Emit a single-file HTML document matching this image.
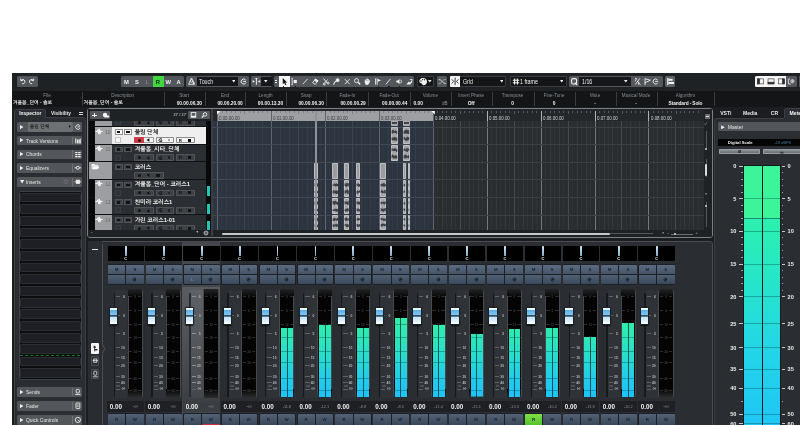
<!DOCTYPE html>
<html lang="ko"><head><meta charset="utf-8"><title>Cubase</title><style>
html,body{margin:0;padding:0;background:#fff;}
body{width:800px;height:425px;overflow:hidden;position:relative;font-family:"Liberation Sans","NanumGothic","Noto Sans CJK KR",sans-serif;}
#app{position:absolute;left:0;top:0;width:800px;height:425px;overflow:hidden;background:#fff;will-change:transform;}
#app div,#app span,#app svg{position:absolute;box-sizing:border-box;}
.t{white-space:nowrap;line-height:1;}
</style></head><body><div id="app">
<div style="left:12.00px;top:73.00px;width:788.00px;height:352.00px;background:#1b1d20;"></div>
<div style="left:12.00px;top:73.00px;width:788.00px;height:17.50px;background:#1f2225;"></div>
<div style="left:12.00px;top:90.50px;width:788.00px;height:16.50px;background:#131517;"></div>
<div style="left:16.50px;top:76.30px;width:21.00px;height:10.70px;background:#53565a;border-radius:1.5px;"></div>
<svg style="left:16.5px;top:76.3px" width="21" height="10.7" viewBox="0 0 21 10.7"><g fill="none" stroke="#eee" stroke-width="1"><path d="M4.2 4.3 A2.1 2.1 0 1 1 5.2 7.6"/><path d="M3.6 2.6 L3.9 4.8 L6 4.4"/><path d="M16.2 4.3 A2.1 2.1 0 1 0 15.2 7.6"/><path d="M16.8 2.6 L16.5 4.8 L14.4 4.4"/></g></svg>
<div style="left:121.30px;top:76.30px;width:62.50px;height:10.70px;background:#53565a;border-radius:1.5px;"></div>
<div style="left:153.00px;top:76.30px;width:10.50px;height:10.70px;background:#3fd63f;"></div>
<span class="t" style="left:121.30px;top:80.00px;font-size:5.8px;color:#f2f2f2;font-weight:bold;width:10.42px;text-align:center;">M</span>
<span class="t" style="left:131.72px;top:80.00px;font-size:5.8px;color:#f2f2f2;font-weight:bold;width:10.42px;text-align:center;">S</span>
<span class="t" style="left:142.14px;top:80.00px;font-size:5.8px;color:#7c7f83;font-weight:bold;width:10.42px;text-align:center;">L</span>
<span class="t" style="left:152.56px;top:80.00px;font-size:5.8px;color:#0a2a0a;font-weight:bold;width:10.42px;text-align:center;">R</span>
<span class="t" style="left:162.98px;top:80.00px;font-size:5.8px;color:#f2f2f2;font-weight:bold;width:10.42px;text-align:center;">W</span>
<span class="t" style="left:173.40px;top:80.00px;font-size:5.8px;color:#f2f2f2;font-weight:bold;width:10.42px;text-align:center;">A</span>
<div style="left:186.20px;top:76.30px;width:62.60px;height:10.70px;background:#53565a;border-radius:1.5px;"></div>
<div style="left:197.00px;top:76.80px;width:40.60px;height:9.70px;background:#15171a;"></div>
<span class="t" style="left:199.40px;top:79.00px;font-size:6.6px;color:#e8e8e8;font-weight:normal;transform:scaleX(0.8);transform-origin:0 50%;">Touch</span>
<svg style="left:231.50px;top:80.30px" width="3.6" height="2.6" viewBox="0 0 3.6 2.6"><path d="M0 0 L3.6 0 L1.8 2.6Z" fill="#f0f0f0"/></svg>
<svg style="left:186.2px;top:76.3px" width="11" height="10.7" viewBox="0 0 11 10.7"><g fill="none" stroke="#e6e6e6" stroke-width="0.9"><path d="M5.5 2 L2.6 8.3 L8.4 8.3 Z"/><circle cx="5.5" cy="5" r="1.3"/><path d="M6.5 7.2 L8.9 7.2 M7.7 6 L7.7 8.4"/></g></svg>
<svg style="left:238px;top:76.3px" width="11" height="10.7" viewBox="0 0 11 10.7"><g fill="none" stroke="#eee" stroke-width="1"><path d="M7.6 4 A2.5 2.5 0 1 0 7.9 6.6"/><path d="M5 5.4 L8 5.4"/></g></svg>
<div style="left:250.60px;top:76.30px;width:21.40px;height:10.70px;background:#53565a;border-radius:1.5px;"></div>
<div style="left:261.00px;top:76.80px;width:10.50px;height:9.70px;background:#15171a;"></div>
<svg style="left:264.40px;top:80.30px" width="3.6" height="2.6" viewBox="0 0 3.6 2.6"><path d="M0 0 L3.6 0 L1.8 2.6Z" fill="#f0f0f0"/></svg>
<svg style="left:250.6px;top:76.3px" width="11" height="10.7" viewBox="0 0 11 10.7"><g stroke="#eee" stroke-width="1" fill="#eee"><path d="M5.4 2 L5.4 8.8" fill="none"/><path d="M1.6 4 L4 5.4 L1.6 6.8 Z" stroke="none"/><path d="M9.2 4 L6.8 5.4 L9.2 6.8 Z" stroke="none"/><path d="M3.8 2.3 L7 2.3 L5.4 3.6Z" stroke="none"/></g></svg>
<div style="left:273.80px;top:76.30px;width:140.60px;height:10.70px;background:#53565a;border-radius:1.5px;"></div>
<div style="left:279.00px;top:76.30px;width:10.50px;height:10.70px;background:#f4f4f4;"></div>
<div style="left:275.20px;top:80.20px;width:1.60px;height:1.20px;background:#e8e8e8;"></div>
<div style="left:275.20px;top:82.30px;width:1.60px;height:1.20px;background:#e8e8e8;"></div>
<svg style="left:279.00px;top:76.3px" width="10.42" height="10.7" viewBox="0 0 10.4 10.7"><g transform="translate(5.2 5.5) scale(0.88) translate(-5.2 -5.35)"><path d="M3.6 1.4 L3.6 8.6 L5.3 6.9 L6.5 9.6 L7.6 9.1 L6.4 6.5 L8.6 6.4 Z" fill="#111"/></g></svg>
<div style="left:282.60px;top:86.40px;width:1.20px;height:0.80px;background:#1a1a1a;"></div>
<div style="left:295.20px;top:86.40px;width:1.20px;height:0.80px;background:#1a1a1a;"></div>
<div style="left:378.00px;top:86.40px;width:1.20px;height:0.80px;background:#1a1a1a;"></div>
<div style="left:388.40px;top:86.40px;width:1.20px;height:0.80px;background:#1a1a1a;"></div>
<div style="left:398.60px;top:86.40px;width:1.20px;height:0.80px;background:#1a1a1a;"></div>
<svg style="left:289.42px;top:76.3px" width="10.42" height="10.7" viewBox="0 0 10.4 10.7"><g transform="translate(5.2 5.5) scale(0.88) translate(-5.2 -5.35)"><g stroke="#f0f0f0" fill="none" stroke-width="1"><path d="M2.2 1.8 L3.6 1.8 M2.9 1.8 L2.9 8.9 M2.2 8.9 L3.6 8.9"/><rect x="4.6" y="3.6" width="3.6" height="3.6" fill="#f0f0f0" stroke="none"/></g></g></svg>
<svg style="left:299.84px;top:76.3px" width="10.42" height="10.7" viewBox="0 0 10.4 10.7"><g transform="translate(5.2 5.5) scale(0.88) translate(-5.2 -5.35)"><g stroke="#f0f0f0" fill="none" stroke-width="1" stroke-width="1.5"><path d="M2.4 8.4 L7.8 2.6"/></g></g></svg>
<svg style="left:310.26px;top:76.3px" width="10.42" height="10.7" viewBox="0 0 10.4 10.7"><g transform="translate(5.2 5.5) scale(0.88) translate(-5.2 -5.35)"><g stroke="#f0f0f0" fill="none" stroke-width="1"><path d="M2.2 6.6 L5.6 2.6 L8.4 4.6 L5.2 8.6 Z"/><path d="M5.6 2.6 L8.4 4.6 L7.2 6 L4.4 4 Z" fill="#f0f0f0"/></g></g></svg>
<svg style="left:320.68px;top:76.3px" width="10.42" height="10.7" viewBox="0 0 10.4 10.7"><g transform="translate(5.2 5.5) scale(0.88) translate(-5.2 -5.35)"><g stroke="#f0f0f0" fill="none" stroke-width="1"><path d="M2.2 2 L6.4 7.2 M6.6 3.2 L3.4 7.2"/><circle cx="3" cy="8.3" r="1.1"/><circle cx="7.4" cy="7.2" r="1.1"/></g></g></svg>
<svg style="left:331.10px;top:76.3px" width="10.42" height="10.7" viewBox="0 0 10.4 10.7"><g transform="translate(5.2 5.5) scale(0.88) translate(-5.2 -5.35)"><g stroke="#f0f0f0" fill="none" stroke-width="1"><path d="M2.2 8.8 Q3 5.6 5.4 4.8" stroke-width="1.3"/><circle cx="6.8" cy="3.8" r="1.7" fill="#f0f0f0"/></g></g></svg>
<svg style="left:341.52px;top:76.3px" width="10.42" height="10.7" viewBox="0 0 10.4 10.7"><g transform="translate(5.2 5.5) scale(0.88) translate(-5.2 -5.35)"><g stroke="#f0f0f0" fill="none" stroke-width="1" stroke-width="1.4"><path d="M2.4 2.6 L8 8.4 M8 2.6 L2.4 8.4"/></g></g></svg>
<svg style="left:351.94px;top:76.3px" width="10.42" height="10.7" viewBox="0 0 10.4 10.7"><g transform="translate(5.2 5.5) scale(0.88) translate(-5.2 -5.35)"><g stroke="#f0f0f0" fill="none" stroke-width="1" stroke-width="1.1"><circle cx="4.4" cy="4.4" r="2.3"/><path d="M6.2 6.2 L8.6 8.8" stroke-width="1.5"/></g></g></svg>
<svg style="left:362.36px;top:76.3px" width="10.42" height="10.7" viewBox="0 0 10.4 10.7"><g transform="translate(5.2 5.5) scale(0.88) translate(-5.2 -5.35)"><path d="M2.4 5 L2.4 3.6 Q3 3 3.6 3.6 L3.6 2.6 Q4.2 2 4.8 2.6 L4.8 2.3 Q5.4 1.7 6 2.3 L6 2.7 Q6.6 2.2 7.2 2.8 L7.2 4.6 L8 4 Q8.8 3.9 8.6 4.8 L7.4 7.4 Q6.8 9.2 5 9.2 Q3 9.2 2.4 7 Z" fill="#eee"/><path d="M3.6 3.6 L3.6 5 M4.8 2.8 L4.8 5 M6 2.8 L6 5" stroke="#53565a" stroke-width="0.35" fill="none"/></g></svg>
<svg style="left:372.78px;top:76.3px" width="10.42" height="10.7" viewBox="0 0 10.4 10.7"><g transform="translate(5.2 5.5) scale(0.88) translate(-5.2 -5.35)"><g stroke="#f0f0f0" fill="none" stroke-width="1"><path d="M2.2 1.8 L2.2 9 M4 1.8 L4 9"/><path d="M4.6 2.4 L8.4 3.8 L4.6 5.6 Z" fill="#f0f0f0" stroke="none"/></g></g></svg>
<svg style="left:383.20px;top:76.3px" width="10.42" height="10.7" viewBox="0 0 10.4 10.7"><g transform="translate(5.2 5.5) scale(0.88) translate(-5.2 -5.35)"><g stroke="#f0f0f0" fill="none" stroke-width="1" stroke-width="1.2"><path d="M2.6 8.6 L7.8 2.4"/></g></g></svg>
<svg style="left:393.62px;top:76.3px" width="10.42" height="10.7" viewBox="0 0 10.4 10.7"><g transform="translate(5.2 5.5) scale(0.88) translate(-5.2 -5.35)"><g stroke="#f0f0f0" fill="none" stroke-width="1"><path d="M2 4.3 L3.6 4.3 L5.6 2.4 L5.6 8.4 L3.6 6.6 L2 6.6 Z" fill="#f0f0f0" stroke="none"/><path d="M7 3.4 Q8.4 5.4 7 7.4"/></g></g></svg>
<svg style="left:404.04px;top:76.3px" width="10.42" height="10.7" viewBox="0 0 10.4 10.7"><g transform="translate(5.2 5.5) scale(0.88) translate(-5.2 -5.35)"><path d="M2 8.8 L4.6 5.4 L6 6.4 L8.6 3.6 L8.6 6.2 L6.2 8.8 Z M5.2 2.6 L8.8 2.6 L8.8 4.6Z" fill="#eee"/></g></svg>
<div style="left:416.90px;top:76.30px;width:17.60px;height:10.70px;background:#131517;border:0.8px solid #3a3d41;border-radius:1px;"></div>
<svg style="left:417.5px;top:76.3px" width="10" height="10.7" viewBox="0 0 10 10.7"><path d="M5 2 C2.2 2 1 4 1.4 5.8 C1.8 7.6 3.2 7 3.8 7.6 C4.4 8.4 4.2 9.2 5.4 9.2 C7.6 9.2 9 7.4 9 5.4 C9 3.4 7.4 2 5 2 Z" fill="#f2f2f2"/><circle cx="3" cy="5" r="0.7" fill="#222"/><circle cx="4.6" cy="3.6" r="0.7" fill="#222"/><circle cx="6.6" cy="3.8" r="0.7" fill="#222"/></svg>
<svg style="left:428.20px;top:80.30px" width="3.6" height="2.6" viewBox="0 0 3.6 2.6"><path d="M0 0 L3.6 0 L1.8 2.6Z" fill="#f0f0f0"/></svg>
<div style="left:436.90px;top:76.30px;width:10.30px;height:10.70px;background:#53565a;border-radius:1.5px;"></div>
<svg style="left:436.9px;top:76.3px" width="10.3" height="10.7" viewBox="0 0 10.3 10.7"><g fill="none" stroke="#eee" stroke-width="0.8"><path d="M1.6 3.4 C4.8 3.4 5.4 7.6 8.8 7.6"/><path d="M1.6 7.6 C3.4 7.6 4.2 6.6 5.1 5.5 C6 4.4 6.8 3.4 8.8 3.4" stroke-width="0.6" stroke="#cfcfcf"/></g></svg>
<div style="left:450.00px;top:76.30px;width:56.40px;height:10.70px;background:#131517;border:0.8px solid #3a3d41;border-radius:1px;"></div>
<div style="left:450.00px;top:76.30px;width:10.20px;height:10.70px;background:#f4f4f4;border-radius:1px 0 0 1px;"></div>
<svg style="left:450px;top:76.3px" width="10.2" height="10.7" viewBox="0 0 10.2 10.7"><g stroke="#222" stroke-width="0.9" fill="none"><path d="M5.1 1.6 L5.1 9.2"/><path d="M1.8 3.4 L3.8 5.4 L1.8 7.4 M8.4 3.4 L6.4 5.4 L8.4 7.4"/></g></svg>
<span class="t" style="left:462.80px;top:79.00px;font-size:6.6px;color:#e8e8e8;font-weight:normal;transform:scaleX(0.8);transform-origin:0 50%;">Grid</span>
<svg style="left:499.80px;top:80.30px" width="3.6" height="2.6" viewBox="0 0 3.6 2.6"><path d="M0 0 L3.6 0 L1.8 2.6Z" fill="#f0f0f0"/></svg>
<div style="left:509.60px;top:76.30px;width:57.00px;height:10.70px;background:#131517;border:0.8px solid #3a3d41;border-radius:1px;"></div>
<svg style="left:511.5px;top:76.3px" width="8" height="10.7" viewBox="0 0 8 10.7"><g stroke="#f2f2f2" stroke-width="1.1" fill="none"><path d="M2.6 2.4 L2.6 8.6 M5.4 2.4 L5.4 8.6 M0.8 4.2 L7.2 4.2 M0.8 6.8 L7.2 6.8"/></g></svg>
<span class="t" style="left:520.40px;top:79.00px;font-size:6.6px;color:#f0f0f0;font-weight:normal;transform:scaleX(0.8);transform-origin:0 50%;">1 frame</span>
<svg style="left:559.60px;top:80.30px" width="3.6" height="2.6" viewBox="0 0 3.6 2.6"><path d="M0 0 L3.6 0 L1.8 2.6Z" fill="#f0f0f0"/></svg>
<div style="left:569.00px;top:76.30px;width:93.50px;height:10.70px;background:#53565a;border-radius:1.5px;"></div>
<div style="left:579.40px;top:76.80px;width:51.80px;height:9.70px;background:#15171a;"></div>
<svg style="left:569px;top:76.3px" width="10.4" height="10.7" viewBox="0 0 10.4 10.7"><g stroke="#f2f2f2" stroke-width="1.1" fill="none"><rect x="2.6" y="2.6" width="5" height="5.4" rx="1.4"/><path d="M5.8 6.6 L8.2 9"/></g></svg>
<span class="t" style="left:582.00px;top:79.00px;font-size:6.6px;color:#f0f0f0;font-weight:normal;transform:scaleX(0.8);transform-origin:0 50%;">1/16</span>
<svg style="left:624.40px;top:80.30px" width="3.6" height="2.6" viewBox="0 0 3.6 2.6"><path d="M0 0 L3.6 0 L1.8 2.6Z" fill="#f0f0f0"/></svg>
<svg style="left:631.5px;top:76.3px" width="31" height="10.7" viewBox="0 0 31 10.7"><g stroke="#eee" stroke-width="0.9" fill="none"><path d="M3.2 8.6 L7.8 2.4"/><path d="M3 2.6 L4.6 2.6 L3.2 5.4"/><path d="M6.6 5.4 L6.6 8.8 M6.6 7 L8.6 8.8"/><path d="M13 2.6 L13 9 M13 2.8 L18.4 4.2 L13 6.8"/><path d="M25.6 4 A2.5 2.5 0 1 0 25.9 6.6"/><path d="M23 5.4 L26 5.4"/></g></svg>
<div style="left:664.60px;top:76.30px;width:10.60px;height:10.70px;background:#5e6165;border-radius:1.5px;"></div>
<svg style="left:664.6px;top:76.3px" width="10.6" height="10.7" viewBox="0 0 10.6 10.7"><g fill="#f2f2f2"><rect x="2.2" y="2" width="1.2" height="7"/><rect x="3.4" y="2.8" width="4.2" height="2"/><rect x="3.4" y="6" width="5.6" height="2"/></g></svg>
<div style="left:755.00px;top:76.30px;width:42.00px;height:10.70px;background:#53565a;border-radius:1.5px;"></div>
<div style="left:755.00px;top:76.30px;width:31.20px;height:10.70px;background:#f4f4f4;border-radius:1.5px 0 0 1.5px;"></div>
<svg style="left:755px;top:76.3px" width="42" height="10.7" viewBox="0 0 42 10.7"><g stroke="#2a2a2a" stroke-width="0.6" fill="none"><rect x="2.6" y="2.9" width="6" height="5"/><rect x="2.6" y="2.9" width="2" height="5" fill="#2a2a2a"/><rect x="13" y="2.9" width="6" height="5"/><rect x="13" y="6.2" width="6" height="1.7" fill="#2a2a2a"/><rect x="23.4" y="2.9" width="6" height="5"/><rect x="27.4" y="2.9" width="2" height="5" fill="#2a2a2a"/></g><g stroke="#eee" stroke-width="0.8" fill="none"><path d="M33.4 3 L33.4 8 L36 8 M33.4 3 L35 3"/><circle cx="37.4" cy="5.2" r="1.6"/><circle cx="37.4" cy="5.2" r="0.5" fill="#eee"/></g></svg>
<div style="left:799.00px;top:76.30px;width:1.00px;height:10.70px;background:#53565a;"></div>
<div style="left:81.60px;top:92.20px;width:0.60px;height:13.80px;background:#3a3d40;"></div>
<div style="left:163.70px;top:92.20px;width:0.60px;height:13.80px;background:#3a3d40;"></div>
<div style="left:204.60px;top:92.20px;width:0.60px;height:13.80px;background:#3a3d40;"></div>
<div style="left:245.40px;top:92.20px;width:0.60px;height:13.80px;background:#3a3d40;"></div>
<div style="left:285.80px;top:92.20px;width:0.60px;height:13.80px;background:#3a3d40;"></div>
<div style="left:326.40px;top:92.20px;width:0.60px;height:13.80px;background:#3a3d40;"></div>
<div style="left:368.40px;top:92.20px;width:0.60px;height:13.80px;background:#3a3d40;"></div>
<div style="left:410.00px;top:92.20px;width:0.60px;height:13.80px;background:#3a3d40;"></div>
<div style="left:450.60px;top:92.20px;width:0.60px;height:13.80px;background:#3a3d40;"></div>
<div style="left:491.60px;top:92.20px;width:0.60px;height:13.80px;background:#3a3d40;"></div>
<div style="left:533.60px;top:92.20px;width:0.60px;height:13.80px;background:#3a3d40;"></div>
<div style="left:574.60px;top:92.20px;width:0.60px;height:13.80px;background:#3a3d40;"></div>
<div style="left:615.60px;top:92.20px;width:0.60px;height:13.80px;background:#3a3d40;"></div>
<div style="left:656.50px;top:92.20px;width:0.60px;height:13.80px;background:#3a3d40;"></div>
<div style="left:714.40px;top:92.20px;width:0.60px;height:13.80px;background:#3a3d40;"></div>
<span class="t" style="left:12.50px;top:94.00px;font-size:4.6px;color:#8a8d91;font-weight:normal;width:69.10px;text-align:center;">File</span>
<span class="t" style="left:12.90px;top:101.00px;font-size:4.9px;color:#f0f0f0;font-weight:bold;">겨울봄_단어 - 솔로</span>
<span class="t" style="left:81.60px;top:94.00px;font-size:4.6px;color:#8a8d91;font-weight:normal;width:82.10px;text-align:center;">Description</span>
<span class="t" style="left:83.60px;top:101.00px;font-size:4.9px;color:#f0f0f0;font-weight:bold;">겨울봄_단어 - 솔로</span>
<span class="t" style="left:163.70px;top:94.00px;font-size:4.6px;color:#8a8d91;font-weight:normal;width:40.90px;text-align:center;">Start</span>
<span class="t" style="left:163.70px;top:102.00px;font-size:4.8px;color:#f0f0f0;font-weight:bold;width:38.30px;text-align:right;">00.00.06.30</span>
<span class="t" style="left:204.60px;top:94.00px;font-size:4.6px;color:#8a8d91;font-weight:normal;width:40.80px;text-align:center;">End</span>
<span class="t" style="left:204.60px;top:102.00px;font-size:4.8px;color:#f0f0f0;font-weight:bold;width:38.20px;text-align:right;">00.00.20.00</span>
<span class="t" style="left:245.40px;top:94.00px;font-size:4.6px;color:#8a8d91;font-weight:normal;width:40.40px;text-align:center;">Length</span>
<span class="t" style="left:245.40px;top:102.00px;font-size:4.8px;color:#f0f0f0;font-weight:bold;width:37.80px;text-align:right;">00.00.13.30</span>
<span class="t" style="left:285.80px;top:94.00px;font-size:4.6px;color:#8a8d91;font-weight:normal;width:40.60px;text-align:center;">Snap</span>
<span class="t" style="left:285.80px;top:102.00px;font-size:4.8px;color:#f0f0f0;font-weight:bold;width:38.00px;text-align:right;">00.00.06.30</span>
<span class="t" style="left:326.40px;top:94.00px;font-size:4.6px;color:#8a8d91;font-weight:normal;width:42.00px;text-align:center;">Fade-In</span>
<span class="t" style="left:326.40px;top:102.00px;font-size:4.8px;color:#f0f0f0;font-weight:bold;width:39.40px;text-align:right;">00.00.00.29</span>
<span class="t" style="left:368.40px;top:94.00px;font-size:4.6px;color:#8a8d91;font-weight:normal;width:41.60px;text-align:center;">Fade-Out</span>
<span class="t" style="left:368.40px;top:102.00px;font-size:4.8px;color:#f0f0f0;font-weight:bold;width:39.00px;text-align:right;">00.00.00.44</span>
<span class="t" style="left:410.00px;top:94.00px;font-size:4.6px;color:#8a8d91;font-weight:normal;width:40.60px;text-align:center;">Volume</span>
<span class="t" style="left:413.50px;top:102.00px;font-size:4.8px;color:#f0f0f0;font-weight:bold;">0.00</span>
<span class="t" style="left:410.00px;top:102.00px;font-size:4.6px;color:#8f9296;font-weight:normal;width:37.60px;text-align:right;">dB</span>
<span class="t" style="left:450.60px;top:94.00px;font-size:4.6px;color:#8a8d91;font-weight:normal;width:41.00px;text-align:center;">Invert Phase</span>
<span class="t" style="left:450.60px;top:102.00px;font-size:4.8px;color:#f0f0f0;font-weight:bold;width:41.00px;text-align:center;">Off</span>
<span class="t" style="left:491.60px;top:94.00px;font-size:4.6px;color:#8a8d91;font-weight:normal;width:42.00px;text-align:center;">Transpose</span>
<span class="t" style="left:491.60px;top:102.00px;font-size:4.8px;color:#f0f0f0;font-weight:bold;width:42.00px;text-align:center;">0</span>
<span class="t" style="left:533.60px;top:94.00px;font-size:4.6px;color:#8a8d91;font-weight:normal;width:41.00px;text-align:center;">Fine-Tune</span>
<span class="t" style="left:533.60px;top:102.00px;font-size:4.8px;color:#f0f0f0;font-weight:bold;width:41.00px;text-align:center;">0</span>
<span class="t" style="left:574.60px;top:94.00px;font-size:4.6px;color:#8a8d91;font-weight:normal;width:41.00px;text-align:center;">Mute</span>
<span class="t" style="left:574.60px;top:102.00px;font-size:4.8px;color:#f0f0f0;font-weight:bold;width:41.00px;text-align:center;">-</span>
<span class="t" style="left:615.60px;top:94.00px;font-size:4.6px;color:#8a8d91;font-weight:normal;width:40.90px;text-align:center;">Musical Mode</span>
<span class="t" style="left:615.60px;top:102.00px;font-size:4.8px;color:#f0f0f0;font-weight:bold;width:40.90px;text-align:center;">-</span>
<span class="t" style="left:656.50px;top:94.00px;font-size:4.6px;color:#8a8d91;font-weight:normal;width:57.90px;text-align:center;">Algorithm</span>
<span class="t" style="left:656.50px;top:102.00px;font-size:4.8px;color:#f0f0f0;font-weight:bold;width:57.90px;text-align:center;letter-spacing:-0.12px;">Standard - Solo</span>
<div style="left:14.20px;top:116.80px;width:71.60px;height:310.00px;background:#2a2d31;border-radius:0 2.5px 0 0;border:0.6px solid #3b3e42;"></div>
<div style="left:14.20px;top:108.60px;width:32.20px;height:9.00px;background:#2a2d31;border-radius:2.5px 2.5px 0 0;border:0.6px solid #3b3e42;border-bottom:none;"></div>
<span class="t" style="left:14.20px;top:112.00px;font-size:4.9px;color:#f4f4f4;font-weight:bold;width:32.20px;text-align:center;">Inspector</span>
<span class="t" style="left:51.00px;top:112.00px;font-size:4.9px;color:#e4e4e4;font-weight:bold;">Visibility</span>
<div style="left:79.20px;top:112.00px;width:3.60px;height:0.80px;background:#ddd;"></div>
<div style="left:79.20px;top:113.90px;width:3.60px;height:0.80px;background:#ddd;"></div>
<div style="left:17.30px;top:122.00px;width:65.00px;height:9.50px;background:#53565a;border-radius:1.5px;"></div>
<div style="left:72.20px;top:122.80px;width:0.50px;height:7.90px;background:#6e7175;"></div>
<svg style="left:20.20px;top:124.70px" width="3.4" height="4.2" viewBox="0 0 3.4 4.2"><path d="M0 0 L3.4 2.1 L0 4.2Z" fill="#f0f0f0"/></svg>
<div style="left:27.50px;top:122.00px;width:44.50px;height:9.50px;background:#6e7174;"></div>
<span class="t" style="left:29.80px;top:125.00px;font-size:4.8px;color:#1a1a1a;font-weight:bold;">울림 단체</span>
<svg style="left:69.00px;top:125.40px" width="1.8" height="2.8" viewBox="0 0 1.8 2.8"><path d="M0 0 L1.8 1.4 L0 2.8Z" fill="#111"/></svg>
<div style="left:17.30px;top:135.75px;width:65.00px;height:9.50px;background:#53565a;border-radius:1.5px;"></div>
<div style="left:72.20px;top:136.55px;width:0.50px;height:7.90px;background:#6e7175;"></div>
<svg style="left:20.20px;top:138.45px" width="3.4" height="4.2" viewBox="0 0 3.4 4.2"><path d="M0 0 L3.4 2.1 L0 4.2Z" fill="#f0f0f0"/></svg>
<span class="t" style="left:26.00px;top:140.00px;font-size:4.9px;color:#e6e6e6;font-weight:normal;">Track Versions</span>
<div style="left:17.30px;top:149.50px;width:65.00px;height:9.50px;background:#53565a;border-radius:1.5px;"></div>
<div style="left:72.20px;top:150.30px;width:0.50px;height:7.90px;background:#6e7175;"></div>
<svg style="left:20.20px;top:152.20px" width="3.4" height="4.2" viewBox="0 0 3.4 4.2"><path d="M0 0 L3.4 2.1 L0 4.2Z" fill="#f0f0f0"/></svg>
<span class="t" style="left:26.00px;top:153.00px;font-size:4.9px;color:#e6e6e6;font-weight:normal;">Chords</span>
<div style="left:17.30px;top:163.25px;width:65.00px;height:9.50px;background:#53565a;border-radius:1.5px;"></div>
<div style="left:72.20px;top:164.05px;width:0.50px;height:7.90px;background:#6e7175;"></div>
<svg style="left:20.20px;top:165.95px" width="3.4" height="4.2" viewBox="0 0 3.4 4.2"><path d="M0 0 L3.4 2.1 L0 4.2Z" fill="#f0f0f0"/></svg>
<span class="t" style="left:26.00px;top:167.00px;font-size:4.9px;color:#e6e6e6;font-weight:normal;">Equalizers</span>
<div style="left:17.30px;top:177.00px;width:65.00px;height:9.50px;background:#53565a;border-radius:1.5px;"></div>
<div style="left:72.20px;top:177.80px;width:0.50px;height:7.90px;background:#6e7175;"></div>
<svg style="left:20.00px;top:180.20px" width="4.2" height="3.4" viewBox="0 0 4.2 3.4"><path d="M0 0 L4.2 0 L2.1 3.4Z" fill="#f0f0f0"/></svg>
<span class="t" style="left:26.00px;top:181.00px;font-size:4.9px;color:#e6e6e6;font-weight:normal;">Inserts</span>
<div style="left:17.30px;top:387.20px;width:65.00px;height:9.50px;background:#53565a;border-radius:1.5px;"></div>
<div style="left:72.20px;top:388.00px;width:0.50px;height:7.90px;background:#6e7175;"></div>
<svg style="left:20.20px;top:389.90px" width="3.4" height="4.2" viewBox="0 0 3.4 4.2"><path d="M0 0 L3.4 2.1 L0 4.2Z" fill="#f0f0f0"/></svg>
<span class="t" style="left:26.00px;top:391.00px;font-size:4.9px;color:#e6e6e6;font-weight:normal;">Sends</span>
<div style="left:17.30px;top:401.20px;width:65.00px;height:9.50px;background:#53565a;border-radius:1.5px;"></div>
<div style="left:72.20px;top:402.00px;width:0.50px;height:7.90px;background:#6e7175;"></div>
<svg style="left:20.20px;top:403.90px" width="3.4" height="4.2" viewBox="0 0 3.4 4.2"><path d="M0 0 L3.4 2.1 L0 4.2Z" fill="#f0f0f0"/></svg>
<span class="t" style="left:26.00px;top:405.00px;font-size:4.9px;color:#e6e6e6;font-weight:normal;">Fader</span>
<div style="left:17.30px;top:415.10px;width:65.00px;height:9.50px;background:#53565a;border-radius:1.5px;"></div>
<div style="left:72.20px;top:415.90px;width:0.50px;height:7.90px;background:#6e7175;"></div>
<svg style="left:20.20px;top:417.80px" width="3.4" height="4.2" viewBox="0 0 3.4 4.2"><path d="M0 0 L3.4 2.1 L0 4.2Z" fill="#f0f0f0"/></svg>
<span class="t" style="left:26.00px;top:419.00px;font-size:4.9px;color:#e6e6e6;font-weight:normal;">Quick Controls</span>
<svg style="left:72.7px;top:122px" width="9.6" height="9.5" viewBox="0 0 9.6 9.5"><g fill="none" stroke="#eee" stroke-width="0.9"><path d="M6.8 3.6 A2.3 2.3 0 1 0 7.1 6"/><path d="M4.4 4.9 L7.2 4.9"/></g></svg>
<svg style="left:72.7px;top:135.75px" width="9.6" height="9.5" viewBox="0 0 9.6 9.5"><g fill="#eee"><rect x="2.2" y="2.4" width="1.1" height="5"/><rect x="4" y="3.4" width="1.6" height="4"/><path d="M6.2 3.4 L7.8 2.4 L7.8 7.4 L6.2 7.4Z"/></g></svg>
<svg style="left:72.7px;top:149.5px" width="9.6" height="9.5" viewBox="0 0 9.6 9.5"><g fill="#eee"><rect x="2.2" y="2" width="5.4" height="1.2"/><rect x="2.2" y="4" width="5.4" height="1.2"/><rect x="2.2" y="6" width="5.4" height="1.4"/><rect x="4.5" y="2" width="0.6" height="5.4" fill="#4b4e52"/></g></svg>
<svg style="left:72.7px;top:163.25px" width="9.6" height="9.5" viewBox="0 0 9.6 9.5"><g fill="none" stroke="#eee" stroke-width="0.9" stroke-width="0.7"><path d="M1.6 4.8 L3.4 4.8 M6.4 4.8 L8.2 4.8"/><circle cx="4.9" cy="4.8" r="1.5"/></g></svg>
<svg style="left:72.7px;top:177px" width="9.6" height="9.5" viewBox="0 0 9.6 9.5"><g fill="none" stroke="#eee" stroke-width="0.9" stroke-width="0.7"><path d="M1.6 4.8 L8.2 4.8"/><rect x="3.4" y="3.2" width="3" height="3.2" fill="#eee"/></g></svg>
<svg style="left:61px;top:177px" width="9.6" height="9.5" viewBox="0 0 9.6 9.5"><g fill="none" stroke="#7a7d81" stroke-width="0.7"><circle cx="4.8" cy="4.6" r="1.8"/></g></svg>
<svg style="left:72.7px;top:387.2px" width="9.6" height="9.5" viewBox="0 0 9.6 9.5"><g fill="none" stroke="#eee" stroke-width="0.9" stroke-width="0.7"><rect x="3.2" y="2.4" width="3.2" height="3.6" rx="1"/><path d="M2.2 7.4 L7.6 7.4"/></g></svg>
<svg style="left:72.7px;top:401.2px" width="9.6" height="9.5" viewBox="0 0 9.6 9.5"><g fill="none" stroke="#eee" stroke-width="0.9" stroke-width="0.7"><rect x="3" y="2" width="3.8" height="5.6" rx="0.6"/><path d="M4.9 3.4 L4.9 6.2"/></g></svg>
<svg style="left:72.7px;top:415.1px" width="9.6" height="9.5" viewBox="0 0 9.6 9.5"><g fill="none" stroke="#eee" stroke-width="0.9" stroke-width="0.9"><circle cx="4.9" cy="4.9" r="2.6"/><path d="M4.9 4.9 L6.6 6.6"/></g></svg>
<div style="left:18.60px;top:190.60px;width:63.00px;height:189.00px;background:#0c0d0e;border-radius:2px;border:0.6px solid #3d4044;"></div>
<div style="left:19.80px;top:192.50px;width:60.80px;height:9.90px;background:#1d1f25;border-radius:1.2px;border:0.5px solid #2b2e34;"></div>
<div style="left:19.80px;top:204.18px;width:60.80px;height:9.90px;background:#1d1f25;border-radius:1.2px;border:0.5px solid #2b2e34;"></div>
<div style="left:19.80px;top:215.86px;width:60.80px;height:9.90px;background:#1d1f25;border-radius:1.2px;border:0.5px solid #2b2e34;"></div>
<div style="left:19.80px;top:227.54px;width:60.80px;height:9.90px;background:#1d1f25;border-radius:1.2px;border:0.5px solid #2b2e34;"></div>
<div style="left:19.80px;top:239.22px;width:60.80px;height:9.90px;background:#1d1f25;border-radius:1.2px;border:0.5px solid #2b2e34;"></div>
<div style="left:19.80px;top:250.90px;width:60.80px;height:9.90px;background:#1d1f25;border-radius:1.2px;border:0.5px solid #2b2e34;"></div>
<div style="left:19.80px;top:262.58px;width:60.80px;height:9.90px;background:#1d1f25;border-radius:1.2px;border:0.5px solid #2b2e34;"></div>
<div style="left:19.80px;top:274.26px;width:60.80px;height:9.90px;background:#1d1f25;border-radius:1.2px;border:0.5px solid #2b2e34;"></div>
<div style="left:19.80px;top:285.94px;width:60.80px;height:9.90px;background:#1d1f25;border-radius:1.2px;border:0.5px solid #2b2e34;"></div>
<div style="left:19.80px;top:297.62px;width:60.80px;height:9.90px;background:#1d1f25;border-radius:1.2px;border:0.5px solid #2b2e34;"></div>
<div style="left:19.80px;top:309.30px;width:60.80px;height:9.90px;background:#1d1f25;border-radius:1.2px;border:0.5px solid #2b2e34;"></div>
<div style="left:19.80px;top:320.98px;width:60.80px;height:9.90px;background:#1d1f25;border-radius:1.2px;border:0.5px solid #2b2e34;"></div>
<div style="left:19.80px;top:332.66px;width:60.80px;height:9.90px;background:#1d1f25;border-radius:1.2px;border:0.5px solid #2b2e34;"></div>
<div style="left:19.80px;top:344.34px;width:60.80px;height:9.90px;background:#1d1f25;border-radius:1.2px;border:0.5px solid #2b2e34;"></div>
<div style="left:19.80px;top:356.80px;width:60.80px;height:9.40px;background:#1d1f25;border-radius:1.2px;border:0.5px solid #2b2e34;"></div>
<div style="left:19.80px;top:368.00px;width:60.80px;height:9.60px;background:#1d1f25;border-radius:1.2px;border:0.5px solid #2b2e34;"></div>
<div style="left:20.00px;top:355.10px;width:60.40px;height:0.80px;border-top:0.8px dashed #1a7c28;"></div>
<div style="left:87.40px;top:108.20px;width:625.20px;height:130.00px;background:#1b1d20;border:1px solid #7c7f83;border-radius:3px;"></div>
<div style="left:88.40px;top:109.20px;width:123.00px;height:12.00px;background:#1f2225;"></div>
<div style="left:89.80px;top:111.40px;width:20.40px;height:7.20px;background:#54575b;border-radius:1px;"></div>
<div style="left:92.40px;top:114.50px;width:4.60px;height:1.00px;background:#f2f2f2;"></div>
<div style="left:94.20px;top:112.70px;width:1.00px;height:4.60px;background:#f2f2f2;"></div>
<svg style="left:100.7px;top:110.9px" width="9" height="8.2" viewBox="0 0 9 8.2"><g fill="#f2f2f2"><circle cx="4" cy="4" r="2.2"/><rect x="3.6" y="4.4" width="4.6" height="2.2" rx="0.6"/></g></svg>
<span class="t" style="left:160.00px;top:113.00px;font-size:4.2px;color:#9a9da1;font-weight:bold;width:26.00px;text-align:right;font-style:italic;">37 / 37</span>
<div style="left:188.20px;top:111.40px;width:21.40px;height:7.80px;background:#54575b;border-radius:1px;"></div>
<svg style="left:188.2px;top:111.4px" width="10.7" height="7.8" viewBox="0 0 10.7 7.8"><g fill="none" stroke="#f2f2f2" stroke-width="0.9"><rect x="3.2" y="1.6" width="4.6" height="4.6"/></g><rect x="3.2" y="4.8" width="4.6" height="1.4" fill="#f2f2f2"/></svg>
<svg style="left:198.9px;top:111.4px" width="10.7" height="7.8" viewBox="0 0 10.7 7.8"><g fill="none" stroke="#f2f2f2" stroke-width="0.9"><circle cx="6" cy="3.4" r="1.8"/><path d="M4.6 4.8 L2.8 6.6" stroke-width="1.2"/></g></svg>
<div style="left:89.40px;top:121.20px;width:122.00px;height:108.80px;background:#08090a;"></div>
<div style="left:89.4px;top:121.2px;width:123px;height:108.6px;overflow:hidden;"><div style="left:5.80px;top:-11.80px;width:16.60px;height:17.10px;background:#9c9ea1;"></div><svg style="left:6.00px;top:-11.20px" width="8" height="7" viewBox="0 0 8 7"><path d="M0.4 3.6 L2.2 3.6 L2.8 1.8 L3.6 5.6 L4.2 0.8 L4.9 6.2 L5.5 2.6 L6 3.6 L7.6 3.6" fill="none" stroke="#fff" stroke-width="0.9"/></svg><span class="t" style="left:14.80px;top:-8.20px;font-size:4.8px;color:#6a6c70;font-weight:normal;width:7.40px;text-align:center;">9</span><div style="left:22.40px;top:-11.80px;width:94.60px;height:17.00px;background:#2b2e32;"></div><div style="left:25.20px;top:-9.80px;width:8.00px;height:5.80px;background:#3d4044;border:0.5px solid #505357;border-radius:0.6px;"></div><div style="left:34.60px;top:-9.80px;width:8.00px;height:5.80px;background:#3d4044;border:0.5px solid #505357;border-radius:0.6px;"></div><div style="left:27.60px;top:-8.00px;width:3.20px;height:2.40px;background:#121314;"></div><div style="left:37.00px;top:-8.00px;width:3.20px;height:2.40px;background:#121314;"></div><span class="t" style="left:45.40px;top:-9.20px;font-size:5.8px;color:#f4f4f4;font-weight:bold;"></span><div style="left:25.20px;top:-1.80px;width:6.60px;height:6.00px;background:#2f3236;border:0.5px solid #3a3d41;"></div><div style="left:44.60px;top:-2.00px;width:20.40px;height:6.60px;background:#3d4044;border:0.5px solid #505357;border-radius:0.8px;"></div><div style="left:48.20px;top:-0.20px;width:3.00px;height:3.00px;background:#121314;border-radius:50%;"></div><svg style="left:56.60px;top:-0.60px" width="5" height="4" viewBox="0 0 5 4"><path d="M0.4 2 L3.4 0.2 L3.4 3.8 Z" fill="#121314"/></svg><div style="left:66.20px;top:-2.00px;width:18.40px;height:6.60px;background:#3d4044;border:0.5px solid #505357;border-radius:0.8px;"></div><svg style="left:68.20px;top:-0.80px" width="6" height="4.4" viewBox="0 0 6 4.4"><g fill="none" stroke="#121314" stroke-width="0.9"><path d="M3.9 1.2 A1.6 1.6 0 1 0 4.1 3"/><path d="M2.2 2.2 L4.2 2.2"/></g></svg><div style="left:78.20px;top:0.10px;width:2.60px;height:2.60px;background:#1c1e20;border-radius:50%;"></div><div style="left:87.00px;top:-2.00px;width:18.60px;height:6.60px;background:#3d4044;border:0.5px solid #505357;border-radius:0.8px;"></div><span class="t" style="left:89.40px;top:-0.20px;font-size:4.4px;color:#121314;font-weight:bold;">R</span><div style="left:98.40px;top:-0.20px;width:3.40px;height:3.00px;background:#121314;"></div><div style="left:0.00px;top:5.00px;width:117.00px;height:0.80px;background:#101112;"></div><div style="left:5.80px;top:5.80px;width:16.60px;height:17.10px;background:#a2a4a7;"></div><svg style="left:6.00px;top:6.40px" width="8" height="7" viewBox="0 0 8 7"><path d="M0.4 3.6 L2.2 3.6 L2.8 1.8 L3.6 5.6 L4.2 0.8 L4.9 6.2 L5.5 2.6 L6 3.6 L7.6 3.6" fill="none" stroke="#fff" stroke-width="0.9"/></svg><span class="t" style="left:14.80px;top:9.80px;font-size:4.8px;color:#6a6c70;font-weight:normal;width:7.40px;text-align:center;">10</span><div style="left:22.40px;top:5.80px;width:94.60px;height:17.00px;background:#efefef;"></div><div style="left:25.20px;top:7.80px;width:8.00px;height:5.80px;background:#fafafa;border:0.5px solid #8c8c8c;border-radius:0.6px;"></div><div style="left:34.60px;top:7.80px;width:8.00px;height:5.80px;background:#fafafa;border:0.5px solid #8c8c8c;border-radius:0.6px;"></div><div style="left:27.60px;top:9.60px;width:3.20px;height:2.40px;background:#111;"></div><div style="left:37.00px;top:9.60px;width:3.20px;height:2.40px;background:#111;"></div><span class="t" style="left:45.40px;top:8.80px;font-size:5.8px;color:#111;font-weight:bold;">울림 단체</span><div style="left:25.20px;top:15.80px;width:6.60px;height:6.00px;background:#f6f6f6;border:0.5px solid #c4c4c4;"></div><div style="left:44.60px;top:15.60px;width:20.40px;height:6.60px;background:#f4f4f4;border:0.5px solid #9a9a9a;border-radius:0.8px;"></div><div style="left:44.60px;top:15.60px;width:10.20px;height:6.60px;background:#d23c4a;border-radius:0.8px 0 0 0.8px;"></div><div style="left:48.20px;top:17.40px;width:3.00px;height:3.00px;background:#111;border-radius:50%;"></div><svg style="left:56.60px;top:17.00px" width="5" height="4" viewBox="0 0 5 4"><path d="M0.4 2 L3.4 0.2 L3.4 3.8 Z" fill="#111"/></svg><div style="left:66.20px;top:15.60px;width:18.40px;height:6.60px;background:#f4f4f4;border:0.5px solid #8c8c8c;border-radius:0.8px;"></div><svg style="left:68.20px;top:16.80px" width="6" height="4.4" viewBox="0 0 6 4.4"><g fill="none" stroke="#111" stroke-width="0.9"><path d="M3.9 1.2 A1.6 1.6 0 1 0 4.1 3"/><path d="M2.2 2.2 L4.2 2.2"/></g></svg><div style="left:78.20px;top:17.70px;width:2.60px;height:2.60px;background:#888;border-radius:50%;"></div><div style="left:87.00px;top:15.60px;width:18.60px;height:6.60px;background:#f4f4f4;border:0.5px solid #8c8c8c;border-radius:0.8px;"></div><span class="t" style="left:89.40px;top:17.80px;font-size:4.4px;color:#111;font-weight:bold;">R</span><div style="left:98.40px;top:17.40px;width:3.40px;height:3.00px;background:#111;"></div><div style="left:0.00px;top:22.60px;width:117.00px;height:0.80px;background:#101112;"></div><div style="left:5.80px;top:23.40px;width:16.60px;height:17.10px;background:#9c9ea1;"></div><svg style="left:6.00px;top:24.00px" width="8" height="7" viewBox="0 0 8 7"><path d="M0.4 3.6 L2.2 3.6 L2.8 1.8 L3.6 5.6 L4.2 0.8 L4.9 6.2 L5.5 2.6 L6 3.6 L7.6 3.6" fill="none" stroke="#fff" stroke-width="0.9"/></svg><span class="t" style="left:14.80px;top:26.80px;font-size:4.8px;color:#6a6c70;font-weight:normal;width:7.40px;text-align:center;">11</span><div style="left:22.40px;top:23.40px;width:94.60px;height:17.00px;background:#2b2e32;"></div><div style="left:25.20px;top:25.40px;width:8.00px;height:5.80px;background:#3d4044;border:0.5px solid #505357;border-radius:0.6px;"></div><div style="left:34.60px;top:25.40px;width:8.00px;height:5.80px;background:#3d4044;border:0.5px solid #505357;border-radius:0.6px;"></div><div style="left:27.60px;top:27.20px;width:3.20px;height:2.40px;background:#121314;"></div><div style="left:37.00px;top:27.20px;width:3.20px;height:2.40px;background:#121314;"></div><span class="t" style="left:45.40px;top:25.80px;font-size:5.8px;color:#f4f4f4;font-weight:bold;">겨울봄_시타_단체</span><div style="left:25.20px;top:33.40px;width:6.60px;height:6.00px;background:#2f3236;border:0.5px solid #3a3d41;"></div><div style="left:44.60px;top:33.20px;width:20.40px;height:6.60px;background:#3d4044;border:0.5px solid #505357;border-radius:0.8px;"></div><div style="left:48.20px;top:35.00px;width:3.00px;height:3.00px;background:#121314;border-radius:50%;"></div><svg style="left:56.60px;top:34.60px" width="5" height="4" viewBox="0 0 5 4"><path d="M0.4 2 L3.4 0.2 L3.4 3.8 Z" fill="#121314"/></svg><div style="left:66.20px;top:33.20px;width:18.40px;height:6.60px;background:#3d4044;border:0.5px solid #505357;border-radius:0.8px;"></div><svg style="left:68.20px;top:34.40px" width="6" height="4.4" viewBox="0 0 6 4.4"><g fill="none" stroke="#121314" stroke-width="0.9"><path d="M3.9 1.2 A1.6 1.6 0 1 0 4.1 3"/><path d="M2.2 2.2 L4.2 2.2"/></g></svg><div style="left:78.20px;top:35.30px;width:2.60px;height:2.60px;background:#1c1e20;border-radius:50%;"></div><div style="left:87.00px;top:33.20px;width:18.60px;height:6.60px;background:#3d4044;border:0.5px solid #505357;border-radius:0.8px;"></div><span class="t" style="left:89.40px;top:34.80px;font-size:4.4px;color:#121314;font-weight:bold;">R</span><div style="left:98.40px;top:35.00px;width:3.40px;height:3.00px;background:#121314;"></div><div style="left:0.00px;top:40.20px;width:117.00px;height:0.80px;background:#101112;"></div><div style="left:5.80px;top:41.00px;width:16.60px;height:17.10px;background:#9c9ea1;"></div><div style="left:0.00px;top:41.00px;width:6.00px;height:17.10px;background:#9c9ea1;"></div><svg style="left:1.20px;top:42.20px" width="9" height="7" viewBox="0 0 9 7"><path d="M0.6 1 L3 1 L3.8 1.8 L7 1.8 L7 2.8 L2 2.8 L0.6 6 Z" fill="#fff"/><path d="M2.2 3.2 L8.4 3.2 L7 6.2 L0.8 6.2 Z" fill="#fff"/></svg><div style="left:22.40px;top:41.00px;width:94.60px;height:17.00px;background:#2b2e32;"></div><div style="left:25.20px;top:43.00px;width:8.00px;height:5.80px;background:#3d4044;border:0.5px solid #505357;border-radius:0.6px;"></div><div style="left:34.60px;top:43.00px;width:8.00px;height:5.80px;background:#3d4044;border:0.5px solid #505357;border-radius:0.6px;"></div><div style="left:27.60px;top:44.80px;width:3.20px;height:2.40px;background:#121314;"></div><div style="left:37.00px;top:44.80px;width:3.20px;height:2.40px;background:#121314;"></div><span class="t" style="left:45.40px;top:43.80px;font-size:5.8px;color:#f4f4f4;font-weight:bold;">코러스</span><div style="left:44.60px;top:50.80px;width:29.60px;height:6.60px;background:#3d4044;border:0.5px solid #505357;border-radius:0.8px;"></div><div style="left:48.20px;top:52.60px;width:3.00px;height:3.00px;background:#121314;border-radius:50%;"></div><svg style="left:56.60px;top:52.20px" width="5" height="4" viewBox="0 0 5 4"><path d="M0.4 2 L3.4 0.2 L3.4 3.8 Z" fill="#121314"/></svg><div style="left:67.00px;top:52.80px;width:3.40px;height:2.60px;background:#121314;"></div><div style="left:0.00px;top:57.80px;width:117.00px;height:0.80px;background:#101112;"></div><div style="left:5.80px;top:58.60px;width:16.60px;height:17.10px;background:#9c9ea1;"></div><svg style="left:6.00px;top:59.20px" width="8" height="7" viewBox="0 0 8 7"><path d="M0.4 3.6 L2.2 3.6 L2.8 1.8 L3.6 5.6 L4.2 0.8 L4.9 6.2 L5.5 2.6 L6 3.6 L7.6 3.6" fill="none" stroke="#fff" stroke-width="0.9"/></svg><span class="t" style="left:14.80px;top:61.80px;font-size:4.8px;color:#6a6c70;font-weight:normal;width:7.40px;text-align:center;">12</span><div style="left:22.40px;top:58.60px;width:94.60px;height:17.00px;background:#2b2e32;"></div><div style="left:25.20px;top:60.60px;width:8.00px;height:5.80px;background:#3d4044;border:0.5px solid #505357;border-radius:0.6px;"></div><div style="left:34.60px;top:60.60px;width:8.00px;height:5.80px;background:#3d4044;border:0.5px solid #505357;border-radius:0.6px;"></div><div style="left:27.60px;top:62.40px;width:3.20px;height:2.40px;background:#121314;"></div><div style="left:37.00px;top:62.40px;width:3.20px;height:2.40px;background:#121314;"></div><span class="t" style="left:45.40px;top:60.80px;font-size:5.8px;color:#f4f4f4;font-weight:bold;">겨울봄_단어 - 코러스1</span><div style="left:25.20px;top:68.60px;width:6.60px;height:6.00px;background:#2f3236;border:0.5px solid #3a3d41;"></div><div style="left:44.60px;top:68.40px;width:20.40px;height:6.60px;background:#3d4044;border:0.5px solid #505357;border-radius:0.8px;"></div><div style="left:48.20px;top:70.20px;width:3.00px;height:3.00px;background:#121314;border-radius:50%;"></div><svg style="left:56.60px;top:69.80px" width="5" height="4" viewBox="0 0 5 4"><path d="M0.4 2 L3.4 0.2 L3.4 3.8 Z" fill="#121314"/></svg><div style="left:66.20px;top:68.40px;width:18.40px;height:6.60px;background:#3d4044;border:0.5px solid #505357;border-radius:0.8px;"></div><svg style="left:68.20px;top:69.60px" width="6" height="4.4" viewBox="0 0 6 4.4"><g fill="none" stroke="#121314" stroke-width="0.9"><path d="M3.9 1.2 A1.6 1.6 0 1 0 4.1 3"/><path d="M2.2 2.2 L4.2 2.2"/></g></svg><div style="left:78.20px;top:70.50px;width:2.60px;height:2.60px;background:#1c1e20;border-radius:50%;"></div><div style="left:87.00px;top:68.40px;width:18.60px;height:6.60px;background:#3d4044;border:0.5px solid #505357;border-radius:0.8px;"></div><span class="t" style="left:89.40px;top:69.80px;font-size:4.4px;color:#121314;font-weight:bold;">R</span><div style="left:98.40px;top:70.20px;width:3.40px;height:3.00px;background:#121314;"></div><div style="left:0.00px;top:75.40px;width:117.00px;height:0.80px;background:#101112;"></div><div style="left:117.80px;top:65.00px;width:2.80px;height:10.20px;background:#1fc7b4;"></div><div style="left:5.80px;top:76.20px;width:16.60px;height:17.10px;background:#9c9ea1;"></div><svg style="left:6.00px;top:76.80px" width="8" height="7" viewBox="0 0 8 7"><path d="M0.4 3.6 L2.2 3.6 L2.8 1.8 L3.6 5.6 L4.2 0.8 L4.9 6.2 L5.5 2.6 L6 3.6 L7.6 3.6" fill="none" stroke="#fff" stroke-width="0.9"/></svg><span class="t" style="left:14.80px;top:79.80px;font-size:4.8px;color:#6a6c70;font-weight:normal;width:7.40px;text-align:center;">13</span><div style="left:22.40px;top:76.20px;width:94.60px;height:17.00px;background:#2b2e32;"></div><div style="left:25.20px;top:78.20px;width:8.00px;height:5.80px;background:#3d4044;border:0.5px solid #505357;border-radius:0.6px;"></div><div style="left:34.60px;top:78.20px;width:8.00px;height:5.80px;background:#3d4044;border:0.5px solid #505357;border-radius:0.6px;"></div><div style="left:27.60px;top:80.00px;width:3.20px;height:2.40px;background:#121314;"></div><div style="left:37.00px;top:80.00px;width:3.20px;height:2.40px;background:#121314;"></div><span class="t" style="left:45.40px;top:78.80px;font-size:5.8px;color:#f4f4f4;font-weight:bold;">찬미라 코러스1</span><div style="left:25.20px;top:86.20px;width:6.60px;height:6.00px;background:#2f3236;border:0.5px solid #3a3d41;"></div><div style="left:44.60px;top:86.00px;width:20.40px;height:6.60px;background:#3d4044;border:0.5px solid #505357;border-radius:0.8px;"></div><div style="left:48.20px;top:87.80px;width:3.00px;height:3.00px;background:#121314;border-radius:50%;"></div><svg style="left:56.60px;top:87.40px" width="5" height="4" viewBox="0 0 5 4"><path d="M0.4 2 L3.4 0.2 L3.4 3.8 Z" fill="#121314"/></svg><div style="left:66.20px;top:86.00px;width:18.40px;height:6.60px;background:#3d4044;border:0.5px solid #505357;border-radius:0.8px;"></div><svg style="left:68.20px;top:87.20px" width="6" height="4.4" viewBox="0 0 6 4.4"><g fill="none" stroke="#121314" stroke-width="0.9"><path d="M3.9 1.2 A1.6 1.6 0 1 0 4.1 3"/><path d="M2.2 2.2 L4.2 2.2"/></g></svg><div style="left:78.20px;top:88.10px;width:2.60px;height:2.60px;background:#1c1e20;border-radius:50%;"></div><div style="left:87.00px;top:86.00px;width:18.60px;height:6.60px;background:#3d4044;border:0.5px solid #505357;border-radius:0.8px;"></div><span class="t" style="left:89.40px;top:87.80px;font-size:4.4px;color:#121314;font-weight:bold;">R</span><div style="left:98.40px;top:87.80px;width:3.40px;height:3.00px;background:#121314;"></div><div style="left:0.00px;top:93.00px;width:117.00px;height:0.80px;background:#101112;"></div><div style="left:117.80px;top:82.60px;width:2.80px;height:10.20px;background:#1fc7b4;"></div><div style="left:5.80px;top:93.80px;width:16.60px;height:17.10px;background:#9c9ea1;"></div><svg style="left:6.00px;top:94.40px" width="8" height="7" viewBox="0 0 8 7"><path d="M0.4 3.6 L2.2 3.6 L2.8 1.8 L3.6 5.6 L4.2 0.8 L4.9 6.2 L5.5 2.6 L6 3.6 L7.6 3.6" fill="none" stroke="#fff" stroke-width="0.9"/></svg><span class="t" style="left:14.80px;top:97.80px;font-size:4.8px;color:#6a6c70;font-weight:normal;width:7.40px;text-align:center;">14</span><div style="left:22.40px;top:93.80px;width:94.60px;height:17.00px;background:#2b2e32;"></div><div style="left:25.20px;top:95.80px;width:8.00px;height:5.80px;background:#3d4044;border:0.5px solid #505357;border-radius:0.6px;"></div><div style="left:34.60px;top:95.80px;width:8.00px;height:5.80px;background:#3d4044;border:0.5px solid #505357;border-radius:0.6px;"></div><div style="left:27.60px;top:97.60px;width:3.20px;height:2.40px;background:#121314;"></div><div style="left:37.00px;top:97.60px;width:3.20px;height:2.40px;background:#121314;"></div><span class="t" style="left:45.40px;top:96.80px;font-size:5.8px;color:#f4f4f4;font-weight:bold;">가린 코러스1-01</span><div style="left:25.20px;top:103.80px;width:6.60px;height:6.00px;background:#2f3236;border:0.5px solid #3a3d41;"></div><div style="left:44.60px;top:103.60px;width:20.40px;height:6.60px;background:#3d4044;border:0.5px solid #505357;border-radius:0.8px;"></div><div style="left:48.20px;top:105.40px;width:3.00px;height:3.00px;background:#121314;border-radius:50%;"></div><svg style="left:56.60px;top:105.00px" width="5" height="4" viewBox="0 0 5 4"><path d="M0.4 2 L3.4 0.2 L3.4 3.8 Z" fill="#121314"/></svg><div style="left:66.20px;top:103.60px;width:18.40px;height:6.60px;background:#3d4044;border:0.5px solid #505357;border-radius:0.8px;"></div><svg style="left:68.20px;top:104.80px" width="6" height="4.4" viewBox="0 0 6 4.4"><g fill="none" stroke="#121314" stroke-width="0.9"><path d="M3.9 1.2 A1.6 1.6 0 1 0 4.1 3"/><path d="M2.2 2.2 L4.2 2.2"/></g></svg><div style="left:78.20px;top:105.70px;width:2.60px;height:2.60px;background:#1c1e20;border-radius:50%;"></div><div style="left:87.00px;top:103.60px;width:18.60px;height:6.60px;background:#3d4044;border:0.5px solid #505357;border-radius:0.8px;"></div><span class="t" style="left:89.40px;top:105.80px;font-size:4.4px;color:#121314;font-weight:bold;">R</span><div style="left:98.40px;top:105.40px;width:3.40px;height:3.00px;background:#121314;"></div><div style="left:0.00px;top:110.60px;width:117.00px;height:0.80px;background:#101112;"></div><div style="left:117.80px;top:100.20px;width:2.80px;height:10.20px;background:#1fc7b4;"></div></div>
<div style="left:88.40px;top:229.80px;width:623.20px;height:7.40px;background:#1f2225;border-radius:0 0 2px 2px;"></div>
<span class="t" style="left:91.00px;top:229.60px;font-size:5px;color:#aaa;font-weight:normal;">-</span>
<span class="t" style="left:195.40px;top:230.80px;font-size:3.6px;color:#b8b8b8;font-weight:normal;">&#9660;</span>
<svg style="left:203.4px;top:230.2px" width="6" height="6" viewBox="0 0 6 6"><g fill="none" stroke="#cfcfcf" stroke-width="0.8"><circle cx="3" cy="3" r="1.4"/><path d="M3 0.4 L3 1.4 M3 4.6 L3 5.6 M0.4 3 L1.4 3 M4.6 3 L5.6 3 M1.2 1.2 L1.9 1.9 M4.1 4.1 L4.8 4.8 M4.8 1.2 L4.1 1.9 M1.9 4.1 L1.2 4.8"/></g></svg>
<div style="left:211.20px;top:109.40px;width:1.40px;height:127.00px;background:#3a3d41;"></div>
<div style="left:212.60px;top:109.40px;width:491.00px;height:120.40px;background:#2a2d30;"></div>
<div style="left:212.60px;top:121.00px;width:221.60px;height:108.80px;background:#2c343f;"></div>
<div style="left:212.60px;top:109.40px;width:491.00px;height:11.60px;background:#24272a;"></div>
<div style="left:217.40px;top:111.00px;width:216.80px;height:10.00px;background:#9d9fa2;"></div>
<div style="left:217.00px;top:121.00px;width:0.80px;height:108.80px;background:#5d6672;"></div><div style="left:217.00px;top:111.00px;width:0.80px;height:10.00px;background:#606367;"></div><div style="left:221.49px;top:121.00px;width:0.80px;height:108.80px;background:#303844;"></div><div style="left:221.64px;top:111.00px;width:0.50px;height:1.50px;background:#7e8084;"></div><div style="left:225.99px;top:121.00px;width:0.80px;height:108.80px;background:#343d49;"></div><div style="left:226.09px;top:111.00px;width:0.60px;height:2.40px;background:#7e8084;"></div><div style="left:230.48px;top:121.00px;width:0.80px;height:108.80px;background:#303844;"></div><div style="left:230.63px;top:111.00px;width:0.50px;height:1.50px;background:#7e8084;"></div><div style="left:234.98px;top:121.00px;width:0.80px;height:108.80px;background:#343d49;"></div><div style="left:235.08px;top:111.00px;width:0.60px;height:2.40px;background:#7e8084;"></div><div style="left:239.47px;top:121.00px;width:0.80px;height:108.80px;background:#303844;"></div><div style="left:239.62px;top:111.00px;width:0.50px;height:1.50px;background:#7e8084;"></div><div style="left:243.97px;top:121.00px;width:0.80px;height:108.80px;background:#3c4551;"></div><div style="left:244.06px;top:111.00px;width:0.60px;height:3.40px;background:#7e8084;"></div><div style="left:248.46px;top:121.00px;width:0.80px;height:108.80px;background:#303844;"></div><div style="left:248.61px;top:111.00px;width:0.50px;height:1.50px;background:#7e8084;"></div><div style="left:252.95px;top:121.00px;width:0.80px;height:108.80px;background:#343d49;"></div><div style="left:253.05px;top:111.00px;width:0.60px;height:2.40px;background:#7e8084;"></div><div style="left:257.45px;top:121.00px;width:0.80px;height:108.80px;background:#303844;"></div><div style="left:257.60px;top:111.00px;width:0.50px;height:1.50px;background:#7e8084;"></div><div style="left:261.94px;top:121.00px;width:0.80px;height:108.80px;background:#343d49;"></div><div style="left:262.04px;top:111.00px;width:0.60px;height:2.40px;background:#7e8084;"></div><div style="left:266.44px;top:121.00px;width:0.80px;height:108.80px;background:#303844;"></div><div style="left:266.59px;top:111.00px;width:0.50px;height:1.50px;background:#7e8084;"></div><div style="left:270.93px;top:121.00px;width:0.80px;height:108.80px;background:#5d6672;"></div><div style="left:270.93px;top:111.00px;width:0.80px;height:10.00px;background:#606367;"></div><div style="left:275.42px;top:121.00px;width:0.80px;height:108.80px;background:#303844;"></div><div style="left:275.57px;top:111.00px;width:0.50px;height:1.50px;background:#7e8084;"></div><div style="left:279.92px;top:121.00px;width:0.80px;height:108.80px;background:#343d49;"></div><div style="left:280.02px;top:111.00px;width:0.60px;height:2.40px;background:#7e8084;"></div><div style="left:284.41px;top:121.00px;width:0.80px;height:108.80px;background:#303844;"></div><div style="left:284.56px;top:111.00px;width:0.50px;height:1.50px;background:#7e8084;"></div><div style="left:288.91px;top:121.00px;width:0.80px;height:108.80px;background:#343d49;"></div><div style="left:289.01px;top:111.00px;width:0.60px;height:2.40px;background:#7e8084;"></div><div style="left:293.40px;top:121.00px;width:0.80px;height:108.80px;background:#303844;"></div><div style="left:293.55px;top:111.00px;width:0.50px;height:1.50px;background:#7e8084;"></div><div style="left:297.90px;top:121.00px;width:0.80px;height:108.80px;background:#3c4551;"></div><div style="left:298.00px;top:111.00px;width:0.60px;height:3.40px;background:#7e8084;"></div><div style="left:302.39px;top:121.00px;width:0.80px;height:108.80px;background:#303844;"></div><div style="left:302.54px;top:111.00px;width:0.50px;height:1.50px;background:#7e8084;"></div><div style="left:306.88px;top:121.00px;width:0.80px;height:108.80px;background:#343d49;"></div><div style="left:306.98px;top:111.00px;width:0.60px;height:2.40px;background:#7e8084;"></div><div style="left:311.38px;top:121.00px;width:0.80px;height:108.80px;background:#303844;"></div><div style="left:311.53px;top:111.00px;width:0.50px;height:1.50px;background:#7e8084;"></div><div style="left:315.87px;top:121.00px;width:0.80px;height:108.80px;background:#343d49;"></div><div style="left:315.97px;top:111.00px;width:0.60px;height:2.40px;background:#7e8084;"></div><div style="left:320.37px;top:121.00px;width:0.80px;height:108.80px;background:#303844;"></div><div style="left:320.52px;top:111.00px;width:0.50px;height:1.50px;background:#7e8084;"></div><div style="left:324.86px;top:121.00px;width:0.80px;height:108.80px;background:#5d6672;"></div><div style="left:324.86px;top:111.00px;width:0.80px;height:10.00px;background:#606367;"></div><div style="left:329.35px;top:121.00px;width:0.80px;height:108.80px;background:#303844;"></div><div style="left:329.50px;top:111.00px;width:0.50px;height:1.50px;background:#7e8084;"></div><div style="left:333.85px;top:121.00px;width:0.80px;height:108.80px;background:#343d49;"></div><div style="left:333.95px;top:111.00px;width:0.60px;height:2.40px;background:#7e8084;"></div><div style="left:338.34px;top:121.00px;width:0.80px;height:108.80px;background:#303844;"></div><div style="left:338.49px;top:111.00px;width:0.50px;height:1.50px;background:#7e8084;"></div><div style="left:342.84px;top:121.00px;width:0.80px;height:108.80px;background:#343d49;"></div><div style="left:342.94px;top:111.00px;width:0.60px;height:2.40px;background:#7e8084;"></div><div style="left:347.33px;top:121.00px;width:0.80px;height:108.80px;background:#303844;"></div><div style="left:347.48px;top:111.00px;width:0.50px;height:1.50px;background:#7e8084;"></div><div style="left:351.83px;top:121.00px;width:0.80px;height:108.80px;background:#3c4551;"></div><div style="left:351.93px;top:111.00px;width:0.60px;height:3.40px;background:#7e8084;"></div><div style="left:356.32px;top:121.00px;width:0.80px;height:108.80px;background:#303844;"></div><div style="left:356.47px;top:111.00px;width:0.50px;height:1.50px;background:#7e8084;"></div><div style="left:360.81px;top:121.00px;width:0.80px;height:108.80px;background:#343d49;"></div><div style="left:360.91px;top:111.00px;width:0.60px;height:2.40px;background:#7e8084;"></div><div style="left:365.31px;top:121.00px;width:0.80px;height:108.80px;background:#303844;"></div><div style="left:365.46px;top:111.00px;width:0.50px;height:1.50px;background:#7e8084;"></div><div style="left:369.80px;top:121.00px;width:0.80px;height:108.80px;background:#343d49;"></div><div style="left:369.90px;top:111.00px;width:0.60px;height:2.40px;background:#7e8084;"></div><div style="left:374.30px;top:121.00px;width:0.80px;height:108.80px;background:#303844;"></div><div style="left:374.45px;top:111.00px;width:0.50px;height:1.50px;background:#7e8084;"></div><div style="left:378.79px;top:121.00px;width:0.80px;height:108.80px;background:#5d6672;"></div><div style="left:378.79px;top:111.00px;width:0.80px;height:10.00px;background:#606367;"></div><div style="left:383.28px;top:121.00px;width:0.80px;height:108.80px;background:#303844;"></div><div style="left:383.43px;top:111.00px;width:0.50px;height:1.50px;background:#7e8084;"></div><div style="left:387.78px;top:121.00px;width:0.80px;height:108.80px;background:#343d49;"></div><div style="left:387.88px;top:111.00px;width:0.60px;height:2.40px;background:#7e8084;"></div><div style="left:392.27px;top:121.00px;width:0.80px;height:108.80px;background:#303844;"></div><div style="left:392.42px;top:111.00px;width:0.50px;height:1.50px;background:#7e8084;"></div><div style="left:396.77px;top:121.00px;width:0.80px;height:108.80px;background:#343d49;"></div><div style="left:396.87px;top:111.00px;width:0.60px;height:2.40px;background:#7e8084;"></div><div style="left:401.26px;top:121.00px;width:0.80px;height:108.80px;background:#303844;"></div><div style="left:401.41px;top:111.00px;width:0.50px;height:1.50px;background:#7e8084;"></div><div style="left:405.75px;top:121.00px;width:0.80px;height:108.80px;background:#3c4551;"></div><div style="left:405.85px;top:111.00px;width:0.60px;height:3.40px;background:#7e8084;"></div><div style="left:410.25px;top:121.00px;width:0.80px;height:108.80px;background:#303844;"></div><div style="left:410.40px;top:111.00px;width:0.50px;height:1.50px;background:#7e8084;"></div><div style="left:414.74px;top:121.00px;width:0.80px;height:108.80px;background:#343d49;"></div><div style="left:414.84px;top:111.00px;width:0.60px;height:2.40px;background:#7e8084;"></div><div style="left:419.24px;top:121.00px;width:0.80px;height:108.80px;background:#303844;"></div><div style="left:419.39px;top:111.00px;width:0.50px;height:1.50px;background:#7e8084;"></div><div style="left:423.73px;top:121.00px;width:0.80px;height:108.80px;background:#343d49;"></div><div style="left:423.83px;top:111.00px;width:0.60px;height:2.40px;background:#7e8084;"></div><div style="left:428.23px;top:121.00px;width:0.80px;height:108.80px;background:#303844;"></div><div style="left:428.38px;top:111.00px;width:0.50px;height:1.50px;background:#7e8084;"></div><div style="left:432.72px;top:121.00px;width:0.80px;height:108.80px;background:#5d6672;"></div><div style="left:432.72px;top:111.00px;width:0.80px;height:10.00px;background:#606367;"></div><div style="left:437.21px;top:121.00px;width:0.80px;height:108.80px;background:#303336;"></div><div style="left:437.36px;top:111.00px;width:0.50px;height:1.50px;background:#55585c;"></div><div style="left:441.71px;top:121.00px;width:0.80px;height:108.80px;background:#36393c;"></div><div style="left:441.81px;top:111.00px;width:0.60px;height:2.40px;background:#55585c;"></div><div style="left:446.20px;top:121.00px;width:0.80px;height:108.80px;background:#303336;"></div><div style="left:446.35px;top:111.00px;width:0.50px;height:1.50px;background:#55585c;"></div><div style="left:450.70px;top:121.00px;width:0.80px;height:108.80px;background:#36393c;"></div><div style="left:450.80px;top:111.00px;width:0.60px;height:2.40px;background:#55585c;"></div><div style="left:455.19px;top:121.00px;width:0.80px;height:108.80px;background:#303336;"></div><div style="left:455.34px;top:111.00px;width:0.50px;height:1.50px;background:#55585c;"></div><div style="left:459.69px;top:121.00px;width:0.80px;height:108.80px;background:#484b4e;"></div><div style="left:459.79px;top:111.00px;width:0.60px;height:3.40px;background:#55585c;"></div><div style="left:464.18px;top:121.00px;width:0.80px;height:108.80px;background:#303336;"></div><div style="left:464.33px;top:111.00px;width:0.50px;height:1.50px;background:#55585c;"></div><div style="left:468.67px;top:121.00px;width:0.80px;height:108.80px;background:#36393c;"></div><div style="left:468.77px;top:111.00px;width:0.60px;height:2.40px;background:#55585c;"></div><div style="left:473.17px;top:121.00px;width:0.80px;height:108.80px;background:#303336;"></div><div style="left:473.32px;top:111.00px;width:0.50px;height:1.50px;background:#55585c;"></div><div style="left:477.66px;top:121.00px;width:0.80px;height:108.80px;background:#36393c;"></div><div style="left:477.76px;top:111.00px;width:0.60px;height:2.40px;background:#55585c;"></div><div style="left:482.16px;top:121.00px;width:0.80px;height:108.80px;background:#303336;"></div><div style="left:482.31px;top:111.00px;width:0.50px;height:1.50px;background:#55585c;"></div><div style="left:486.65px;top:121.00px;width:0.80px;height:108.80px;background:#75787b;"></div><div style="left:486.65px;top:111.00px;width:0.80px;height:10.00px;background:#b0b3b6;"></div><div style="left:491.14px;top:121.00px;width:0.80px;height:108.80px;background:#303336;"></div><div style="left:491.29px;top:111.00px;width:0.50px;height:1.50px;background:#55585c;"></div><div style="left:495.64px;top:121.00px;width:0.80px;height:108.80px;background:#36393c;"></div><div style="left:495.74px;top:111.00px;width:0.60px;height:2.40px;background:#55585c;"></div><div style="left:500.13px;top:121.00px;width:0.80px;height:108.80px;background:#303336;"></div><div style="left:500.28px;top:111.00px;width:0.50px;height:1.50px;background:#55585c;"></div><div style="left:504.63px;top:121.00px;width:0.80px;height:108.80px;background:#36393c;"></div><div style="left:504.73px;top:111.00px;width:0.60px;height:2.40px;background:#55585c;"></div><div style="left:509.12px;top:121.00px;width:0.80px;height:108.80px;background:#303336;"></div><div style="left:509.27px;top:111.00px;width:0.50px;height:1.50px;background:#55585c;"></div><div style="left:513.62px;top:121.00px;width:0.80px;height:108.80px;background:#484b4e;"></div><div style="left:513.72px;top:111.00px;width:0.60px;height:3.40px;background:#55585c;"></div><div style="left:518.11px;top:121.00px;width:0.80px;height:108.80px;background:#303336;"></div><div style="left:518.26px;top:111.00px;width:0.50px;height:1.50px;background:#55585c;"></div><div style="left:522.60px;top:121.00px;width:0.80px;height:108.80px;background:#36393c;"></div><div style="left:522.70px;top:111.00px;width:0.60px;height:2.40px;background:#55585c;"></div><div style="left:527.10px;top:121.00px;width:0.80px;height:108.80px;background:#303336;"></div><div style="left:527.25px;top:111.00px;width:0.50px;height:1.50px;background:#55585c;"></div><div style="left:531.59px;top:121.00px;width:0.80px;height:108.80px;background:#36393c;"></div><div style="left:531.69px;top:111.00px;width:0.60px;height:2.40px;background:#55585c;"></div><div style="left:536.09px;top:121.00px;width:0.80px;height:108.80px;background:#303336;"></div><div style="left:536.24px;top:111.00px;width:0.50px;height:1.50px;background:#55585c;"></div><div style="left:540.58px;top:121.00px;width:0.80px;height:108.80px;background:#75787b;"></div><div style="left:540.58px;top:111.00px;width:0.80px;height:10.00px;background:#b0b3b6;"></div><div style="left:545.07px;top:121.00px;width:0.80px;height:108.80px;background:#303336;"></div><div style="left:545.22px;top:111.00px;width:0.50px;height:1.50px;background:#55585c;"></div><div style="left:549.57px;top:121.00px;width:0.80px;height:108.80px;background:#36393c;"></div><div style="left:549.67px;top:111.00px;width:0.60px;height:2.40px;background:#55585c;"></div><div style="left:554.06px;top:121.00px;width:0.80px;height:108.80px;background:#303336;"></div><div style="left:554.21px;top:111.00px;width:0.50px;height:1.50px;background:#55585c;"></div><div style="left:558.56px;top:121.00px;width:0.80px;height:108.80px;background:#36393c;"></div><div style="left:558.66px;top:111.00px;width:0.60px;height:2.40px;background:#55585c;"></div><div style="left:563.05px;top:121.00px;width:0.80px;height:108.80px;background:#303336;"></div><div style="left:563.20px;top:111.00px;width:0.50px;height:1.50px;background:#55585c;"></div><div style="left:567.55px;top:121.00px;width:0.80px;height:108.80px;background:#484b4e;"></div><div style="left:567.65px;top:111.00px;width:0.60px;height:3.40px;background:#55585c;"></div><div style="left:572.04px;top:121.00px;width:0.80px;height:108.80px;background:#303336;"></div><div style="left:572.19px;top:111.00px;width:0.50px;height:1.50px;background:#55585c;"></div><div style="left:576.53px;top:121.00px;width:0.80px;height:108.80px;background:#36393c;"></div><div style="left:576.63px;top:111.00px;width:0.60px;height:2.40px;background:#55585c;"></div><div style="left:581.03px;top:121.00px;width:0.80px;height:108.80px;background:#303336;"></div><div style="left:581.18px;top:111.00px;width:0.50px;height:1.50px;background:#55585c;"></div><div style="left:585.52px;top:121.00px;width:0.80px;height:108.80px;background:#36393c;"></div><div style="left:585.62px;top:111.00px;width:0.60px;height:2.40px;background:#55585c;"></div><div style="left:590.02px;top:121.00px;width:0.80px;height:108.80px;background:#303336;"></div><div style="left:590.17px;top:111.00px;width:0.50px;height:1.50px;background:#55585c;"></div><div style="left:594.51px;top:121.00px;width:0.80px;height:108.80px;background:#75787b;"></div><div style="left:594.51px;top:111.00px;width:0.80px;height:10.00px;background:#b0b3b6;"></div><div style="left:599.00px;top:121.00px;width:0.80px;height:108.80px;background:#303336;"></div><div style="left:599.15px;top:111.00px;width:0.50px;height:1.50px;background:#55585c;"></div><div style="left:603.50px;top:121.00px;width:0.80px;height:108.80px;background:#36393c;"></div><div style="left:603.60px;top:111.00px;width:0.60px;height:2.40px;background:#55585c;"></div><div style="left:607.99px;top:121.00px;width:0.80px;height:108.80px;background:#303336;"></div><div style="left:608.14px;top:111.00px;width:0.50px;height:1.50px;background:#55585c;"></div><div style="left:612.49px;top:121.00px;width:0.80px;height:108.80px;background:#36393c;"></div><div style="left:612.59px;top:111.00px;width:0.60px;height:2.40px;background:#55585c;"></div><div style="left:616.98px;top:121.00px;width:0.80px;height:108.80px;background:#303336;"></div><div style="left:617.13px;top:111.00px;width:0.50px;height:1.50px;background:#55585c;"></div><div style="left:621.48px;top:121.00px;width:0.80px;height:108.80px;background:#484b4e;"></div><div style="left:621.58px;top:111.00px;width:0.60px;height:3.40px;background:#55585c;"></div><div style="left:625.97px;top:121.00px;width:0.80px;height:108.80px;background:#303336;"></div><div style="left:626.12px;top:111.00px;width:0.50px;height:1.50px;background:#55585c;"></div><div style="left:630.46px;top:121.00px;width:0.80px;height:108.80px;background:#36393c;"></div><div style="left:630.56px;top:111.00px;width:0.60px;height:2.40px;background:#55585c;"></div><div style="left:634.96px;top:121.00px;width:0.80px;height:108.80px;background:#303336;"></div><div style="left:635.11px;top:111.00px;width:0.50px;height:1.50px;background:#55585c;"></div><div style="left:639.45px;top:121.00px;width:0.80px;height:108.80px;background:#36393c;"></div><div style="left:639.55px;top:111.00px;width:0.60px;height:2.40px;background:#55585c;"></div><div style="left:643.95px;top:121.00px;width:0.80px;height:108.80px;background:#303336;"></div><div style="left:644.10px;top:111.00px;width:0.50px;height:1.50px;background:#55585c;"></div><div style="left:648.44px;top:121.00px;width:0.80px;height:108.80px;background:#75787b;"></div><div style="left:648.44px;top:111.00px;width:0.80px;height:10.00px;background:#b0b3b6;"></div><div style="left:652.93px;top:121.00px;width:0.80px;height:108.80px;background:#303336;"></div><div style="left:653.08px;top:111.00px;width:0.50px;height:1.50px;background:#55585c;"></div><div style="left:657.43px;top:121.00px;width:0.80px;height:108.80px;background:#36393c;"></div><div style="left:657.53px;top:111.00px;width:0.60px;height:2.40px;background:#55585c;"></div><div style="left:661.92px;top:121.00px;width:0.80px;height:108.80px;background:#303336;"></div><div style="left:662.07px;top:111.00px;width:0.50px;height:1.50px;background:#55585c;"></div><div style="left:666.42px;top:121.00px;width:0.80px;height:108.80px;background:#36393c;"></div><div style="left:666.52px;top:111.00px;width:0.60px;height:2.40px;background:#55585c;"></div><div style="left:670.91px;top:121.00px;width:0.80px;height:108.80px;background:#303336;"></div><div style="left:671.06px;top:111.00px;width:0.50px;height:1.50px;background:#55585c;"></div><div style="left:675.40px;top:121.00px;width:0.80px;height:108.80px;background:#484b4e;"></div><div style="left:675.50px;top:111.00px;width:0.60px;height:3.40px;background:#55585c;"></div><div style="left:679.90px;top:121.00px;width:0.80px;height:108.80px;background:#303336;"></div><div style="left:680.05px;top:111.00px;width:0.50px;height:1.50px;background:#55585c;"></div><div style="left:684.39px;top:121.00px;width:0.80px;height:108.80px;background:#36393c;"></div><div style="left:684.49px;top:111.00px;width:0.60px;height:2.40px;background:#55585c;"></div><div style="left:688.89px;top:121.00px;width:0.80px;height:108.80px;background:#303336;"></div><div style="left:689.04px;top:111.00px;width:0.50px;height:1.50px;background:#55585c;"></div><div style="left:693.38px;top:121.00px;width:0.80px;height:108.80px;background:#36393c;"></div><div style="left:693.48px;top:111.00px;width:0.60px;height:2.40px;background:#55585c;"></div><div style="left:697.88px;top:121.00px;width:0.80px;height:108.80px;background:#303336;"></div><div style="left:698.03px;top:111.00px;width:0.50px;height:1.50px;background:#55585c;"></div>
<span class="t" style="left:219.10px;top:117.00px;font-size:4.9px;color:#3a3d41;font-weight:normal;transform:scaleX(0.9);transform-origin:0 50%;">0.00.00.00</span>
<span class="t" style="left:273.03px;top:117.00px;font-size:4.9px;color:#3a3d41;font-weight:normal;transform:scaleX(0.9);transform-origin:0 50%;">0.01.00.00</span>
<span class="t" style="left:326.96px;top:117.00px;font-size:4.9px;color:#3a3d41;font-weight:normal;transform:scaleX(0.9);transform-origin:0 50%;">0.02.00.00</span>
<span class="t" style="left:380.89px;top:117.00px;font-size:4.9px;color:#3a3d41;font-weight:normal;transform:scaleX(0.9);transform-origin:0 50%;">0.03.00.00</span>
<span class="t" style="left:434.82px;top:117.00px;font-size:4.9px;color:#d0d2d4;font-weight:normal;transform:scaleX(0.9);transform-origin:0 50%;">0.04.00.00</span>
<span class="t" style="left:488.75px;top:117.00px;font-size:4.9px;color:#d0d2d4;font-weight:normal;transform:scaleX(0.9);transform-origin:0 50%;">0.05.00.00</span>
<span class="t" style="left:542.68px;top:117.00px;font-size:4.9px;color:#d0d2d4;font-weight:normal;transform:scaleX(0.9);transform-origin:0 50%;">0.06.00.00</span>
<span class="t" style="left:596.61px;top:117.00px;font-size:4.9px;color:#d0d2d4;font-weight:normal;transform:scaleX(0.9);transform-origin:0 50%;">0.07.00.00</span>
<span class="t" style="left:650.54px;top:117.00px;font-size:4.9px;color:#d0d2d4;font-weight:normal;transform:scaleX(0.9);transform-origin:0 50%;">0.08.00.00</span>
<svg style="left:217.4px;top:111px" width="4" height="4" viewBox="0 0 4 4"><path d="M0 0 L3.4 0 L0 3.4Z" fill="#fff"/></svg>
<svg style="left:430.6px;top:111px" width="4" height="4" viewBox="0 0 4 4"><path d="M0.4 0 L3.8 0 L3.8 3.4Z" fill="#fff"/></svg>
<div style="left:212.60px;top:126.60px;width:221.60px;height:0.70px;background:#414954;"></div>
<div style="left:434.20px;top:126.60px;width:269.40px;height:0.70px;background:#3c3f42;"></div>
<div style="left:212.60px;top:144.20px;width:221.60px;height:0.70px;background:#414954;"></div>
<div style="left:434.20px;top:144.20px;width:269.40px;height:0.70px;background:#3c3f42;"></div>
<div style="left:212.60px;top:161.80px;width:221.60px;height:0.70px;background:#414954;"></div>
<div style="left:434.20px;top:161.80px;width:269.40px;height:0.70px;background:#3c3f42;"></div>
<div style="left:212.60px;top:179.40px;width:221.60px;height:0.70px;background:#414954;"></div>
<div style="left:434.20px;top:179.40px;width:269.40px;height:0.70px;background:#3c3f42;"></div>
<div style="left:212.60px;top:197.00px;width:221.60px;height:0.70px;background:#414954;"></div>
<div style="left:434.20px;top:197.00px;width:269.40px;height:0.70px;background:#3c3f42;"></div>
<div style="left:212.60px;top:214.60px;width:221.60px;height:0.70px;background:#414954;"></div>
<div style="left:434.20px;top:214.60px;width:269.40px;height:0.70px;background:#3c3f42;"></div>
<div style="left:391.00px;top:121.00px;width:6.80px;height:5.20px;background:#a9abae;border-radius:0 0 0.8px 0.8px;"></div>
<div style="left:392.00px;top:122.20px;width:4.80px;height:1.60px;background:#3e4044;"></div>
<div style="left:391.00px;top:127.40px;width:6.80px;height:16.40px;background:#a2a4a7;border-radius:0.8px;border:0.4px solid #bfc1c3;"></div>
<svg style="left:391.00px;top:127.40px" width="6.80" height="16.40" viewBox="0 0 6.80 16.40"><path d="M0.6 3.6 L1.4 2.7 L2.2 3.3 L3.0 3.2 L3.8 4.2 L4.6 2.8 L5.4 4.4 L6.2 3.6 L6.2 6.9 L5.4 6.7 L4.6 5.8 L3.8 6.2 L3.0 6.1 L2.2 5.8 L1.4 7.0 L0.6 6.3Z" fill="#3e4044"/><path d="M0.6 10.6 L1.4 10.7 L2.2 10.2 L3.0 10.2 L3.8 9.8 L4.6 10.5 L5.4 10.3 L6.2 11.3 L6.2 13.9 L5.4 14.0 L4.6 13.3 L3.8 13.8 L3.0 13.6 L2.2 13.2 L1.4 13.6 L0.6 13.0Z" fill="#3e4044"/></svg>
<div style="left:391.00px;top:145.00px;width:6.80px;height:16.40px;background:#a2a4a7;border-radius:0.8px;border:0.4px solid #bfc1c3;"></div>
<svg style="left:391.00px;top:145.00px" width="6.80" height="16.40" viewBox="0 0 6.80 16.40"><path d="M0.6 2.8 L1.4 3.7 L2.2 3.4 L3.0 3.8 L3.8 3.1 L4.6 3.3 L5.4 4.4 L6.2 3.4 L6.2 6.9 L5.4 7.0 L4.6 6.0 L3.8 5.9 L3.0 6.1 L2.2 6.0 L1.4 5.5 L0.6 6.6Z" fill="#3e4044"/><path d="M0.6 10.3 L1.4 9.6 L2.2 9.8 L3.0 11.0 L3.8 10.6 L4.6 10.3 L5.4 10.6 L6.2 10.0 L6.2 13.9 L5.4 13.4 L4.6 13.6 L3.8 13.1 L3.0 13.9 L2.2 13.2 L1.4 12.3 L0.6 13.9Z" fill="#3e4044"/></svg>
<div style="left:403.00px;top:121.00px;width:6.80px;height:5.20px;background:#a9abae;border-radius:0 0 0.8px 0.8px;"></div>
<div style="left:404.00px;top:122.20px;width:4.80px;height:1.60px;background:#3e4044;"></div>
<div style="left:403.00px;top:127.40px;width:6.80px;height:16.40px;background:#a2a4a7;border-radius:0.8px;border:0.4px solid #bfc1c3;"></div>
<svg style="left:403.00px;top:127.40px" width="6.80" height="16.40" viewBox="0 0 6.80 16.40"><path d="M0.6 4.0 L1.4 3.8 L2.2 3.0 L3.0 2.8 L3.8 2.6 L4.6 3.1 L5.4 3.6 L6.2 2.6 L6.2 7.0 L5.4 6.9 L4.6 6.7 L3.8 7.0 L3.0 6.1 L2.2 6.7 L1.4 7.1 L0.6 6.6Z" fill="#3e4044"/><path d="M0.6 9.7 L1.4 9.7 L2.2 11.1 L3.0 11.1 L3.8 10.0 L4.6 9.6 L5.4 10.3 L6.2 9.9 L6.2 13.6 L5.4 13.1 L4.6 13.8 L3.8 13.7 L3.0 14.0 L2.2 13.6 L1.4 12.3 L0.6 13.5Z" fill="#3e4044"/></svg>
<div style="left:403.00px;top:145.00px;width:6.80px;height:16.40px;background:#a2a4a7;border-radius:0.8px;border:0.4px solid #bfc1c3;"></div>
<svg style="left:403.00px;top:145.00px" width="6.80" height="16.40" viewBox="0 0 6.80 16.40"><path d="M0.6 4.2 L1.4 2.7 L2.2 4.4 L3.0 3.9 L3.8 2.6 L4.6 3.2 L5.4 3.6 L6.2 4.1 L6.2 5.7 L5.4 5.5 L4.6 7.0 L3.8 6.9 L3.0 6.6 L2.2 5.6 L1.4 5.7 L0.6 6.4Z" fill="#3e4044"/><path d="M0.6 10.5 L1.4 10.0 L2.2 9.6 L3.0 9.8 L3.8 10.6 L4.6 11.3 L5.4 9.7 L6.2 11.2 L6.2 12.8 L5.4 13.4 L4.6 13.0 L3.8 12.4 L3.0 14.0 L2.2 12.8 L1.4 13.8 L0.6 13.2Z" fill="#3e4044"/></svg>
<div style="left:313.80px;top:162.80px;width:4.70px;height:16.20px;background:#9a9c9f;border-radius:0.8px;border:0.5px solid #bcbec0;"></div>
<div style="left:313.80px;top:180.20px;width:4.70px;height:16.60px;background:#a2a4a7;border-radius:0.8px;border:0.4px solid #bfc1c3;"></div>
<svg style="left:313.80px;top:180.20px" width="4.70" height="16.60" viewBox="0 0 4.70 16.60"><path d="M0.6 2.8 L1.3 4.3 L2.0 4.1 L2.7 4.3 L3.4 3.3 L4.1 3.2 L4.1 6.1 L3.4 6.9 L2.7 6.0 L2.0 6.4 L1.3 6.6 L0.6 6.1Z" fill="#3e4044"/><path d="M0.6 10.9 L1.3 10.6 L2.0 11.5 L2.7 9.8 L3.4 11.4 L4.1 10.5 L4.1 13.3 L3.4 12.9 L2.7 13.4 L2.0 13.1 L1.3 13.0 L0.6 12.7Z" fill="#3e4044"/></svg>
<div style="left:313.80px;top:197.80px;width:4.70px;height:16.60px;background:#a2a4a7;border-radius:0.8px;border:0.4px solid #bfc1c3;"></div>
<svg style="left:313.80px;top:197.80px" width="4.70" height="16.60" viewBox="0 0 4.70 16.60"><path d="M0.6 3.8 L1.3 4.0 L2.0 4.3 L2.7 3.9 L3.4 3.2 L4.1 3.2 L4.1 6.5 L3.4 6.6 L2.7 7.2 L2.0 5.6 L1.3 6.4 L0.6 7.0Z" fill="#3e4044"/><path d="M0.6 11.4 L1.3 10.6 L2.0 11.3 L2.7 10.2 L3.4 10.7 L4.1 11.4 L4.1 12.5 L3.4 13.8 L2.7 12.7 L2.0 13.4 L1.3 13.6 L0.6 12.5Z" fill="#3e4044"/></svg>
<div style="left:313.80px;top:215.40px;width:4.70px;height:14.40px;background:#a2a4a7;border-radius:0.8px;border:0.4px solid #bfc1c3;"></div>
<svg style="left:313.80px;top:215.40px" width="4.70" height="14.40" viewBox="0 0 4.70 14.40"><path d="M0.6 3.3 L1.3 3.1 L2.0 2.7 L2.7 2.8 L3.4 2.7 L4.1 2.9 L4.1 6.2 L3.4 6.2 L2.7 6.0 L2.0 6.1 L1.3 5.9 L0.6 5.2Z" fill="#3e4044"/><path d="M0.6 9.6 L1.3 9.0 L2.0 9.2 L2.7 9.8 L3.4 9.8 L4.1 9.6 L4.1 12.3 L3.4 12.1 L2.7 11.7 L2.0 11.7 L1.3 11.1 L0.6 12.4Z" fill="#3e4044"/></svg>
<div style="left:331.80px;top:162.80px;width:6.60px;height:16.20px;background:#9a9c9f;border-radius:0.8px;border:0.5px solid #bcbec0;"></div>
<div style="left:331.80px;top:180.20px;width:6.60px;height:16.60px;background:#a2a4a7;border-radius:0.8px;border:0.4px solid #bfc1c3;"></div>
<svg style="left:331.80px;top:180.20px" width="6.60" height="16.60" viewBox="0 0 6.60 16.60"><path d="M0.6 4.4 L1.4 4.4 L2.1 3.5 L2.9 3.4 L3.7 4.1 L4.5 2.9 L5.2 3.7 L6.0 3.9 L6.0 6.6 L5.2 6.2 L4.5 5.9 L3.7 6.9 L2.9 5.5 L2.1 5.9 L1.4 5.8 L0.6 6.5Z" fill="#3e4044"/><path d="M0.6 11.5 L1.4 9.8 L2.1 10.3 L2.9 11.3 L3.7 10.3 L4.5 10.2 L5.2 10.9 L6.0 10.0 L6.0 14.0 L5.2 13.7 L4.5 14.3 L3.7 13.8 L2.9 12.9 L2.1 13.6 L1.4 13.2 L0.6 14.0Z" fill="#3e4044"/></svg>
<div style="left:331.80px;top:197.80px;width:6.60px;height:16.60px;background:#a2a4a7;border-radius:0.8px;border:0.4px solid #bfc1c3;"></div>
<svg style="left:331.80px;top:197.80px" width="6.60" height="16.60" viewBox="0 0 6.60 16.60"><path d="M0.6 2.8 L1.4 3.1 L2.1 3.5 L2.9 2.8 L3.7 2.7 L4.5 3.8 L5.2 3.6 L6.0 4.3 L6.0 6.8 L5.2 7.3 L4.5 6.0 L3.7 5.6 L2.9 7.3 L2.1 6.9 L1.4 6.0 L0.6 6.8Z" fill="#3e4044"/><path d="M0.6 11.3 L1.4 11.5 L2.1 11.0 L2.9 10.7 L3.7 10.8 L4.5 10.7 L5.2 11.4 L6.0 10.0 L6.0 13.3 L5.2 14.3 L4.5 13.5 L3.7 13.6 L2.9 12.7 L2.1 12.9 L1.4 12.9 L0.6 13.1Z" fill="#3e4044"/></svg>
<div style="left:331.80px;top:215.40px;width:6.60px;height:14.40px;background:#a2a4a7;border-radius:0.8px;border:0.4px solid #bfc1c3;"></div>
<svg style="left:331.80px;top:215.40px" width="6.60" height="14.40" viewBox="0 0 6.60 14.40"><path d="M0.6 3.6 L1.4 3.5 L2.1 2.6 L2.9 3.5 L3.7 3.2 L4.5 3.7 L5.2 2.9 L6.0 2.6 L6.0 5.3 L5.2 5.8 L4.5 5.9 L3.7 5.1 L2.9 6.1 L2.1 5.8 L1.4 6.1 L0.6 6.1Z" fill="#3e4044"/><path d="M0.6 8.7 L1.4 9.7 L2.1 9.0 L2.9 9.7 L3.7 8.8 L4.5 8.4 L5.2 9.7 L6.0 8.5 L6.0 12.3 L5.2 11.4 L4.5 12.0 L3.7 11.1 L2.9 11.9 L2.1 10.9 L1.4 12.2 L0.6 11.4Z" fill="#3e4044"/></svg>
<div style="left:343.70px;top:162.80px;width:5.40px;height:16.20px;background:#9a9c9f;border-radius:0.8px;border:0.5px solid #bcbec0;"></div>
<div style="left:343.70px;top:180.20px;width:5.40px;height:16.60px;background:#a2a4a7;border-radius:0.8px;border:0.4px solid #bfc1c3;"></div>
<svg style="left:343.70px;top:180.20px" width="5.40" height="16.60" viewBox="0 0 5.40 16.60"><path d="M0.6 3.4 L1.3 3.2 L2.0 3.5 L2.7 3.1 L3.4 3.5 L4.1 2.9 L4.8 3.0 L4.8 7.1 L4.1 5.9 L3.4 6.1 L2.7 7.0 L2.0 7.2 L1.3 6.0 L0.6 6.0Z" fill="#3e4044"/><path d="M0.6 10.2 L1.3 10.6 L2.0 10.5 L2.7 9.7 L3.4 9.6 L4.1 9.9 L4.8 11.1 L4.8 13.7 L4.1 14.3 L3.4 14.1 L2.7 12.4 L2.0 12.7 L1.3 14.1 L0.6 13.7Z" fill="#3e4044"/></svg>
<div style="left:343.70px;top:197.80px;width:5.40px;height:16.60px;background:#a2a4a7;border-radius:0.8px;border:0.4px solid #bfc1c3;"></div>
<svg style="left:343.70px;top:197.80px" width="5.40" height="16.60" viewBox="0 0 5.40 16.60"><path d="M0.6 2.7 L1.3 3.7 L2.0 3.4 L2.7 3.3 L3.4 4.2 L4.1 2.8 L4.8 2.8 L4.8 6.4 L4.1 7.0 L3.4 6.8 L2.7 6.3 L2.0 5.7 L1.3 5.8 L0.6 7.1Z" fill="#3e4044"/><path d="M0.6 11.2 L1.3 11.5 L2.0 9.9 L2.7 10.9 L3.4 10.1 L4.1 10.8 L4.8 10.2 L4.8 13.2 L4.1 13.6 L3.4 13.2 L2.7 13.8 L2.0 12.9 L1.3 13.9 L0.6 12.7Z" fill="#3e4044"/></svg>
<div style="left:343.70px;top:215.40px;width:5.40px;height:14.40px;background:#a2a4a7;border-radius:0.8px;border:0.4px solid #bfc1c3;"></div>
<svg style="left:343.70px;top:215.40px" width="5.40" height="14.40" viewBox="0 0 5.40 14.40"><path d="M0.6 2.8 L1.3 3.0 L2.0 2.4 L2.7 2.5 L3.4 3.4 L4.1 3.8 L4.8 2.6 L4.8 5.3 L4.1 6.1 L3.4 5.2 L2.7 6.0 L2.0 5.5 L1.3 6.3 L0.6 4.8Z" fill="#3e4044"/><path d="M0.6 8.5 L1.3 9.7 L2.0 8.4 L2.7 9.7 L3.4 9.0 L4.1 8.8 L4.8 9.9 L4.8 11.9 L4.1 12.0 L3.4 12.3 L2.7 11.9 L2.0 11.8 L1.3 10.8 L0.6 11.0Z" fill="#3e4044"/></svg>
<div style="left:355.60px;top:162.80px;width:4.90px;height:16.20px;background:#9a9c9f;border-radius:0.8px;border:0.5px solid #bcbec0;"></div>
<div style="left:355.60px;top:180.20px;width:4.90px;height:16.60px;background:#a2a4a7;border-radius:0.8px;border:0.4px solid #bfc1c3;"></div>
<svg style="left:355.60px;top:180.20px" width="4.90" height="16.60" viewBox="0 0 4.90 16.60"><path d="M0.6 2.9 L1.3 4.3 L2.1 3.0 L2.8 3.8 L3.6 4.1 L4.3 4.4 L4.3 7.2 L3.6 6.5 L2.8 7.0 L2.1 6.3 L1.3 5.8 L0.6 6.7Z" fill="#3e4044"/><path d="M0.6 11.2 L1.3 10.1 L2.1 11.0 L2.8 11.0 L3.6 10.0 L4.3 10.0 L4.3 12.9 L3.6 12.5 L2.8 12.6 L2.1 13.9 L1.3 13.5 L0.6 14.2Z" fill="#3e4044"/></svg>
<div style="left:355.60px;top:197.80px;width:4.90px;height:16.60px;background:#a2a4a7;border-radius:0.8px;border:0.4px solid #bfc1c3;"></div>
<svg style="left:355.60px;top:197.80px" width="4.90" height="16.60" viewBox="0 0 4.90 16.60"><path d="M0.6 2.9 L1.3 3.5 L2.1 3.7 L2.8 3.8 L3.6 3.6 L4.3 3.5 L4.3 7.2 L3.6 6.5 L2.8 7.1 L2.1 5.7 L1.3 6.2 L0.6 6.8Z" fill="#3e4044"/><path d="M0.6 10.6 L1.3 10.5 L2.1 10.7 L2.8 10.2 L3.6 11.4 L4.3 11.1 L4.3 13.8 L3.6 13.8 L2.8 12.4 L2.1 14.2 L1.3 13.1 L0.6 13.1Z" fill="#3e4044"/></svg>
<div style="left:355.60px;top:215.40px;width:4.90px;height:14.40px;background:#a2a4a7;border-radius:0.8px;border:0.4px solid #bfc1c3;"></div>
<svg style="left:355.60px;top:215.40px" width="4.90" height="14.40" viewBox="0 0 4.90 14.40"><path d="M0.6 3.9 L1.3 2.4 L2.1 3.6 L2.8 2.8 L3.6 3.4 L4.3 3.1 L4.3 4.9 L3.6 5.3 L2.8 5.5 L2.1 5.2 L1.3 5.7 L0.6 5.3Z" fill="#3e4044"/><path d="M0.6 9.0 L1.3 9.0 L2.1 8.7 L2.8 9.9 L3.6 8.9 L4.3 8.9 L4.3 10.9 L3.6 11.6 L2.8 12.0 L2.1 12.1 L1.3 11.8 L0.6 11.6Z" fill="#3e4044"/></svg>
<div style="left:379.60px;top:162.80px;width:6.40px;height:16.20px;background:#9a9c9f;border-radius:0.8px;border:0.5px solid #bcbec0;"></div>
<div style="left:379.60px;top:180.20px;width:6.40px;height:16.60px;background:#a2a4a7;border-radius:0.8px;border:0.4px solid #bfc1c3;"></div>
<svg style="left:379.60px;top:180.20px" width="6.40" height="16.60" viewBox="0 0 6.40 16.60"><path d="M0.6 3.8 L1.3 4.1 L2.1 3.2 L2.8 4.2 L3.6 2.8 L4.3 2.8 L5.1 4.5 L5.8 3.5 L5.8 6.9 L5.1 5.9 L4.3 6.7 L3.6 6.6 L2.8 6.1 L2.1 7.1 L1.3 5.7 L0.6 6.9Z" fill="#3e4044"/><path d="M0.6 11.4 L1.3 9.7 L2.1 9.7 L2.8 10.7 L3.6 11.5 L4.3 9.7 L5.1 10.6 L5.8 9.6 L5.8 13.1 L5.1 14.3 L4.3 12.8 L3.6 13.0 L2.8 13.1 L2.1 13.4 L1.3 12.4 L0.6 12.5Z" fill="#3e4044"/></svg>
<div style="left:379.60px;top:197.80px;width:6.40px;height:16.60px;background:#a2a4a7;border-radius:0.8px;border:0.4px solid #bfc1c3;"></div>
<svg style="left:379.60px;top:197.80px" width="6.40" height="16.60" viewBox="0 0 6.40 16.60"><path d="M0.6 4.0 L1.3 3.5 L2.1 4.0 L2.8 4.3 L3.6 3.3 L4.3 3.7 L5.1 4.0 L5.8 3.0 L5.8 6.1 L5.1 5.6 L4.3 7.1 L3.6 6.3 L2.8 5.5 L2.1 5.5 L1.3 6.6 L0.6 5.7Z" fill="#3e4044"/><path d="M0.6 10.1 L1.3 10.6 L2.1 10.8 L2.8 10.4 L3.6 10.8 L4.3 10.4 L5.1 10.0 L5.8 10.1 L5.8 14.3 L5.1 13.1 L4.3 12.8 L3.6 14.1 L2.8 13.6 L2.1 13.5 L1.3 12.4 L0.6 14.0Z" fill="#3e4044"/></svg>
<div style="left:379.60px;top:215.40px;width:6.40px;height:14.40px;background:#a2a4a7;border-radius:0.8px;border:0.4px solid #bfc1c3;"></div>
<svg style="left:379.60px;top:215.40px" width="6.40" height="14.40" viewBox="0 0 6.40 14.40"><path d="M0.6 2.5 L1.3 3.1 L2.1 3.5 L2.8 2.4 L3.6 3.8 L4.3 3.2 L5.1 3.7 L5.8 2.9 L5.8 5.9 L5.1 6.0 L4.3 5.8 L3.6 6.3 L2.8 5.2 L2.1 4.8 L1.3 5.3 L0.6 5.2Z" fill="#3e4044"/><path d="M0.6 9.5 L1.3 8.9 L2.1 8.4 L2.8 8.4 L3.6 8.8 L4.3 9.1 L5.1 8.9 L5.8 8.4 L5.8 11.3 L5.1 11.5 L4.3 10.9 L3.6 10.8 L2.8 11.4 L2.1 10.9 L1.3 11.8 L0.6 11.2Z" fill="#3e4044"/></svg>
<div style="left:403.00px;top:162.80px;width:2.80px;height:16.20px;background:#9a9c9f;border-radius:0.8px;border:0.5px solid #bcbec0;"></div>
<div style="left:403.00px;top:180.20px;width:2.80px;height:16.60px;background:#a2a4a7;border-radius:0.8px;border:0.4px solid #bfc1c3;"></div>
<svg style="left:403.00px;top:180.20px" width="2.80" height="16.60" viewBox="0 0 2.80 16.60"><path d="M0.6 3.0 L1.1 4.5 L1.7 3.9 L2.2 3.9 L2.2 6.4 L1.7 6.1 L1.1 6.1 L0.6 6.9Z" fill="#3e4044"/><path d="M0.6 9.6 L1.1 11.2 L1.7 10.4 L2.2 10.8 L2.2 12.8 L1.7 12.6 L1.1 12.7 L0.6 13.6Z" fill="#3e4044"/></svg>
<div style="left:403.00px;top:197.80px;width:2.80px;height:16.60px;background:#a2a4a7;border-radius:0.8px;border:0.4px solid #bfc1c3;"></div>
<svg style="left:403.00px;top:197.80px" width="2.80" height="16.60" viewBox="0 0 2.80 16.60"><path d="M0.6 4.4 L1.1 3.6 L1.7 4.4 L2.2 4.5 L2.2 7.0 L1.7 7.0 L1.1 5.6 L0.6 6.7Z" fill="#3e4044"/><path d="M0.6 10.1 L1.1 10.8 L1.7 10.4 L2.2 10.4 L2.2 13.0 L1.7 13.0 L1.1 12.8 L0.6 12.8Z" fill="#3e4044"/></svg>
<div style="left:403.00px;top:215.40px;width:2.80px;height:14.40px;background:#a2a4a7;border-radius:0.8px;border:0.4px solid #bfc1c3;"></div>
<svg style="left:403.00px;top:215.40px" width="2.80" height="14.40" viewBox="0 0 2.80 14.40"><path d="M0.6 3.4 L1.1 2.9 L1.7 3.2 L2.2 3.5 L2.2 6.3 L1.7 4.9 L1.1 5.6 L0.6 4.9Z" fill="#3e4044"/><path d="M0.6 9.4 L1.1 9.3 L1.7 9.7 L2.2 9.5 L2.2 12.0 L1.7 11.2 L1.1 11.5 L0.6 11.0Z" fill="#3e4044"/></svg>
<div style="left:408.00px;top:162.80px;width:1.80px;height:16.20px;background:#9a9c9f;border-radius:0.8px;border:0.5px solid #bcbec0;"></div>
<div style="left:408.00px;top:180.20px;width:1.80px;height:16.60px;background:#a2a4a7;border-radius:0.8px;border:0.4px solid #bfc1c3;"></div>
<svg style="left:408.00px;top:180.20px" width="1.80" height="16.60" viewBox="0 0 1.80 16.60"><path d="M0.6 4.3 L0.8 3.2 L1.0 3.8 L1.2 3.0 L1.2 6.2 L1.0 6.8 L0.8 5.5 L0.6 6.7Z" fill="#3e4044"/><path d="M0.6 11.4 L0.8 10.3 L1.0 9.9 L1.2 10.7 L1.2 14.1 L1.0 13.6 L0.8 13.3 L0.6 13.9Z" fill="#3e4044"/></svg>
<div style="left:408.00px;top:197.80px;width:1.80px;height:16.60px;background:#a2a4a7;border-radius:0.8px;border:0.4px solid #bfc1c3;"></div>
<svg style="left:408.00px;top:197.80px" width="1.80" height="16.60" viewBox="0 0 1.80 16.60"><path d="M0.6 3.8 L0.8 3.9 L1.0 2.8 L1.2 3.5 L1.2 6.1 L1.0 5.5 L0.8 5.7 L0.6 6.0Z" fill="#3e4044"/><path d="M0.6 10.7 L0.8 10.9 L1.0 10.3 L1.2 10.7 L1.2 13.5 L1.0 12.5 L0.8 14.1 L0.6 13.7Z" fill="#3e4044"/></svg>
<div style="left:408.00px;top:215.40px;width:1.80px;height:14.40px;background:#a2a4a7;border-radius:0.8px;border:0.4px solid #bfc1c3;"></div>
<svg style="left:408.00px;top:215.40px" width="1.80" height="14.40" viewBox="0 0 1.80 14.40"><path d="M0.6 3.2 L0.8 3.6 L1.0 3.5 L1.2 3.1 L1.2 5.5 L1.0 5.6 L0.8 5.1 L0.6 5.8Z" fill="#3e4044"/><path d="M0.6 9.5 L0.8 9.1 L1.0 8.9 L1.2 10.0 L1.2 12.2 L1.0 12.0 L0.8 11.8 L0.6 11.5Z" fill="#3e4044"/></svg>
<div style="left:315.40px;top:111.00px;width:1.50px;height:118.80px;background:#909295;"></div>
<div style="left:222.00px;top:232.90px;width:388.00px;height:2.00px;background:#c6c8ca;border-radius:1px;"></div>
<div style="left:610.00px;top:233.40px;width:43.00px;height:0.70px;background:#54575b;"></div>
<span class="t" style="left:661.40px;top:231.60px;font-size:3.2px;color:#aaa;font-weight:normal;">&#9660;</span>
<div style="left:671.00px;top:233.60px;width:22.40px;height:0.70px;background:#6a6d71;"></div>
<div style="left:673.60px;top:232.80px;width:2.20px;height:2.20px;background:#d4d4d4;border-radius:50%;"></div>
<span class="t" style="left:667.40px;top:230.60px;font-size:4.4px;color:#aaa;font-weight:normal;">-</span>
<span class="t" style="left:695.40px;top:231.00px;font-size:4.4px;color:#aaa;font-weight:normal;">+</span>
<div style="left:703.60px;top:109.40px;width:8.00px;height:120.40px;background:#1f2225;"></div>
<div style="left:704.80px;top:113.80px;width:5.00px;height:5.00px;background:#6a6d71;border-radius:0.5px;"></div>
<div style="left:706.00px;top:115.60px;width:2.60px;height:1.80px;background:#ddd;"></div>
<span class="t" style="left:704.60px;top:122.40px;font-size:4px;color:#aaa;font-weight:normal;">&#10003;</span>
<div style="left:705.80px;top:131.00px;width:0.70px;height:18.00px;background:#54575b;"></div>
<div style="left:705.00px;top:148.00px;width:2.20px;height:2.20px;background:#cfcfcf;border-radius:50%;"></div>
<div style="left:705.80px;top:159.00px;width:0.70px;height:18.00px;background:#54575b;"></div>
<div style="left:705.00px;top:164.00px;width:2.40px;height:12.00px;background:#d8dadc;border-radius:1px;"></div>
<span class="t" style="left:704.40px;top:193.40px;font-size:3.2px;color:#aaa;font-weight:normal;">&#9660;</span>
<div style="left:705.80px;top:202.00px;width:0.70px;height:25.00px;background:#54575b;"></div>
<div style="left:705.00px;top:205.00px;width:2.20px;height:2.20px;background:#cfcfcf;border-radius:50%;"></div>
<div style="left:87.60px;top:240.60px;width:625.00px;height:190.00px;background:#2a2d31;border:0.8px solid #4a4d51;border-radius:3px 3px 0 0;"></div>
<div style="left:88.40px;top:241.40px;width:14.00px;height:190.00px;background:#292c30;border-radius:3px 0 0 0;"></div>
<svg style="left:100px;top:244.4px" width="6" height="181" viewBox="0 0 6 181"><path d="M2.5 0 L2.5 100 L4.6 104.6 L2.5 109.2 L2.5 181" fill="none" stroke="#5a5d61" stroke-width="0.7"/></svg>
<div style="left:91.90px;top:248.80px;width:6.20px;height:1.20px;background:#e6e6e6;"></div>
<div style="left:90.80px;top:343.00px;width:8.30px;height:10.80px;background:#f4f4f4;border-radius:1px;"></div>
<svg style="left:90.8px;top:343.0px" width="8.3" height="10.8" viewBox="0 0 8.3 10.8"><g fill="none" stroke="#222" stroke-width="0.8"><path d="M3.6 2.6 L3.6 8.4"/></g><rect x="2.4" y="3.4" width="2.4" height="1.4" fill="#222"/><rect x="3.6" y="6" width="2.8" height="1.4" fill="#222"/></svg>
<div style="left:90.80px;top:356.20px;width:8.40px;height:9.60px;background:#2e3135;border-radius:1px;border:0.6px solid #4a4d51;"></div>
<svg style="left:90.6px;top:356.4px" width="8.6" height="9.4" viewBox="0 0 8.6 9.4"><g fill="none" stroke="#e6e6e6" stroke-width="0.8"><rect x="2.8" y="3" width="3" height="3.2"/><path d="M1.6 4.6 L7 4.6"/></g></svg>
<div style="left:90.80px;top:368.50px;width:8.40px;height:10.00px;background:#2e3135;border-radius:1px;border:0.6px solid #4a4d51;"></div>
<svg style="left:90.6px;top:368.6px" width="8.6" height="9.8" viewBox="0 0 8.6 9.8"><g fill="none" stroke="#e6e6e6" stroke-width="0.8"><rect x="2.8" y="2.2" width="3" height="4" rx="0.8"/><path d="M1.8 7.8 L6.8 7.8"/></g></svg>
<div style="left:144.22px;top:287.00px;width:0.60px;height:114.00px;background:#292c2f;"></div><div style="left:115.40px;top:290.00px;width:12.00px;height:108.00px;background:#2f3236;"></div><div style="left:107.50px;top:245.60px;width:36.60px;height:15.40px;background:#000;border-radius:1px;"></div><div style="left:124.90px;top:246.00px;width:1.90px;height:9.60px;background:linear-gradient(#d4e8f5,#86aac1);border-radius:0.6px;"></div><span class="t" style="left:107.50px;top:257.00px;font-size:4.0px;color:#f0f0f0;font-weight:bold;width:36.60px;text-align:center;">C</span><div style="left:107.60px;top:264.20px;width:36.40px;height:20.40px;background:#1c2026;border-radius:1.4px;"></div><div style="left:107.90px;top:264.50px;width:17.20px;height:9.60px;background:linear-gradient(#5c6b81,#465467);border-radius:1px 0 0 0;"></div><div style="left:126.10px;top:264.50px;width:17.60px;height:9.60px;background:linear-gradient(#5c6b81,#465467);border-radius:0 1px 0 0;"></div><div style="left:107.90px;top:274.80px;width:17.20px;height:9.50px;background:linear-gradient(#505f74,#3c495b);border-radius:0 0 0 1px;"></div><div style="left:126.10px;top:274.80px;width:17.60px;height:9.50px;background:linear-gradient(#505f74,#3c495b);border-radius:0 0 1px 0;"></div><span class="t" style="left:107.90px;top:268.00px;font-size:4.4px;color:#1b2129;font-weight:bold;width:17.30px;text-align:center;">M</span><span class="t" style="left:126.10px;top:268.00px;font-size:4.4px;color:#1b2129;font-weight:bold;width:17.60px;text-align:center;">S</span><span class="t" style="left:107.90px;top:278.00px;font-size:4.4px;color:#4d5b70;font-weight:normal;width:17.30px;text-align:center;">L</span><svg style="left:132.40px;top:277px" width="5" height="5" viewBox="0 0 5 5"><g fill="none" stroke="#161a20" stroke-width="0.9"><path d="M3.9 1.6 A1.6 1.6 0 1 0 4 3.4"/><path d="M2 2.5 L4.2 2.5"/></g></svg><div style="left:113.50px;top:293.40px;width:1.30px;height:104.00px;background:#17191b;border-radius:0.6px;"></div><div style="left:115.80px;top:296.25px;width:4.20px;height:0.50px;background:#5f6266;"></div><span class="t" style="left:116.90px;top:296.00px;font-size:3.4px;color:#b4b6b9;font-weight:bold;width:8.00px;text-align:right;">6</span><div style="left:115.80px;top:315.25px;width:4.20px;height:0.50px;background:#5f6266;"></div><span class="t" style="left:116.90px;top:315.00px;font-size:3.4px;color:#b4b6b9;font-weight:bold;width:8.00px;text-align:right;">0</span><div style="left:115.80px;top:333.25px;width:4.20px;height:0.50px;background:#5f6266;"></div><span class="t" style="left:116.90px;top:333.00px;font-size:3.4px;color:#b4b6b9;font-weight:bold;width:8.00px;text-align:right;">5</span><div style="left:115.80px;top:347.25px;width:4.20px;height:0.50px;background:#5f6266;"></div><span class="t" style="left:116.90px;top:347.00px;font-size:3.4px;color:#b4b6b9;font-weight:bold;width:8.00px;text-align:right;">10</span><div style="left:115.80px;top:357.25px;width:4.20px;height:0.50px;background:#5f6266;"></div><span class="t" style="left:116.90px;top:357.00px;font-size:3.4px;color:#b4b6b9;font-weight:bold;width:8.00px;text-align:right;">15</span><div style="left:115.80px;top:365.25px;width:4.20px;height:0.50px;background:#5f6266;"></div><span class="t" style="left:116.90px;top:365.00px;font-size:3.4px;color:#b4b6b9;font-weight:bold;width:8.00px;text-align:right;">20</span><div style="left:115.80px;top:376.25px;width:4.20px;height:0.50px;background:#5f6266;"></div><span class="t" style="left:116.90px;top:376.00px;font-size:3.4px;color:#b4b6b9;font-weight:bold;width:8.00px;text-align:right;">30</span><div style="left:115.80px;top:382.25px;width:4.20px;height:0.50px;background:#5f6266;"></div><span class="t" style="left:116.90px;top:382.00px;font-size:3.4px;color:#b4b6b9;font-weight:bold;width:8.00px;text-align:right;">40</span><div style="left:116.40px;top:385.40px;width:3.80px;height:1.30px;background:#4c4f53;"></div><div style="left:115.80px;top:389.30px;width:4.20px;height:0.50px;background:#5f6266;"></div><span class="t" style="left:118.90px;top:386.00px;font-size:5.2px;color:#b4b6b9;font-weight:bold;width:6.40px;text-align:right;">&#8734;</span><div style="left:127.60px;top:288.80px;width:15.20px;height:109.40px;background:#040404;border:0.6px solid #45484c;border-radius:1.6px;"></div><div style="left:128.20px;top:289.40px;width:14.00px;height:6.20px;background:linear-gradient(#222426,#0a0a0a);border-radius:1.2px 1.2px 0 0;"></div><div style="left:128.20px;top:388.60px;width:14.00px;height:9.00px;background:linear-gradient(#040404,#2c2e30);border-radius:0 0 1.2px 1.2px;"></div><span class="t" style="left:127.60px;top:296.00px;font-size:3.2px;color:#383b3e;font-weight:bold;width:15.20px;text-align:center;">0</span><div style="left:129.00px;top:296.25px;width:3.40px;height:0.50px;background:#2a2c2f;"></div><div style="left:138.00px;top:296.25px;width:3.40px;height:0.50px;background:#2a2c2f;"></div><span class="t" style="left:127.60px;top:310.00px;font-size:3.2px;color:#383b3e;font-weight:bold;width:15.20px;text-align:center;">6</span><div style="left:129.00px;top:310.25px;width:3.40px;height:0.50px;background:#2a2c2f;"></div><div style="left:138.00px;top:310.25px;width:3.40px;height:0.50px;background:#2a2c2f;"></div><span class="t" style="left:127.60px;top:324.00px;font-size:3.2px;color:#383b3e;font-weight:bold;width:15.20px;text-align:center;">12</span><div style="left:129.00px;top:324.25px;width:3.40px;height:0.50px;background:#2a2c2f;"></div><div style="left:138.00px;top:324.25px;width:3.40px;height:0.50px;background:#2a2c2f;"></div><span class="t" style="left:127.60px;top:337.00px;font-size:3.2px;color:#383b3e;font-weight:bold;width:15.20px;text-align:center;">18</span><div style="left:129.00px;top:337.25px;width:3.40px;height:0.50px;background:#2a2c2f;"></div><div style="left:138.00px;top:337.25px;width:3.40px;height:0.50px;background:#2a2c2f;"></div><span class="t" style="left:127.60px;top:351.00px;font-size:3.2px;color:#383b3e;font-weight:bold;width:15.20px;text-align:center;">24</span><div style="left:129.00px;top:351.25px;width:3.40px;height:0.50px;background:#2a2c2f;"></div><div style="left:138.00px;top:351.25px;width:3.40px;height:0.50px;background:#2a2c2f;"></div><span class="t" style="left:127.60px;top:362.00px;font-size:3.2px;color:#383b3e;font-weight:bold;width:15.20px;text-align:center;">30</span><div style="left:129.00px;top:362.25px;width:3.40px;height:0.50px;background:#2a2c2f;"></div><div style="left:138.00px;top:362.25px;width:3.40px;height:0.50px;background:#2a2c2f;"></div><span class="t" style="left:127.60px;top:378.00px;font-size:3.2px;color:#383b3e;font-weight:bold;width:15.20px;text-align:center;">40</span><div style="left:129.00px;top:378.25px;width:3.40px;height:0.50px;background:#2a2c2f;"></div><div style="left:138.00px;top:378.25px;width:3.40px;height:0.50px;background:#2a2c2f;"></div><span class="t" style="left:127.60px;top:390.00px;font-size:3.2px;color:#383b3e;font-weight:bold;width:15.20px;text-align:center;">50</span><div style="left:129.00px;top:390.25px;width:3.40px;height:0.50px;background:#2a2c2f;"></div><div style="left:138.00px;top:390.25px;width:3.40px;height:0.50px;background:#2a2c2f;"></div><div style="left:109.10px;top:307.00px;width:9.40px;height:18.40px;background:linear-gradient(#f4fafe 0%,#f4fafe 9%,#5aaee8 13%,#86c6f1 44%,#2c4a5e 47%,#2c4a5e 52%,#c6e3f7 56%,#e4f2fb 86%,#ffffff 92%,#ffffff 100%);border-radius:1.2px;border:0.5px solid #15212b;box-shadow:0 0.6px 1px rgba(0,0,0,0.6);"></div><div style="left:106.80px;top:401.20px;width:37.52px;height:11.20px;background:#1e2023;"></div><span class="t" style="left:109.80px;top:404.40px;font-size:6.3px;color:#f0f0f0;font-weight:bold;">0.00</span><span class="t" style="left:127.00px;top:404.00px;font-size:5.4px;color:#8a8d91;font-weight:normal;width:16.50px;text-align:center;">-&#8734;</span><div style="left:107.60px;top:413.40px;width:36.40px;height:12.00px;background:#1c2026;border-radius:1.4px 1.4px 0 0;"></div><div style="left:107.90px;top:413.80px;width:17.20px;height:11.40px;background:linear-gradient(#536277,#3a4759);border-radius:1px 0 0 0;"></div><div style="left:126.10px;top:413.80px;width:17.60px;height:11.40px;background:linear-gradient(#536277,#3a4759);border-radius:0 1px 0 0;"></div><span class="t" style="left:107.90px;top:418.00px;font-size:4.4px;color:#1b2129;font-weight:bold;width:17.30px;text-align:center;">R</span><span class="t" style="left:126.10px;top:418.00px;font-size:4.4px;color:#1b2129;font-weight:bold;width:17.60px;text-align:center;">W</span><div style="left:182.14px;top:287.00px;width:0.60px;height:114.00px;background:#292c2f;"></div><div style="left:153.32px;top:290.00px;width:12.00px;height:108.00px;background:#2f3236;"></div><div style="left:145.42px;top:245.60px;width:36.60px;height:15.40px;background:#000;border-radius:1px;"></div><div style="left:162.82px;top:246.00px;width:1.90px;height:9.60px;background:linear-gradient(#d4e8f5,#86aac1);border-radius:0.6px;"></div><span class="t" style="left:145.42px;top:257.00px;font-size:4.0px;color:#f0f0f0;font-weight:bold;width:36.60px;text-align:center;">C</span><div style="left:145.52px;top:264.20px;width:36.40px;height:20.40px;background:#1c2026;border-radius:1.4px;"></div><div style="left:145.82px;top:264.50px;width:17.20px;height:9.60px;background:linear-gradient(#5c6b81,#465467);border-radius:1px 0 0 0;"></div><div style="left:164.02px;top:264.50px;width:17.60px;height:9.60px;background:linear-gradient(#5c6b81,#465467);border-radius:0 1px 0 0;"></div><div style="left:145.82px;top:274.80px;width:17.20px;height:9.50px;background:linear-gradient(#505f74,#3c495b);border-radius:0 0 0 1px;"></div><div style="left:164.02px;top:274.80px;width:17.60px;height:9.50px;background:linear-gradient(#505f74,#3c495b);border-radius:0 0 1px 0;"></div><span class="t" style="left:145.82px;top:268.00px;font-size:4.4px;color:#1b2129;font-weight:bold;width:17.30px;text-align:center;">M</span><span class="t" style="left:164.02px;top:268.00px;font-size:4.4px;color:#1b2129;font-weight:bold;width:17.60px;text-align:center;">S</span><span class="t" style="left:145.82px;top:278.00px;font-size:4.4px;color:#4d5b70;font-weight:normal;width:17.30px;text-align:center;">L</span><svg style="left:170.32px;top:277px" width="5" height="5" viewBox="0 0 5 5"><g fill="none" stroke="#161a20" stroke-width="0.9"><path d="M3.9 1.6 A1.6 1.6 0 1 0 4 3.4"/><path d="M2 2.5 L4.2 2.5"/></g></svg><div style="left:151.42px;top:293.40px;width:1.30px;height:104.00px;background:#17191b;border-radius:0.6px;"></div><div style="left:153.72px;top:296.25px;width:4.20px;height:0.50px;background:#5f6266;"></div><span class="t" style="left:154.82px;top:296.00px;font-size:3.4px;color:#b4b6b9;font-weight:bold;width:8.00px;text-align:right;">6</span><div style="left:153.72px;top:315.25px;width:4.20px;height:0.50px;background:#5f6266;"></div><span class="t" style="left:154.82px;top:315.00px;font-size:3.4px;color:#b4b6b9;font-weight:bold;width:8.00px;text-align:right;">0</span><div style="left:153.72px;top:333.25px;width:4.20px;height:0.50px;background:#5f6266;"></div><span class="t" style="left:154.82px;top:333.00px;font-size:3.4px;color:#b4b6b9;font-weight:bold;width:8.00px;text-align:right;">5</span><div style="left:153.72px;top:347.25px;width:4.20px;height:0.50px;background:#5f6266;"></div><span class="t" style="left:154.82px;top:347.00px;font-size:3.4px;color:#b4b6b9;font-weight:bold;width:8.00px;text-align:right;">10</span><div style="left:153.72px;top:357.25px;width:4.20px;height:0.50px;background:#5f6266;"></div><span class="t" style="left:154.82px;top:357.00px;font-size:3.4px;color:#b4b6b9;font-weight:bold;width:8.00px;text-align:right;">15</span><div style="left:153.72px;top:365.25px;width:4.20px;height:0.50px;background:#5f6266;"></div><span class="t" style="left:154.82px;top:365.00px;font-size:3.4px;color:#b4b6b9;font-weight:bold;width:8.00px;text-align:right;">20</span><div style="left:153.72px;top:376.25px;width:4.20px;height:0.50px;background:#5f6266;"></div><span class="t" style="left:154.82px;top:376.00px;font-size:3.4px;color:#b4b6b9;font-weight:bold;width:8.00px;text-align:right;">30</span><div style="left:153.72px;top:382.25px;width:4.20px;height:0.50px;background:#5f6266;"></div><span class="t" style="left:154.82px;top:382.00px;font-size:3.4px;color:#b4b6b9;font-weight:bold;width:8.00px;text-align:right;">40</span><div style="left:154.32px;top:385.40px;width:3.80px;height:1.30px;background:#4c4f53;"></div><div style="left:153.72px;top:389.30px;width:4.20px;height:0.50px;background:#5f6266;"></div><span class="t" style="left:156.82px;top:386.00px;font-size:5.2px;color:#b4b6b9;font-weight:bold;width:6.40px;text-align:right;">&#8734;</span><div style="left:165.52px;top:288.80px;width:15.20px;height:109.40px;background:#040404;border:0.6px solid #45484c;border-radius:1.6px;"></div><div style="left:166.12px;top:289.40px;width:14.00px;height:6.20px;background:linear-gradient(#222426,#0a0a0a);border-radius:1.2px 1.2px 0 0;"></div><div style="left:166.12px;top:388.60px;width:14.00px;height:9.00px;background:linear-gradient(#040404,#2c2e30);border-radius:0 0 1.2px 1.2px;"></div><span class="t" style="left:165.52px;top:296.00px;font-size:3.2px;color:#383b3e;font-weight:bold;width:15.20px;text-align:center;">0</span><div style="left:166.92px;top:296.25px;width:3.40px;height:0.50px;background:#2a2c2f;"></div><div style="left:175.92px;top:296.25px;width:3.40px;height:0.50px;background:#2a2c2f;"></div><span class="t" style="left:165.52px;top:310.00px;font-size:3.2px;color:#383b3e;font-weight:bold;width:15.20px;text-align:center;">6</span><div style="left:166.92px;top:310.25px;width:3.40px;height:0.50px;background:#2a2c2f;"></div><div style="left:175.92px;top:310.25px;width:3.40px;height:0.50px;background:#2a2c2f;"></div><span class="t" style="left:165.52px;top:324.00px;font-size:3.2px;color:#383b3e;font-weight:bold;width:15.20px;text-align:center;">12</span><div style="left:166.92px;top:324.25px;width:3.40px;height:0.50px;background:#2a2c2f;"></div><div style="left:175.92px;top:324.25px;width:3.40px;height:0.50px;background:#2a2c2f;"></div><span class="t" style="left:165.52px;top:337.00px;font-size:3.2px;color:#383b3e;font-weight:bold;width:15.20px;text-align:center;">18</span><div style="left:166.92px;top:337.25px;width:3.40px;height:0.50px;background:#2a2c2f;"></div><div style="left:175.92px;top:337.25px;width:3.40px;height:0.50px;background:#2a2c2f;"></div><span class="t" style="left:165.52px;top:351.00px;font-size:3.2px;color:#383b3e;font-weight:bold;width:15.20px;text-align:center;">24</span><div style="left:166.92px;top:351.25px;width:3.40px;height:0.50px;background:#2a2c2f;"></div><div style="left:175.92px;top:351.25px;width:3.40px;height:0.50px;background:#2a2c2f;"></div><span class="t" style="left:165.52px;top:362.00px;font-size:3.2px;color:#383b3e;font-weight:bold;width:15.20px;text-align:center;">30</span><div style="left:166.92px;top:362.25px;width:3.40px;height:0.50px;background:#2a2c2f;"></div><div style="left:175.92px;top:362.25px;width:3.40px;height:0.50px;background:#2a2c2f;"></div><span class="t" style="left:165.52px;top:378.00px;font-size:3.2px;color:#383b3e;font-weight:bold;width:15.20px;text-align:center;">40</span><div style="left:166.92px;top:378.25px;width:3.40px;height:0.50px;background:#2a2c2f;"></div><div style="left:175.92px;top:378.25px;width:3.40px;height:0.50px;background:#2a2c2f;"></div><span class="t" style="left:165.52px;top:390.00px;font-size:3.2px;color:#383b3e;font-weight:bold;width:15.20px;text-align:center;">50</span><div style="left:166.92px;top:390.25px;width:3.40px;height:0.50px;background:#2a2c2f;"></div><div style="left:175.92px;top:390.25px;width:3.40px;height:0.50px;background:#2a2c2f;"></div><div style="left:147.02px;top:307.00px;width:9.40px;height:18.40px;background:linear-gradient(#f4fafe 0%,#f4fafe 9%,#5aaee8 13%,#86c6f1 44%,#2c4a5e 47%,#2c4a5e 52%,#c6e3f7 56%,#e4f2fb 86%,#ffffff 92%,#ffffff 100%);border-radius:1.2px;border:0.5px solid #15212b;box-shadow:0 0.6px 1px rgba(0,0,0,0.6);"></div><div style="left:144.72px;top:401.20px;width:37.52px;height:11.20px;background:#1e2023;"></div><span class="t" style="left:147.72px;top:404.40px;font-size:6.3px;color:#f0f0f0;font-weight:bold;">0.00</span><span class="t" style="left:164.92px;top:404.00px;font-size:5.4px;color:#8a8d91;font-weight:normal;width:16.50px;text-align:center;">-&#8734;</span><div style="left:145.52px;top:413.40px;width:36.40px;height:12.00px;background:#1c2026;border-radius:1.4px 1.4px 0 0;"></div><div style="left:145.82px;top:413.80px;width:17.20px;height:11.40px;background:linear-gradient(#536277,#3a4759);border-radius:1px 0 0 0;"></div><div style="left:164.02px;top:413.80px;width:17.60px;height:11.40px;background:linear-gradient(#536277,#3a4759);border-radius:0 1px 0 0;"></div><span class="t" style="left:145.82px;top:418.00px;font-size:4.4px;color:#1b2129;font-weight:bold;width:17.30px;text-align:center;">R</span><span class="t" style="left:164.02px;top:418.00px;font-size:4.4px;color:#1b2129;font-weight:bold;width:17.60px;text-align:center;">W</span><div style="left:182.44px;top:241.40px;width:37.92px;height:184.00px;background:#44474b;"></div><div style="left:182.44px;top:287.00px;width:37.92px;height:114.00px;background:linear-gradient(#585b5f,#4e5155 45%,#3c3f43);"></div><div style="left:220.06px;top:287.00px;width:0.60px;height:114.00px;background:#292c2f;"></div><div style="left:191.24px;top:290.00px;width:12.00px;height:108.00px;background:rgba(255,255,255,0.04);"></div><div style="left:183.34px;top:245.60px;width:36.60px;height:15.40px;background:#000;border-radius:1px;"></div><div style="left:200.74px;top:246.00px;width:1.90px;height:9.60px;background:linear-gradient(#d4e8f5,#86aac1);border-radius:0.6px;"></div><span class="t" style="left:183.34px;top:257.00px;font-size:4.0px;color:#f0f0f0;font-weight:bold;width:36.60px;text-align:center;">C</span><div style="left:183.44px;top:264.20px;width:36.40px;height:20.40px;background:#1c2026;border-radius:1.4px;"></div><div style="left:183.74px;top:264.50px;width:17.20px;height:9.60px;background:linear-gradient(#5c6b81,#465467);border-radius:1px 0 0 0;"></div><div style="left:201.94px;top:264.50px;width:17.60px;height:9.60px;background:linear-gradient(#5c6b81,#465467);border-radius:0 1px 0 0;"></div><div style="left:183.74px;top:274.80px;width:17.20px;height:9.50px;background:linear-gradient(#505f74,#3c495b);border-radius:0 0 0 1px;"></div><div style="left:201.94px;top:274.80px;width:17.60px;height:9.50px;background:linear-gradient(#505f74,#3c495b);border-radius:0 0 1px 0;"></div><span class="t" style="left:183.74px;top:268.00px;font-size:4.4px;color:#1b2129;font-weight:bold;width:17.30px;text-align:center;">M</span><span class="t" style="left:201.94px;top:268.00px;font-size:4.4px;color:#1b2129;font-weight:bold;width:17.60px;text-align:center;">S</span><span class="t" style="left:183.74px;top:278.00px;font-size:4.4px;color:#8b99ab;font-weight:normal;width:17.30px;text-align:center;">L</span><svg style="left:208.24px;top:277px" width="5" height="5" viewBox="0 0 5 5"><g fill="none" stroke="#161a20" stroke-width="0.9"><path d="M3.9 1.6 A1.6 1.6 0 1 0 4 3.4"/><path d="M2 2.5 L4.2 2.5"/></g></svg><div style="left:189.34px;top:293.40px;width:1.30px;height:104.00px;background:#2a2d30;border-radius:0.6px;"></div><div style="left:191.64px;top:296.25px;width:4.20px;height:0.50px;background:#8e9195;"></div><span class="t" style="left:192.74px;top:296.00px;font-size:3.4px;color:#b4b6b9;font-weight:bold;width:8.00px;text-align:right;">6</span><div style="left:191.64px;top:315.25px;width:4.20px;height:0.50px;background:#8e9195;"></div><span class="t" style="left:192.74px;top:315.00px;font-size:3.4px;color:#b4b6b9;font-weight:bold;width:8.00px;text-align:right;">0</span><div style="left:191.64px;top:333.25px;width:4.20px;height:0.50px;background:#8e9195;"></div><span class="t" style="left:192.74px;top:333.00px;font-size:3.4px;color:#b4b6b9;font-weight:bold;width:8.00px;text-align:right;">5</span><div style="left:191.64px;top:347.25px;width:4.20px;height:0.50px;background:#8e9195;"></div><span class="t" style="left:192.74px;top:347.00px;font-size:3.4px;color:#b4b6b9;font-weight:bold;width:8.00px;text-align:right;">10</span><div style="left:191.64px;top:357.25px;width:4.20px;height:0.50px;background:#8e9195;"></div><span class="t" style="left:192.74px;top:357.00px;font-size:3.4px;color:#b4b6b9;font-weight:bold;width:8.00px;text-align:right;">15</span><div style="left:191.64px;top:365.25px;width:4.20px;height:0.50px;background:#8e9195;"></div><span class="t" style="left:192.74px;top:365.00px;font-size:3.4px;color:#b4b6b9;font-weight:bold;width:8.00px;text-align:right;">20</span><div style="left:191.64px;top:376.25px;width:4.20px;height:0.50px;background:#8e9195;"></div><span class="t" style="left:192.74px;top:376.00px;font-size:3.4px;color:#b4b6b9;font-weight:bold;width:8.00px;text-align:right;">30</span><div style="left:191.64px;top:382.25px;width:4.20px;height:0.50px;background:#8e9195;"></div><span class="t" style="left:192.74px;top:382.00px;font-size:3.4px;color:#b4b6b9;font-weight:bold;width:8.00px;text-align:right;">40</span><div style="left:192.24px;top:385.40px;width:3.80px;height:1.30px;background:#4c4f53;"></div><div style="left:191.64px;top:389.30px;width:4.20px;height:0.50px;background:#5f6266;"></div><span class="t" style="left:194.74px;top:386.00px;font-size:5.2px;color:#b4b6b9;font-weight:bold;width:6.40px;text-align:right;">&#8734;</span><div style="left:203.44px;top:288.80px;width:15.20px;height:109.40px;background:#040404;border:0.6px solid #45484c;border-radius:1.6px;"></div><div style="left:204.04px;top:289.40px;width:14.00px;height:6.20px;background:linear-gradient(#222426,#0a0a0a);border-radius:1.2px 1.2px 0 0;"></div><div style="left:204.04px;top:388.60px;width:14.00px;height:9.00px;background:linear-gradient(#040404,#2c2e30);border-radius:0 0 1.2px 1.2px;"></div><span class="t" style="left:203.44px;top:296.00px;font-size:3.2px;color:#383b3e;font-weight:bold;width:15.20px;text-align:center;">0</span><div style="left:204.84px;top:296.25px;width:3.40px;height:0.50px;background:#2a2c2f;"></div><div style="left:213.84px;top:296.25px;width:3.40px;height:0.50px;background:#2a2c2f;"></div><span class="t" style="left:203.44px;top:310.00px;font-size:3.2px;color:#383b3e;font-weight:bold;width:15.20px;text-align:center;">6</span><div style="left:204.84px;top:310.25px;width:3.40px;height:0.50px;background:#2a2c2f;"></div><div style="left:213.84px;top:310.25px;width:3.40px;height:0.50px;background:#2a2c2f;"></div><span class="t" style="left:203.44px;top:324.00px;font-size:3.2px;color:#383b3e;font-weight:bold;width:15.20px;text-align:center;">12</span><div style="left:204.84px;top:324.25px;width:3.40px;height:0.50px;background:#2a2c2f;"></div><div style="left:213.84px;top:324.25px;width:3.40px;height:0.50px;background:#2a2c2f;"></div><span class="t" style="left:203.44px;top:337.00px;font-size:3.2px;color:#383b3e;font-weight:bold;width:15.20px;text-align:center;">18</span><div style="left:204.84px;top:337.25px;width:3.40px;height:0.50px;background:#2a2c2f;"></div><div style="left:213.84px;top:337.25px;width:3.40px;height:0.50px;background:#2a2c2f;"></div><span class="t" style="left:203.44px;top:351.00px;font-size:3.2px;color:#383b3e;font-weight:bold;width:15.20px;text-align:center;">24</span><div style="left:204.84px;top:351.25px;width:3.40px;height:0.50px;background:#2a2c2f;"></div><div style="left:213.84px;top:351.25px;width:3.40px;height:0.50px;background:#2a2c2f;"></div><span class="t" style="left:203.44px;top:362.00px;font-size:3.2px;color:#383b3e;font-weight:bold;width:15.20px;text-align:center;">30</span><div style="left:204.84px;top:362.25px;width:3.40px;height:0.50px;background:#2a2c2f;"></div><div style="left:213.84px;top:362.25px;width:3.40px;height:0.50px;background:#2a2c2f;"></div><span class="t" style="left:203.44px;top:378.00px;font-size:3.2px;color:#383b3e;font-weight:bold;width:15.20px;text-align:center;">40</span><div style="left:204.84px;top:378.25px;width:3.40px;height:0.50px;background:#2a2c2f;"></div><div style="left:213.84px;top:378.25px;width:3.40px;height:0.50px;background:#2a2c2f;"></div><span class="t" style="left:203.44px;top:390.00px;font-size:3.2px;color:#383b3e;font-weight:bold;width:15.20px;text-align:center;">50</span><div style="left:204.84px;top:390.25px;width:3.40px;height:0.50px;background:#2a2c2f;"></div><div style="left:213.84px;top:390.25px;width:3.40px;height:0.50px;background:#2a2c2f;"></div><div style="left:184.94px;top:307.00px;width:9.40px;height:18.40px;background:linear-gradient(#f4fafe 0%,#f4fafe 9%,#5aaee8 13%,#86c6f1 44%,#2c4a5e 47%,#2c4a5e 52%,#c6e3f7 56%,#e4f2fb 86%,#ffffff 92%,#ffffff 100%);border-radius:1.2px;border:0.5px solid #15212b;box-shadow:0 0.6px 1px rgba(0,0,0,0.6);"></div><div style="left:182.64px;top:401.20px;width:37.52px;height:11.20px;background:#3a3d41;"></div><span class="t" style="left:185.64px;top:404.40px;font-size:6.3px;color:#f0f0f0;font-weight:bold;">0.00</span><span class="t" style="left:202.84px;top:404.00px;font-size:5.4px;color:#8a8d91;font-weight:normal;width:16.50px;text-align:center;">-&#8734;</span><div style="left:183.44px;top:413.40px;width:36.40px;height:12.00px;background:#1c2026;border-radius:1.4px 1.4px 0 0;"></div><div style="left:183.74px;top:413.80px;width:17.20px;height:11.40px;background:linear-gradient(#536277,#3a4759);border-radius:1px 0 0 0;"></div><div style="left:201.94px;top:413.80px;width:17.60px;height:11.40px;background:linear-gradient(#536277,#3a4759);border-radius:0 1px 0 0;"></div><span class="t" style="left:183.74px;top:418.00px;font-size:4.4px;color:#1b2129;font-weight:bold;width:17.30px;text-align:center;">R</span><span class="t" style="left:201.94px;top:418.00px;font-size:4.4px;color:#1b2129;font-weight:bold;width:17.60px;text-align:center;">W</span><div style="left:201.84px;top:423.60px;width:17.70px;height:1.40px;background:#c8323c;"></div><div style="left:257.98px;top:287.00px;width:0.60px;height:114.00px;background:#292c2f;"></div><div style="left:229.16px;top:290.00px;width:12.00px;height:108.00px;background:#2f3236;"></div><div style="left:221.26px;top:245.60px;width:36.60px;height:15.40px;background:#000;border-radius:1px;"></div><div style="left:238.66px;top:246.00px;width:1.90px;height:9.60px;background:linear-gradient(#d4e8f5,#86aac1);border-radius:0.6px;"></div><span class="t" style="left:221.26px;top:257.00px;font-size:4.0px;color:#f0f0f0;font-weight:bold;width:36.60px;text-align:center;">C</span><div style="left:221.36px;top:264.20px;width:36.40px;height:20.40px;background:#1c2026;border-radius:1.4px;"></div><div style="left:221.66px;top:264.50px;width:17.20px;height:9.60px;background:linear-gradient(#5c6b81,#465467);border-radius:1px 0 0 0;"></div><div style="left:239.86px;top:264.50px;width:17.60px;height:9.60px;background:linear-gradient(#5c6b81,#465467);border-radius:0 1px 0 0;"></div><div style="left:221.66px;top:274.80px;width:17.20px;height:9.50px;background:linear-gradient(#505f74,#3c495b);border-radius:0 0 0 1px;"></div><div style="left:239.86px;top:274.80px;width:17.60px;height:9.50px;background:linear-gradient(#505f74,#3c495b);border-radius:0 0 1px 0;"></div><span class="t" style="left:221.66px;top:268.00px;font-size:4.4px;color:#1b2129;font-weight:bold;width:17.30px;text-align:center;">M</span><span class="t" style="left:239.86px;top:268.00px;font-size:4.4px;color:#1b2129;font-weight:bold;width:17.60px;text-align:center;">S</span><span class="t" style="left:221.66px;top:278.00px;font-size:4.4px;color:#4d5b70;font-weight:normal;width:17.30px;text-align:center;">L</span><svg style="left:246.16px;top:277px" width="5" height="5" viewBox="0 0 5 5"><g fill="none" stroke="#161a20" stroke-width="0.9"><path d="M3.9 1.6 A1.6 1.6 0 1 0 4 3.4"/><path d="M2 2.5 L4.2 2.5"/></g></svg><div style="left:227.26px;top:293.40px;width:1.30px;height:104.00px;background:#17191b;border-radius:0.6px;"></div><div style="left:229.56px;top:296.25px;width:4.20px;height:0.50px;background:#5f6266;"></div><span class="t" style="left:230.66px;top:296.00px;font-size:3.4px;color:#b4b6b9;font-weight:bold;width:8.00px;text-align:right;">6</span><div style="left:229.56px;top:315.25px;width:4.20px;height:0.50px;background:#5f6266;"></div><span class="t" style="left:230.66px;top:315.00px;font-size:3.4px;color:#b4b6b9;font-weight:bold;width:8.00px;text-align:right;">0</span><div style="left:229.56px;top:333.25px;width:4.20px;height:0.50px;background:#5f6266;"></div><span class="t" style="left:230.66px;top:333.00px;font-size:3.4px;color:#b4b6b9;font-weight:bold;width:8.00px;text-align:right;">5</span><div style="left:229.56px;top:347.25px;width:4.20px;height:0.50px;background:#5f6266;"></div><span class="t" style="left:230.66px;top:347.00px;font-size:3.4px;color:#b4b6b9;font-weight:bold;width:8.00px;text-align:right;">10</span><div style="left:229.56px;top:357.25px;width:4.20px;height:0.50px;background:#5f6266;"></div><span class="t" style="left:230.66px;top:357.00px;font-size:3.4px;color:#b4b6b9;font-weight:bold;width:8.00px;text-align:right;">15</span><div style="left:229.56px;top:365.25px;width:4.20px;height:0.50px;background:#5f6266;"></div><span class="t" style="left:230.66px;top:365.00px;font-size:3.4px;color:#b4b6b9;font-weight:bold;width:8.00px;text-align:right;">20</span><div style="left:229.56px;top:376.25px;width:4.20px;height:0.50px;background:#5f6266;"></div><span class="t" style="left:230.66px;top:376.00px;font-size:3.4px;color:#b4b6b9;font-weight:bold;width:8.00px;text-align:right;">30</span><div style="left:229.56px;top:382.25px;width:4.20px;height:0.50px;background:#5f6266;"></div><span class="t" style="left:230.66px;top:382.00px;font-size:3.4px;color:#b4b6b9;font-weight:bold;width:8.00px;text-align:right;">40</span><div style="left:230.16px;top:385.40px;width:3.80px;height:1.30px;background:#4c4f53;"></div><div style="left:229.56px;top:389.30px;width:4.20px;height:0.50px;background:#5f6266;"></div><span class="t" style="left:232.66px;top:386.00px;font-size:5.2px;color:#b4b6b9;font-weight:bold;width:6.40px;text-align:right;">&#8734;</span><div style="left:241.36px;top:288.80px;width:15.20px;height:109.40px;background:#040404;border:0.6px solid #45484c;border-radius:1.6px;"></div><div style="left:241.96px;top:289.40px;width:14.00px;height:6.20px;background:linear-gradient(#222426,#0a0a0a);border-radius:1.2px 1.2px 0 0;"></div><div style="left:241.96px;top:388.60px;width:14.00px;height:9.00px;background:linear-gradient(#040404,#2c2e30);border-radius:0 0 1.2px 1.2px;"></div><span class="t" style="left:241.36px;top:296.00px;font-size:3.2px;color:#383b3e;font-weight:bold;width:15.20px;text-align:center;">0</span><div style="left:242.76px;top:296.25px;width:3.40px;height:0.50px;background:#2a2c2f;"></div><div style="left:251.76px;top:296.25px;width:3.40px;height:0.50px;background:#2a2c2f;"></div><span class="t" style="left:241.36px;top:310.00px;font-size:3.2px;color:#383b3e;font-weight:bold;width:15.20px;text-align:center;">6</span><div style="left:242.76px;top:310.25px;width:3.40px;height:0.50px;background:#2a2c2f;"></div><div style="left:251.76px;top:310.25px;width:3.40px;height:0.50px;background:#2a2c2f;"></div><span class="t" style="left:241.36px;top:324.00px;font-size:3.2px;color:#383b3e;font-weight:bold;width:15.20px;text-align:center;">12</span><div style="left:242.76px;top:324.25px;width:3.40px;height:0.50px;background:#2a2c2f;"></div><div style="left:251.76px;top:324.25px;width:3.40px;height:0.50px;background:#2a2c2f;"></div><span class="t" style="left:241.36px;top:337.00px;font-size:3.2px;color:#383b3e;font-weight:bold;width:15.20px;text-align:center;">18</span><div style="left:242.76px;top:337.25px;width:3.40px;height:0.50px;background:#2a2c2f;"></div><div style="left:251.76px;top:337.25px;width:3.40px;height:0.50px;background:#2a2c2f;"></div><span class="t" style="left:241.36px;top:351.00px;font-size:3.2px;color:#383b3e;font-weight:bold;width:15.20px;text-align:center;">24</span><div style="left:242.76px;top:351.25px;width:3.40px;height:0.50px;background:#2a2c2f;"></div><div style="left:251.76px;top:351.25px;width:3.40px;height:0.50px;background:#2a2c2f;"></div><span class="t" style="left:241.36px;top:362.00px;font-size:3.2px;color:#383b3e;font-weight:bold;width:15.20px;text-align:center;">30</span><div style="left:242.76px;top:362.25px;width:3.40px;height:0.50px;background:#2a2c2f;"></div><div style="left:251.76px;top:362.25px;width:3.40px;height:0.50px;background:#2a2c2f;"></div><span class="t" style="left:241.36px;top:378.00px;font-size:3.2px;color:#383b3e;font-weight:bold;width:15.20px;text-align:center;">40</span><div style="left:242.76px;top:378.25px;width:3.40px;height:0.50px;background:#2a2c2f;"></div><div style="left:251.76px;top:378.25px;width:3.40px;height:0.50px;background:#2a2c2f;"></div><span class="t" style="left:241.36px;top:390.00px;font-size:3.2px;color:#383b3e;font-weight:bold;width:15.20px;text-align:center;">50</span><div style="left:242.76px;top:390.25px;width:3.40px;height:0.50px;background:#2a2c2f;"></div><div style="left:251.76px;top:390.25px;width:3.40px;height:0.50px;background:#2a2c2f;"></div><div style="left:222.86px;top:307.00px;width:9.40px;height:18.40px;background:linear-gradient(#f4fafe 0%,#f4fafe 9%,#5aaee8 13%,#86c6f1 44%,#2c4a5e 47%,#2c4a5e 52%,#c6e3f7 56%,#e4f2fb 86%,#ffffff 92%,#ffffff 100%);border-radius:1.2px;border:0.5px solid #15212b;box-shadow:0 0.6px 1px rgba(0,0,0,0.6);"></div><div style="left:220.56px;top:401.20px;width:37.52px;height:11.20px;background:#1e2023;"></div><span class="t" style="left:223.56px;top:404.40px;font-size:6.3px;color:#f0f0f0;font-weight:bold;">0.00</span><span class="t" style="left:240.76px;top:404.00px;font-size:5.4px;color:#8a8d91;font-weight:normal;width:16.50px;text-align:center;">-&#8734;</span><div style="left:221.36px;top:413.40px;width:36.40px;height:12.00px;background:#1c2026;border-radius:1.4px 1.4px 0 0;"></div><div style="left:221.66px;top:413.80px;width:17.20px;height:11.40px;background:linear-gradient(#536277,#3a4759);border-radius:1px 0 0 0;"></div><div style="left:239.86px;top:413.80px;width:17.60px;height:11.40px;background:linear-gradient(#536277,#3a4759);border-radius:0 1px 0 0;"></div><span class="t" style="left:221.66px;top:418.00px;font-size:4.4px;color:#1b2129;font-weight:bold;width:17.30px;text-align:center;">R</span><span class="t" style="left:239.86px;top:418.00px;font-size:4.4px;color:#1b2129;font-weight:bold;width:17.60px;text-align:center;">W</span><div style="left:295.90px;top:287.00px;width:0.60px;height:114.00px;background:#292c2f;"></div><div style="left:267.08px;top:290.00px;width:12.00px;height:108.00px;background:#2f3236;"></div><div style="left:259.18px;top:245.60px;width:36.60px;height:15.40px;background:#000;border-radius:1px;"></div><div style="left:276.58px;top:246.00px;width:1.90px;height:9.60px;background:linear-gradient(#d4e8f5,#86aac1);border-radius:0.6px;"></div><span class="t" style="left:259.18px;top:257.00px;font-size:4.0px;color:#f0f0f0;font-weight:bold;width:36.60px;text-align:center;">C</span><div style="left:259.28px;top:264.20px;width:36.40px;height:20.40px;background:#1c2026;border-radius:1.4px;"></div><div style="left:259.58px;top:264.50px;width:17.20px;height:9.60px;background:linear-gradient(#5c6b81,#465467);border-radius:1px 0 0 0;"></div><div style="left:277.78px;top:264.50px;width:17.60px;height:9.60px;background:linear-gradient(#5c6b81,#465467);border-radius:0 1px 0 0;"></div><div style="left:259.58px;top:274.80px;width:17.20px;height:9.50px;background:linear-gradient(#505f74,#3c495b);border-radius:0 0 0 1px;"></div><div style="left:277.78px;top:274.80px;width:17.60px;height:9.50px;background:linear-gradient(#505f74,#3c495b);border-radius:0 0 1px 0;"></div><span class="t" style="left:259.58px;top:268.00px;font-size:4.4px;color:#1b2129;font-weight:bold;width:17.30px;text-align:center;">M</span><span class="t" style="left:277.78px;top:268.00px;font-size:4.4px;color:#1b2129;font-weight:bold;width:17.60px;text-align:center;">S</span><span class="t" style="left:259.58px;top:278.00px;font-size:4.4px;color:#4d5b70;font-weight:normal;width:17.30px;text-align:center;">L</span><svg style="left:284.08px;top:277px" width="5" height="5" viewBox="0 0 5 5"><g fill="none" stroke="#161a20" stroke-width="0.9"><path d="M3.9 1.6 A1.6 1.6 0 1 0 4 3.4"/><path d="M2 2.5 L4.2 2.5"/></g></svg><div style="left:265.18px;top:293.40px;width:1.30px;height:104.00px;background:#17191b;border-radius:0.6px;"></div><div style="left:267.48px;top:296.25px;width:4.20px;height:0.50px;background:#5f6266;"></div><span class="t" style="left:268.58px;top:296.00px;font-size:3.4px;color:#b4b6b9;font-weight:bold;width:8.00px;text-align:right;">6</span><div style="left:267.48px;top:315.25px;width:4.20px;height:0.50px;background:#5f6266;"></div><span class="t" style="left:268.58px;top:315.00px;font-size:3.4px;color:#b4b6b9;font-weight:bold;width:8.00px;text-align:right;">0</span><div style="left:267.48px;top:333.25px;width:4.20px;height:0.50px;background:#5f6266;"></div><span class="t" style="left:268.58px;top:333.00px;font-size:3.4px;color:#b4b6b9;font-weight:bold;width:8.00px;text-align:right;">5</span><div style="left:267.48px;top:347.25px;width:4.20px;height:0.50px;background:#5f6266;"></div><span class="t" style="left:268.58px;top:347.00px;font-size:3.4px;color:#b4b6b9;font-weight:bold;width:8.00px;text-align:right;">10</span><div style="left:267.48px;top:357.25px;width:4.20px;height:0.50px;background:#5f6266;"></div><span class="t" style="left:268.58px;top:357.00px;font-size:3.4px;color:#b4b6b9;font-weight:bold;width:8.00px;text-align:right;">15</span><div style="left:267.48px;top:365.25px;width:4.20px;height:0.50px;background:#5f6266;"></div><span class="t" style="left:268.58px;top:365.00px;font-size:3.4px;color:#b4b6b9;font-weight:bold;width:8.00px;text-align:right;">20</span><div style="left:267.48px;top:376.25px;width:4.20px;height:0.50px;background:#5f6266;"></div><span class="t" style="left:268.58px;top:376.00px;font-size:3.4px;color:#b4b6b9;font-weight:bold;width:8.00px;text-align:right;">30</span><div style="left:267.48px;top:382.25px;width:4.20px;height:0.50px;background:#5f6266;"></div><span class="t" style="left:268.58px;top:382.00px;font-size:3.4px;color:#b4b6b9;font-weight:bold;width:8.00px;text-align:right;">40</span><div style="left:268.08px;top:385.40px;width:3.80px;height:1.30px;background:#4c4f53;"></div><div style="left:267.48px;top:389.30px;width:4.20px;height:0.50px;background:#5f6266;"></div><span class="t" style="left:270.58px;top:386.00px;font-size:5.2px;color:#b4b6b9;font-weight:bold;width:6.40px;text-align:right;">&#8734;</span><div style="left:279.28px;top:288.80px;width:15.20px;height:109.40px;background:#040404;border:0.6px solid #45484c;border-radius:1.6px;"></div><div style="left:279.88px;top:289.40px;width:14.00px;height:6.20px;background:linear-gradient(#222426,#0a0a0a);border-radius:1.2px 1.2px 0 0;"></div><div style="left:279.88px;top:388.60px;width:14.00px;height:9.00px;background:linear-gradient(#040404,#2c2e30);border-radius:0 0 1.2px 1.2px;"></div><span class="t" style="left:279.28px;top:296.00px;font-size:3.2px;color:#383b3e;font-weight:bold;width:15.20px;text-align:center;">0</span><div style="left:280.68px;top:296.25px;width:3.40px;height:0.50px;background:#2a2c2f;"></div><div style="left:289.68px;top:296.25px;width:3.40px;height:0.50px;background:#2a2c2f;"></div><span class="t" style="left:279.28px;top:310.00px;font-size:3.2px;color:#383b3e;font-weight:bold;width:15.20px;text-align:center;">6</span><div style="left:280.68px;top:310.25px;width:3.40px;height:0.50px;background:#2a2c2f;"></div><div style="left:289.68px;top:310.25px;width:3.40px;height:0.50px;background:#2a2c2f;"></div><span class="t" style="left:279.28px;top:324.00px;font-size:3.2px;color:#383b3e;font-weight:bold;width:15.20px;text-align:center;">12</span><div style="left:280.68px;top:324.25px;width:3.40px;height:0.50px;background:#2a2c2f;"></div><div style="left:289.68px;top:324.25px;width:3.40px;height:0.50px;background:#2a2c2f;"></div><span class="t" style="left:279.28px;top:337.00px;font-size:3.2px;color:#383b3e;font-weight:bold;width:15.20px;text-align:center;">18</span><div style="left:280.68px;top:337.25px;width:3.40px;height:0.50px;background:#2a2c2f;"></div><div style="left:289.68px;top:337.25px;width:3.40px;height:0.50px;background:#2a2c2f;"></div><span class="t" style="left:279.28px;top:351.00px;font-size:3.2px;color:#383b3e;font-weight:bold;width:15.20px;text-align:center;">24</span><div style="left:280.68px;top:351.25px;width:3.40px;height:0.50px;background:#2a2c2f;"></div><div style="left:289.68px;top:351.25px;width:3.40px;height:0.50px;background:#2a2c2f;"></div><span class="t" style="left:279.28px;top:362.00px;font-size:3.2px;color:#383b3e;font-weight:bold;width:15.20px;text-align:center;">30</span><div style="left:280.68px;top:362.25px;width:3.40px;height:0.50px;background:#2a2c2f;"></div><div style="left:289.68px;top:362.25px;width:3.40px;height:0.50px;background:#2a2c2f;"></div><span class="t" style="left:279.28px;top:378.00px;font-size:3.2px;color:#383b3e;font-weight:bold;width:15.20px;text-align:center;">40</span><div style="left:280.68px;top:378.25px;width:3.40px;height:0.50px;background:#2a2c2f;"></div><div style="left:289.68px;top:378.25px;width:3.40px;height:0.50px;background:#2a2c2f;"></div><span class="t" style="left:279.28px;top:390.00px;font-size:3.2px;color:#383b3e;font-weight:bold;width:15.20px;text-align:center;">50</span><div style="left:280.68px;top:390.25px;width:3.40px;height:0.50px;background:#2a2c2f;"></div><div style="left:289.68px;top:390.25px;width:3.40px;height:0.50px;background:#2a2c2f;"></div><div style="left:280.98px;top:327.60px;width:11.95px;height:69.20px;background:linear-gradient(#34f29e 0%,#30f0a6 28%,#2ae6bc 48%,#25dad4 66%,#20cbec 85%,#1ec3f6 100%) 0 -38.60px / 100% 108px no-repeat;"></div><div style="left:286.73px;top:327.60px;width:0.50px;height:69.20px;background:rgba(5,40,45,0.75);"></div><div style="left:280.98px;top:337.20px;width:11.90px;height:0.60px;background:rgba(8,70,80,0.38);"></div><div style="left:280.98px;top:350.70px;width:11.90px;height:0.60px;background:rgba(8,70,80,0.38);"></div><div style="left:280.98px;top:361.95px;width:11.90px;height:0.60px;background:rgba(8,70,80,0.38);"></div><div style="left:280.98px;top:378.45px;width:11.90px;height:0.60px;background:rgba(8,70,80,0.38);"></div><div style="left:280.98px;top:389.70px;width:11.90px;height:0.60px;background:rgba(8,70,80,0.38);"></div><div style="left:260.78px;top:307.00px;width:9.40px;height:18.40px;background:linear-gradient(#f4fafe 0%,#f4fafe 9%,#5aaee8 13%,#86c6f1 44%,#2c4a5e 47%,#2c4a5e 52%,#c6e3f7 56%,#e4f2fb 86%,#ffffff 92%,#ffffff 100%);border-radius:1.2px;border:0.5px solid #15212b;box-shadow:0 0.6px 1px rgba(0,0,0,0.6);"></div><div style="left:258.48px;top:401.20px;width:37.52px;height:11.20px;background:#1e2023;"></div><span class="t" style="left:261.48px;top:404.40px;font-size:6.3px;color:#f0f0f0;font-weight:bold;">0.00</span><span class="t" style="left:278.68px;top:405.20px;font-size:3.9px;color:#8a8d91;font-weight:normal;width:16.50px;text-align:center;">-11.8</span><div style="left:259.28px;top:413.40px;width:36.40px;height:12.00px;background:#1c2026;border-radius:1.4px 1.4px 0 0;"></div><div style="left:259.58px;top:413.80px;width:17.20px;height:11.40px;background:linear-gradient(#536277,#3a4759);border-radius:1px 0 0 0;"></div><div style="left:277.78px;top:413.80px;width:17.60px;height:11.40px;background:linear-gradient(#536277,#3a4759);border-radius:0 1px 0 0;"></div><span class="t" style="left:259.58px;top:418.00px;font-size:4.4px;color:#1b2129;font-weight:bold;width:17.30px;text-align:center;">R</span><span class="t" style="left:277.78px;top:418.00px;font-size:4.4px;color:#1b2129;font-weight:bold;width:17.60px;text-align:center;">W</span><div style="left:333.82px;top:287.00px;width:0.60px;height:114.00px;background:#292c2f;"></div><div style="left:305.00px;top:290.00px;width:12.00px;height:108.00px;background:#2f3236;"></div><div style="left:297.10px;top:245.60px;width:36.60px;height:15.40px;background:#000;border-radius:1px;"></div><div style="left:314.50px;top:246.00px;width:1.90px;height:9.60px;background:linear-gradient(#d4e8f5,#86aac1);border-radius:0.6px;"></div><span class="t" style="left:297.10px;top:257.00px;font-size:4.0px;color:#f0f0f0;font-weight:bold;width:36.60px;text-align:center;">C</span><div style="left:297.20px;top:264.20px;width:36.40px;height:20.40px;background:#1c2026;border-radius:1.4px;"></div><div style="left:297.50px;top:264.50px;width:17.20px;height:9.60px;background:linear-gradient(#5c6b81,#465467);border-radius:1px 0 0 0;"></div><div style="left:315.70px;top:264.50px;width:17.60px;height:9.60px;background:linear-gradient(#5c6b81,#465467);border-radius:0 1px 0 0;"></div><div style="left:297.50px;top:274.80px;width:17.20px;height:9.50px;background:linear-gradient(#505f74,#3c495b);border-radius:0 0 0 1px;"></div><div style="left:315.70px;top:274.80px;width:17.60px;height:9.50px;background:linear-gradient(#505f74,#3c495b);border-radius:0 0 1px 0;"></div><span class="t" style="left:297.50px;top:268.00px;font-size:4.4px;color:#1b2129;font-weight:bold;width:17.30px;text-align:center;">M</span><span class="t" style="left:315.70px;top:268.00px;font-size:4.4px;color:#1b2129;font-weight:bold;width:17.60px;text-align:center;">S</span><span class="t" style="left:297.50px;top:278.00px;font-size:4.4px;color:#4d5b70;font-weight:normal;width:17.30px;text-align:center;">L</span><svg style="left:322.00px;top:277px" width="5" height="5" viewBox="0 0 5 5"><g fill="none" stroke="#161a20" stroke-width="0.9"><path d="M3.9 1.6 A1.6 1.6 0 1 0 4 3.4"/><path d="M2 2.5 L4.2 2.5"/></g></svg><div style="left:303.10px;top:293.40px;width:1.30px;height:104.00px;background:#17191b;border-radius:0.6px;"></div><div style="left:305.40px;top:296.25px;width:4.20px;height:0.50px;background:#5f6266;"></div><span class="t" style="left:306.50px;top:296.00px;font-size:3.4px;color:#b4b6b9;font-weight:bold;width:8.00px;text-align:right;">6</span><div style="left:305.40px;top:315.25px;width:4.20px;height:0.50px;background:#5f6266;"></div><span class="t" style="left:306.50px;top:315.00px;font-size:3.4px;color:#b4b6b9;font-weight:bold;width:8.00px;text-align:right;">0</span><div style="left:305.40px;top:333.25px;width:4.20px;height:0.50px;background:#5f6266;"></div><span class="t" style="left:306.50px;top:333.00px;font-size:3.4px;color:#b4b6b9;font-weight:bold;width:8.00px;text-align:right;">5</span><div style="left:305.40px;top:347.25px;width:4.20px;height:0.50px;background:#5f6266;"></div><span class="t" style="left:306.50px;top:347.00px;font-size:3.4px;color:#b4b6b9;font-weight:bold;width:8.00px;text-align:right;">10</span><div style="left:305.40px;top:357.25px;width:4.20px;height:0.50px;background:#5f6266;"></div><span class="t" style="left:306.50px;top:357.00px;font-size:3.4px;color:#b4b6b9;font-weight:bold;width:8.00px;text-align:right;">15</span><div style="left:305.40px;top:365.25px;width:4.20px;height:0.50px;background:#5f6266;"></div><span class="t" style="left:306.50px;top:365.00px;font-size:3.4px;color:#b4b6b9;font-weight:bold;width:8.00px;text-align:right;">20</span><div style="left:305.40px;top:376.25px;width:4.20px;height:0.50px;background:#5f6266;"></div><span class="t" style="left:306.50px;top:376.00px;font-size:3.4px;color:#b4b6b9;font-weight:bold;width:8.00px;text-align:right;">30</span><div style="left:305.40px;top:382.25px;width:4.20px;height:0.50px;background:#5f6266;"></div><span class="t" style="left:306.50px;top:382.00px;font-size:3.4px;color:#b4b6b9;font-weight:bold;width:8.00px;text-align:right;">40</span><div style="left:306.00px;top:385.40px;width:3.80px;height:1.30px;background:#4c4f53;"></div><div style="left:305.40px;top:389.30px;width:4.20px;height:0.50px;background:#5f6266;"></div><span class="t" style="left:308.50px;top:386.00px;font-size:5.2px;color:#b4b6b9;font-weight:bold;width:6.40px;text-align:right;">&#8734;</span><div style="left:317.20px;top:288.80px;width:15.20px;height:109.40px;background:#040404;border:0.6px solid #45484c;border-radius:1.6px;"></div><div style="left:317.80px;top:289.40px;width:14.00px;height:6.20px;background:linear-gradient(#222426,#0a0a0a);border-radius:1.2px 1.2px 0 0;"></div><div style="left:317.80px;top:388.60px;width:14.00px;height:9.00px;background:linear-gradient(#040404,#2c2e30);border-radius:0 0 1.2px 1.2px;"></div><span class="t" style="left:317.20px;top:296.00px;font-size:3.2px;color:#383b3e;font-weight:bold;width:15.20px;text-align:center;">0</span><div style="left:318.60px;top:296.25px;width:3.40px;height:0.50px;background:#2a2c2f;"></div><div style="left:327.60px;top:296.25px;width:3.40px;height:0.50px;background:#2a2c2f;"></div><span class="t" style="left:317.20px;top:310.00px;font-size:3.2px;color:#383b3e;font-weight:bold;width:15.20px;text-align:center;">6</span><div style="left:318.60px;top:310.25px;width:3.40px;height:0.50px;background:#2a2c2f;"></div><div style="left:327.60px;top:310.25px;width:3.40px;height:0.50px;background:#2a2c2f;"></div><span class="t" style="left:317.20px;top:324.00px;font-size:3.2px;color:#383b3e;font-weight:bold;width:15.20px;text-align:center;">12</span><div style="left:318.60px;top:324.25px;width:3.40px;height:0.50px;background:#2a2c2f;"></div><div style="left:327.60px;top:324.25px;width:3.40px;height:0.50px;background:#2a2c2f;"></div><span class="t" style="left:317.20px;top:337.00px;font-size:3.2px;color:#383b3e;font-weight:bold;width:15.20px;text-align:center;">18</span><div style="left:318.60px;top:337.25px;width:3.40px;height:0.50px;background:#2a2c2f;"></div><div style="left:327.60px;top:337.25px;width:3.40px;height:0.50px;background:#2a2c2f;"></div><span class="t" style="left:317.20px;top:351.00px;font-size:3.2px;color:#383b3e;font-weight:bold;width:15.20px;text-align:center;">24</span><div style="left:318.60px;top:351.25px;width:3.40px;height:0.50px;background:#2a2c2f;"></div><div style="left:327.60px;top:351.25px;width:3.40px;height:0.50px;background:#2a2c2f;"></div><span class="t" style="left:317.20px;top:362.00px;font-size:3.2px;color:#383b3e;font-weight:bold;width:15.20px;text-align:center;">30</span><div style="left:318.60px;top:362.25px;width:3.40px;height:0.50px;background:#2a2c2f;"></div><div style="left:327.60px;top:362.25px;width:3.40px;height:0.50px;background:#2a2c2f;"></div><span class="t" style="left:317.20px;top:378.00px;font-size:3.2px;color:#383b3e;font-weight:bold;width:15.20px;text-align:center;">40</span><div style="left:318.60px;top:378.25px;width:3.40px;height:0.50px;background:#2a2c2f;"></div><div style="left:327.60px;top:378.25px;width:3.40px;height:0.50px;background:#2a2c2f;"></div><span class="t" style="left:317.20px;top:390.00px;font-size:3.2px;color:#383b3e;font-weight:bold;width:15.20px;text-align:center;">50</span><div style="left:318.60px;top:390.25px;width:3.40px;height:0.50px;background:#2a2c2f;"></div><div style="left:327.60px;top:390.25px;width:3.40px;height:0.50px;background:#2a2c2f;"></div><div style="left:318.90px;top:325.00px;width:11.95px;height:71.80px;background:linear-gradient(#34f29e 0%,#30f0a6 28%,#2ae6bc 48%,#25dad4 66%,#20cbec 85%,#1ec3f6 100%) 0 -36.00px / 100% 108px no-repeat;"></div><div style="left:324.65px;top:325.00px;width:0.50px;height:71.80px;background:rgba(5,40,45,0.75);"></div><div style="left:318.90px;top:337.20px;width:11.90px;height:0.60px;background:rgba(8,70,80,0.38);"></div><div style="left:318.90px;top:350.70px;width:11.90px;height:0.60px;background:rgba(8,70,80,0.38);"></div><div style="left:318.90px;top:361.95px;width:11.90px;height:0.60px;background:rgba(8,70,80,0.38);"></div><div style="left:318.90px;top:378.45px;width:11.90px;height:0.60px;background:rgba(8,70,80,0.38);"></div><div style="left:318.90px;top:389.70px;width:11.90px;height:0.60px;background:rgba(8,70,80,0.38);"></div><div style="left:298.70px;top:307.00px;width:9.40px;height:18.40px;background:linear-gradient(#f4fafe 0%,#f4fafe 9%,#5aaee8 13%,#86c6f1 44%,#2c4a5e 47%,#2c4a5e 52%,#c6e3f7 56%,#e4f2fb 86%,#ffffff 92%,#ffffff 100%);border-radius:1.2px;border:0.5px solid #15212b;box-shadow:0 0.6px 1px rgba(0,0,0,0.6);"></div><div style="left:296.40px;top:401.20px;width:37.52px;height:11.20px;background:#1e2023;"></div><span class="t" style="left:299.40px;top:404.40px;font-size:6.3px;color:#f0f0f0;font-weight:bold;">0.00</span><span class="t" style="left:316.60px;top:405.20px;font-size:3.9px;color:#8a8d91;font-weight:normal;width:16.50px;text-align:center;">-12.1</span><div style="left:297.20px;top:413.40px;width:36.40px;height:12.00px;background:#1c2026;border-radius:1.4px 1.4px 0 0;"></div><div style="left:297.50px;top:413.80px;width:17.20px;height:11.40px;background:linear-gradient(#536277,#3a4759);border-radius:1px 0 0 0;"></div><div style="left:315.70px;top:413.80px;width:17.60px;height:11.40px;background:linear-gradient(#536277,#3a4759);border-radius:0 1px 0 0;"></div><span class="t" style="left:297.50px;top:418.00px;font-size:4.4px;color:#1b2129;font-weight:bold;width:17.30px;text-align:center;">R</span><span class="t" style="left:315.70px;top:418.00px;font-size:4.4px;color:#1b2129;font-weight:bold;width:17.60px;text-align:center;">W</span><div style="left:371.74px;top:287.00px;width:0.60px;height:114.00px;background:#292c2f;"></div><div style="left:342.92px;top:290.00px;width:12.00px;height:108.00px;background:#2f3236;"></div><div style="left:335.02px;top:245.60px;width:36.60px;height:15.40px;background:#000;border-radius:1px;"></div><div style="left:352.42px;top:246.00px;width:1.90px;height:9.60px;background:linear-gradient(#d4e8f5,#86aac1);border-radius:0.6px;"></div><span class="t" style="left:335.02px;top:257.00px;font-size:4.0px;color:#f0f0f0;font-weight:bold;width:36.60px;text-align:center;">C</span><div style="left:335.12px;top:264.20px;width:36.40px;height:20.40px;background:#1c2026;border-radius:1.4px;"></div><div style="left:335.42px;top:264.50px;width:17.20px;height:9.60px;background:linear-gradient(#5c6b81,#465467);border-radius:1px 0 0 0;"></div><div style="left:353.62px;top:264.50px;width:17.60px;height:9.60px;background:linear-gradient(#5c6b81,#465467);border-radius:0 1px 0 0;"></div><div style="left:335.42px;top:274.80px;width:17.20px;height:9.50px;background:linear-gradient(#505f74,#3c495b);border-radius:0 0 0 1px;"></div><div style="left:353.62px;top:274.80px;width:17.60px;height:9.50px;background:linear-gradient(#505f74,#3c495b);border-radius:0 0 1px 0;"></div><span class="t" style="left:335.42px;top:268.00px;font-size:4.4px;color:#1b2129;font-weight:bold;width:17.30px;text-align:center;">M</span><span class="t" style="left:353.62px;top:268.00px;font-size:4.4px;color:#1b2129;font-weight:bold;width:17.60px;text-align:center;">S</span><span class="t" style="left:335.42px;top:278.00px;font-size:4.4px;color:#4d5b70;font-weight:normal;width:17.30px;text-align:center;">L</span><svg style="left:359.92px;top:277px" width="5" height="5" viewBox="0 0 5 5"><g fill="none" stroke="#161a20" stroke-width="0.9"><path d="M3.9 1.6 A1.6 1.6 0 1 0 4 3.4"/><path d="M2 2.5 L4.2 2.5"/></g></svg><div style="left:341.02px;top:293.40px;width:1.30px;height:104.00px;background:#17191b;border-radius:0.6px;"></div><div style="left:343.32px;top:296.25px;width:4.20px;height:0.50px;background:#5f6266;"></div><span class="t" style="left:344.42px;top:296.00px;font-size:3.4px;color:#b4b6b9;font-weight:bold;width:8.00px;text-align:right;">6</span><div style="left:343.32px;top:315.25px;width:4.20px;height:0.50px;background:#5f6266;"></div><span class="t" style="left:344.42px;top:315.00px;font-size:3.4px;color:#b4b6b9;font-weight:bold;width:8.00px;text-align:right;">0</span><div style="left:343.32px;top:333.25px;width:4.20px;height:0.50px;background:#5f6266;"></div><span class="t" style="left:344.42px;top:333.00px;font-size:3.4px;color:#b4b6b9;font-weight:bold;width:8.00px;text-align:right;">5</span><div style="left:343.32px;top:347.25px;width:4.20px;height:0.50px;background:#5f6266;"></div><span class="t" style="left:344.42px;top:347.00px;font-size:3.4px;color:#b4b6b9;font-weight:bold;width:8.00px;text-align:right;">10</span><div style="left:343.32px;top:357.25px;width:4.20px;height:0.50px;background:#5f6266;"></div><span class="t" style="left:344.42px;top:357.00px;font-size:3.4px;color:#b4b6b9;font-weight:bold;width:8.00px;text-align:right;">15</span><div style="left:343.32px;top:365.25px;width:4.20px;height:0.50px;background:#5f6266;"></div><span class="t" style="left:344.42px;top:365.00px;font-size:3.4px;color:#b4b6b9;font-weight:bold;width:8.00px;text-align:right;">20</span><div style="left:343.32px;top:376.25px;width:4.20px;height:0.50px;background:#5f6266;"></div><span class="t" style="left:344.42px;top:376.00px;font-size:3.4px;color:#b4b6b9;font-weight:bold;width:8.00px;text-align:right;">30</span><div style="left:343.32px;top:382.25px;width:4.20px;height:0.50px;background:#5f6266;"></div><span class="t" style="left:344.42px;top:382.00px;font-size:3.4px;color:#b4b6b9;font-weight:bold;width:8.00px;text-align:right;">40</span><div style="left:343.92px;top:385.40px;width:3.80px;height:1.30px;background:#4c4f53;"></div><div style="left:343.32px;top:389.30px;width:4.20px;height:0.50px;background:#5f6266;"></div><span class="t" style="left:346.42px;top:386.00px;font-size:5.2px;color:#b4b6b9;font-weight:bold;width:6.40px;text-align:right;">&#8734;</span><div style="left:355.12px;top:288.80px;width:15.20px;height:109.40px;background:#040404;border:0.6px solid #45484c;border-radius:1.6px;"></div><div style="left:355.72px;top:289.40px;width:14.00px;height:6.20px;background:linear-gradient(#222426,#0a0a0a);border-radius:1.2px 1.2px 0 0;"></div><div style="left:355.72px;top:388.60px;width:14.00px;height:9.00px;background:linear-gradient(#040404,#2c2e30);border-radius:0 0 1.2px 1.2px;"></div><span class="t" style="left:355.12px;top:296.00px;font-size:3.2px;color:#383b3e;font-weight:bold;width:15.20px;text-align:center;">0</span><div style="left:356.52px;top:296.25px;width:3.40px;height:0.50px;background:#2a2c2f;"></div><div style="left:365.52px;top:296.25px;width:3.40px;height:0.50px;background:#2a2c2f;"></div><span class="t" style="left:355.12px;top:310.00px;font-size:3.2px;color:#383b3e;font-weight:bold;width:15.20px;text-align:center;">6</span><div style="left:356.52px;top:310.25px;width:3.40px;height:0.50px;background:#2a2c2f;"></div><div style="left:365.52px;top:310.25px;width:3.40px;height:0.50px;background:#2a2c2f;"></div><span class="t" style="left:355.12px;top:324.00px;font-size:3.2px;color:#383b3e;font-weight:bold;width:15.20px;text-align:center;">12</span><div style="left:356.52px;top:324.25px;width:3.40px;height:0.50px;background:#2a2c2f;"></div><div style="left:365.52px;top:324.25px;width:3.40px;height:0.50px;background:#2a2c2f;"></div><span class="t" style="left:355.12px;top:337.00px;font-size:3.2px;color:#383b3e;font-weight:bold;width:15.20px;text-align:center;">18</span><div style="left:356.52px;top:337.25px;width:3.40px;height:0.50px;background:#2a2c2f;"></div><div style="left:365.52px;top:337.25px;width:3.40px;height:0.50px;background:#2a2c2f;"></div><span class="t" style="left:355.12px;top:351.00px;font-size:3.2px;color:#383b3e;font-weight:bold;width:15.20px;text-align:center;">24</span><div style="left:356.52px;top:351.25px;width:3.40px;height:0.50px;background:#2a2c2f;"></div><div style="left:365.52px;top:351.25px;width:3.40px;height:0.50px;background:#2a2c2f;"></div><span class="t" style="left:355.12px;top:362.00px;font-size:3.2px;color:#383b3e;font-weight:bold;width:15.20px;text-align:center;">30</span><div style="left:356.52px;top:362.25px;width:3.40px;height:0.50px;background:#2a2c2f;"></div><div style="left:365.52px;top:362.25px;width:3.40px;height:0.50px;background:#2a2c2f;"></div><span class="t" style="left:355.12px;top:378.00px;font-size:3.2px;color:#383b3e;font-weight:bold;width:15.20px;text-align:center;">40</span><div style="left:356.52px;top:378.25px;width:3.40px;height:0.50px;background:#2a2c2f;"></div><div style="left:365.52px;top:378.25px;width:3.40px;height:0.50px;background:#2a2c2f;"></div><span class="t" style="left:355.12px;top:390.00px;font-size:3.2px;color:#383b3e;font-weight:bold;width:15.20px;text-align:center;">50</span><div style="left:356.52px;top:390.25px;width:3.40px;height:0.50px;background:#2a2c2f;"></div><div style="left:365.52px;top:390.25px;width:3.40px;height:0.50px;background:#2a2c2f;"></div><div style="left:356.82px;top:327.60px;width:11.95px;height:69.20px;background:linear-gradient(#34f29e 0%,#30f0a6 28%,#2ae6bc 48%,#25dad4 66%,#20cbec 85%,#1ec3f6 100%) 0 -38.60px / 100% 108px no-repeat;"></div><div style="left:362.57px;top:327.60px;width:0.50px;height:69.20px;background:rgba(5,40,45,0.75);"></div><div style="left:356.82px;top:337.20px;width:11.90px;height:0.60px;background:rgba(8,70,80,0.38);"></div><div style="left:356.82px;top:350.70px;width:11.90px;height:0.60px;background:rgba(8,70,80,0.38);"></div><div style="left:356.82px;top:361.95px;width:11.90px;height:0.60px;background:rgba(8,70,80,0.38);"></div><div style="left:356.82px;top:378.45px;width:11.90px;height:0.60px;background:rgba(8,70,80,0.38);"></div><div style="left:356.82px;top:389.70px;width:11.90px;height:0.60px;background:rgba(8,70,80,0.38);"></div><div style="left:336.62px;top:307.00px;width:9.40px;height:18.40px;background:linear-gradient(#f4fafe 0%,#f4fafe 9%,#5aaee8 13%,#86c6f1 44%,#2c4a5e 47%,#2c4a5e 52%,#c6e3f7 56%,#e4f2fb 86%,#ffffff 92%,#ffffff 100%);border-radius:1.2px;border:0.5px solid #15212b;box-shadow:0 0.6px 1px rgba(0,0,0,0.6);"></div><div style="left:334.32px;top:401.20px;width:37.52px;height:11.20px;background:#1e2023;"></div><span class="t" style="left:337.32px;top:404.40px;font-size:6.3px;color:#f0f0f0;font-weight:bold;">0.00</span><span class="t" style="left:354.52px;top:405.20px;font-size:3.9px;color:#8a8d91;font-weight:normal;width:16.50px;text-align:center;">-8.8</span><div style="left:335.12px;top:413.40px;width:36.40px;height:12.00px;background:#1c2026;border-radius:1.4px 1.4px 0 0;"></div><div style="left:335.42px;top:413.80px;width:17.20px;height:11.40px;background:linear-gradient(#536277,#3a4759);border-radius:1px 0 0 0;"></div><div style="left:353.62px;top:413.80px;width:17.60px;height:11.40px;background:linear-gradient(#536277,#3a4759);border-radius:0 1px 0 0;"></div><span class="t" style="left:335.42px;top:418.00px;font-size:4.4px;color:#1b2129;font-weight:bold;width:17.30px;text-align:center;">R</span><span class="t" style="left:353.62px;top:418.00px;font-size:4.4px;color:#1b2129;font-weight:bold;width:17.60px;text-align:center;">W</span><div style="left:409.66px;top:287.00px;width:0.60px;height:114.00px;background:#292c2f;"></div><div style="left:380.84px;top:290.00px;width:12.00px;height:108.00px;background:#2f3236;"></div><div style="left:372.94px;top:245.60px;width:36.60px;height:15.40px;background:#000;border-radius:1px;"></div><div style="left:390.34px;top:246.00px;width:1.90px;height:9.60px;background:linear-gradient(#d4e8f5,#86aac1);border-radius:0.6px;"></div><span class="t" style="left:372.94px;top:257.00px;font-size:4.0px;color:#f0f0f0;font-weight:bold;width:36.60px;text-align:center;">C</span><div style="left:373.04px;top:264.20px;width:36.40px;height:20.40px;background:#1c2026;border-radius:1.4px;"></div><div style="left:373.34px;top:264.50px;width:17.20px;height:9.60px;background:linear-gradient(#5c6b81,#465467);border-radius:1px 0 0 0;"></div><div style="left:391.54px;top:264.50px;width:17.60px;height:9.60px;background:linear-gradient(#5c6b81,#465467);border-radius:0 1px 0 0;"></div><div style="left:373.34px;top:274.80px;width:17.20px;height:9.50px;background:linear-gradient(#505f74,#3c495b);border-radius:0 0 0 1px;"></div><div style="left:391.54px;top:274.80px;width:17.60px;height:9.50px;background:linear-gradient(#505f74,#3c495b);border-radius:0 0 1px 0;"></div><span class="t" style="left:373.34px;top:268.00px;font-size:4.4px;color:#1b2129;font-weight:bold;width:17.30px;text-align:center;">M</span><span class="t" style="left:391.54px;top:268.00px;font-size:4.4px;color:#1b2129;font-weight:bold;width:17.60px;text-align:center;">S</span><span class="t" style="left:373.34px;top:278.00px;font-size:4.4px;color:#4d5b70;font-weight:normal;width:17.30px;text-align:center;">L</span><svg style="left:397.84px;top:277px" width="5" height="5" viewBox="0 0 5 5"><g fill="none" stroke="#161a20" stroke-width="0.9"><path d="M3.9 1.6 A1.6 1.6 0 1 0 4 3.4"/><path d="M2 2.5 L4.2 2.5"/></g></svg><div style="left:378.94px;top:293.40px;width:1.30px;height:104.00px;background:#17191b;border-radius:0.6px;"></div><div style="left:381.24px;top:296.25px;width:4.20px;height:0.50px;background:#5f6266;"></div><span class="t" style="left:382.34px;top:296.00px;font-size:3.4px;color:#b4b6b9;font-weight:bold;width:8.00px;text-align:right;">6</span><div style="left:381.24px;top:315.25px;width:4.20px;height:0.50px;background:#5f6266;"></div><span class="t" style="left:382.34px;top:315.00px;font-size:3.4px;color:#b4b6b9;font-weight:bold;width:8.00px;text-align:right;">0</span><div style="left:381.24px;top:333.25px;width:4.20px;height:0.50px;background:#5f6266;"></div><span class="t" style="left:382.34px;top:333.00px;font-size:3.4px;color:#b4b6b9;font-weight:bold;width:8.00px;text-align:right;">5</span><div style="left:381.24px;top:347.25px;width:4.20px;height:0.50px;background:#5f6266;"></div><span class="t" style="left:382.34px;top:347.00px;font-size:3.4px;color:#b4b6b9;font-weight:bold;width:8.00px;text-align:right;">10</span><div style="left:381.24px;top:357.25px;width:4.20px;height:0.50px;background:#5f6266;"></div><span class="t" style="left:382.34px;top:357.00px;font-size:3.4px;color:#b4b6b9;font-weight:bold;width:8.00px;text-align:right;">15</span><div style="left:381.24px;top:365.25px;width:4.20px;height:0.50px;background:#5f6266;"></div><span class="t" style="left:382.34px;top:365.00px;font-size:3.4px;color:#b4b6b9;font-weight:bold;width:8.00px;text-align:right;">20</span><div style="left:381.24px;top:376.25px;width:4.20px;height:0.50px;background:#5f6266;"></div><span class="t" style="left:382.34px;top:376.00px;font-size:3.4px;color:#b4b6b9;font-weight:bold;width:8.00px;text-align:right;">30</span><div style="left:381.24px;top:382.25px;width:4.20px;height:0.50px;background:#5f6266;"></div><span class="t" style="left:382.34px;top:382.00px;font-size:3.4px;color:#b4b6b9;font-weight:bold;width:8.00px;text-align:right;">40</span><div style="left:381.84px;top:385.40px;width:3.80px;height:1.30px;background:#4c4f53;"></div><div style="left:381.24px;top:389.30px;width:4.20px;height:0.50px;background:#5f6266;"></div><span class="t" style="left:384.34px;top:386.00px;font-size:5.2px;color:#b4b6b9;font-weight:bold;width:6.40px;text-align:right;">&#8734;</span><div style="left:393.04px;top:288.80px;width:15.20px;height:109.40px;background:#040404;border:0.6px solid #45484c;border-radius:1.6px;"></div><div style="left:393.64px;top:289.40px;width:14.00px;height:6.20px;background:linear-gradient(#222426,#0a0a0a);border-radius:1.2px 1.2px 0 0;"></div><div style="left:393.64px;top:388.60px;width:14.00px;height:9.00px;background:linear-gradient(#040404,#2c2e30);border-radius:0 0 1.2px 1.2px;"></div><span class="t" style="left:393.04px;top:296.00px;font-size:3.2px;color:#383b3e;font-weight:bold;width:15.20px;text-align:center;">0</span><div style="left:394.44px;top:296.25px;width:3.40px;height:0.50px;background:#2a2c2f;"></div><div style="left:403.44px;top:296.25px;width:3.40px;height:0.50px;background:#2a2c2f;"></div><span class="t" style="left:393.04px;top:310.00px;font-size:3.2px;color:#383b3e;font-weight:bold;width:15.20px;text-align:center;">6</span><div style="left:394.44px;top:310.25px;width:3.40px;height:0.50px;background:#2a2c2f;"></div><div style="left:403.44px;top:310.25px;width:3.40px;height:0.50px;background:#2a2c2f;"></div><span class="t" style="left:393.04px;top:324.00px;font-size:3.2px;color:#383b3e;font-weight:bold;width:15.20px;text-align:center;">12</span><div style="left:394.44px;top:324.25px;width:3.40px;height:0.50px;background:#2a2c2f;"></div><div style="left:403.44px;top:324.25px;width:3.40px;height:0.50px;background:#2a2c2f;"></div><span class="t" style="left:393.04px;top:337.00px;font-size:3.2px;color:#383b3e;font-weight:bold;width:15.20px;text-align:center;">18</span><div style="left:394.44px;top:337.25px;width:3.40px;height:0.50px;background:#2a2c2f;"></div><div style="left:403.44px;top:337.25px;width:3.40px;height:0.50px;background:#2a2c2f;"></div><span class="t" style="left:393.04px;top:351.00px;font-size:3.2px;color:#383b3e;font-weight:bold;width:15.20px;text-align:center;">24</span><div style="left:394.44px;top:351.25px;width:3.40px;height:0.50px;background:#2a2c2f;"></div><div style="left:403.44px;top:351.25px;width:3.40px;height:0.50px;background:#2a2c2f;"></div><span class="t" style="left:393.04px;top:362.00px;font-size:3.2px;color:#383b3e;font-weight:bold;width:15.20px;text-align:center;">30</span><div style="left:394.44px;top:362.25px;width:3.40px;height:0.50px;background:#2a2c2f;"></div><div style="left:403.44px;top:362.25px;width:3.40px;height:0.50px;background:#2a2c2f;"></div><span class="t" style="left:393.04px;top:378.00px;font-size:3.2px;color:#383b3e;font-weight:bold;width:15.20px;text-align:center;">40</span><div style="left:394.44px;top:378.25px;width:3.40px;height:0.50px;background:#2a2c2f;"></div><div style="left:403.44px;top:378.25px;width:3.40px;height:0.50px;background:#2a2c2f;"></div><span class="t" style="left:393.04px;top:390.00px;font-size:3.2px;color:#383b3e;font-weight:bold;width:15.20px;text-align:center;">50</span><div style="left:394.44px;top:390.25px;width:3.40px;height:0.50px;background:#2a2c2f;"></div><div style="left:403.44px;top:390.25px;width:3.40px;height:0.50px;background:#2a2c2f;"></div><div style="left:394.74px;top:318.00px;width:11.95px;height:78.80px;background:linear-gradient(#34f29e 0%,#30f0a6 28%,#2ae6bc 48%,#25dad4 66%,#20cbec 85%,#1ec3f6 100%) 0 -29.00px / 100% 108px no-repeat;"></div><div style="left:400.49px;top:318.00px;width:0.50px;height:78.80px;background:rgba(5,40,45,0.75);"></div><div style="left:394.74px;top:323.70px;width:11.90px;height:0.60px;background:rgba(8,70,80,0.38);"></div><div style="left:394.74px;top:337.20px;width:11.90px;height:0.60px;background:rgba(8,70,80,0.38);"></div><div style="left:394.74px;top:350.70px;width:11.90px;height:0.60px;background:rgba(8,70,80,0.38);"></div><div style="left:394.74px;top:361.95px;width:11.90px;height:0.60px;background:rgba(8,70,80,0.38);"></div><div style="left:394.74px;top:378.45px;width:11.90px;height:0.60px;background:rgba(8,70,80,0.38);"></div><div style="left:394.74px;top:389.70px;width:11.90px;height:0.60px;background:rgba(8,70,80,0.38);"></div><div style="left:374.54px;top:307.00px;width:9.40px;height:18.40px;background:linear-gradient(#f4fafe 0%,#f4fafe 9%,#5aaee8 13%,#86c6f1 44%,#2c4a5e 47%,#2c4a5e 52%,#c6e3f7 56%,#e4f2fb 86%,#ffffff 92%,#ffffff 100%);border-radius:1.2px;border:0.5px solid #15212b;box-shadow:0 0.6px 1px rgba(0,0,0,0.6);"></div><div style="left:372.24px;top:401.20px;width:37.52px;height:11.20px;background:#1e2023;"></div><span class="t" style="left:375.24px;top:404.40px;font-size:6.3px;color:#f0f0f0;font-weight:bold;">0.00</span><span class="t" style="left:392.44px;top:405.20px;font-size:3.9px;color:#8a8d91;font-weight:normal;width:16.50px;text-align:center;">-8.5</span><div style="left:373.04px;top:413.40px;width:36.40px;height:12.00px;background:#1c2026;border-radius:1.4px 1.4px 0 0;"></div><div style="left:373.34px;top:413.80px;width:17.20px;height:11.40px;background:linear-gradient(#536277,#3a4759);border-radius:1px 0 0 0;"></div><div style="left:391.54px;top:413.80px;width:17.60px;height:11.40px;background:linear-gradient(#536277,#3a4759);border-radius:0 1px 0 0;"></div><span class="t" style="left:373.34px;top:418.00px;font-size:4.4px;color:#1b2129;font-weight:bold;width:17.30px;text-align:center;">R</span><span class="t" style="left:391.54px;top:418.00px;font-size:4.4px;color:#1b2129;font-weight:bold;width:17.60px;text-align:center;">W</span><div style="left:447.58px;top:287.00px;width:0.60px;height:114.00px;background:#292c2f;"></div><div style="left:418.76px;top:290.00px;width:12.00px;height:108.00px;background:#2f3236;"></div><div style="left:410.86px;top:245.60px;width:36.60px;height:15.40px;background:#000;border-radius:1px;"></div><div style="left:428.26px;top:246.00px;width:1.90px;height:9.60px;background:linear-gradient(#d4e8f5,#86aac1);border-radius:0.6px;"></div><span class="t" style="left:410.86px;top:257.00px;font-size:4.0px;color:#f0f0f0;font-weight:bold;width:36.60px;text-align:center;">C</span><div style="left:410.96px;top:264.20px;width:36.40px;height:20.40px;background:#1c2026;border-radius:1.4px;"></div><div style="left:411.26px;top:264.50px;width:17.20px;height:9.60px;background:linear-gradient(#5c6b81,#465467);border-radius:1px 0 0 0;"></div><div style="left:429.46px;top:264.50px;width:17.60px;height:9.60px;background:linear-gradient(#5c6b81,#465467);border-radius:0 1px 0 0;"></div><div style="left:411.26px;top:274.80px;width:17.20px;height:9.50px;background:linear-gradient(#505f74,#3c495b);border-radius:0 0 0 1px;"></div><div style="left:429.46px;top:274.80px;width:17.60px;height:9.50px;background:linear-gradient(#505f74,#3c495b);border-radius:0 0 1px 0;"></div><span class="t" style="left:411.26px;top:268.00px;font-size:4.4px;color:#1b2129;font-weight:bold;width:17.30px;text-align:center;">M</span><span class="t" style="left:429.46px;top:268.00px;font-size:4.4px;color:#1b2129;font-weight:bold;width:17.60px;text-align:center;">S</span><span class="t" style="left:411.26px;top:278.00px;font-size:4.4px;color:#4d5b70;font-weight:normal;width:17.30px;text-align:center;">L</span><svg style="left:435.76px;top:277px" width="5" height="5" viewBox="0 0 5 5"><g fill="none" stroke="#161a20" stroke-width="0.9"><path d="M3.9 1.6 A1.6 1.6 0 1 0 4 3.4"/><path d="M2 2.5 L4.2 2.5"/></g></svg><div style="left:416.86px;top:293.40px;width:1.30px;height:104.00px;background:#17191b;border-radius:0.6px;"></div><div style="left:419.16px;top:296.25px;width:4.20px;height:0.50px;background:#5f6266;"></div><span class="t" style="left:420.26px;top:296.00px;font-size:3.4px;color:#b4b6b9;font-weight:bold;width:8.00px;text-align:right;">6</span><div style="left:419.16px;top:315.25px;width:4.20px;height:0.50px;background:#5f6266;"></div><span class="t" style="left:420.26px;top:315.00px;font-size:3.4px;color:#b4b6b9;font-weight:bold;width:8.00px;text-align:right;">0</span><div style="left:419.16px;top:333.25px;width:4.20px;height:0.50px;background:#5f6266;"></div><span class="t" style="left:420.26px;top:333.00px;font-size:3.4px;color:#b4b6b9;font-weight:bold;width:8.00px;text-align:right;">5</span><div style="left:419.16px;top:347.25px;width:4.20px;height:0.50px;background:#5f6266;"></div><span class="t" style="left:420.26px;top:347.00px;font-size:3.4px;color:#b4b6b9;font-weight:bold;width:8.00px;text-align:right;">10</span><div style="left:419.16px;top:357.25px;width:4.20px;height:0.50px;background:#5f6266;"></div><span class="t" style="left:420.26px;top:357.00px;font-size:3.4px;color:#b4b6b9;font-weight:bold;width:8.00px;text-align:right;">15</span><div style="left:419.16px;top:365.25px;width:4.20px;height:0.50px;background:#5f6266;"></div><span class="t" style="left:420.26px;top:365.00px;font-size:3.4px;color:#b4b6b9;font-weight:bold;width:8.00px;text-align:right;">20</span><div style="left:419.16px;top:376.25px;width:4.20px;height:0.50px;background:#5f6266;"></div><span class="t" style="left:420.26px;top:376.00px;font-size:3.4px;color:#b4b6b9;font-weight:bold;width:8.00px;text-align:right;">30</span><div style="left:419.16px;top:382.25px;width:4.20px;height:0.50px;background:#5f6266;"></div><span class="t" style="left:420.26px;top:382.00px;font-size:3.4px;color:#b4b6b9;font-weight:bold;width:8.00px;text-align:right;">40</span><div style="left:419.76px;top:385.40px;width:3.80px;height:1.30px;background:#4c4f53;"></div><div style="left:419.16px;top:389.30px;width:4.20px;height:0.50px;background:#5f6266;"></div><span class="t" style="left:422.26px;top:386.00px;font-size:5.2px;color:#b4b6b9;font-weight:bold;width:6.40px;text-align:right;">&#8734;</span><div style="left:430.96px;top:288.80px;width:15.20px;height:109.40px;background:#040404;border:0.6px solid #45484c;border-radius:1.6px;"></div><div style="left:431.56px;top:289.40px;width:14.00px;height:6.20px;background:linear-gradient(#222426,#0a0a0a);border-radius:1.2px 1.2px 0 0;"></div><div style="left:431.56px;top:388.60px;width:14.00px;height:9.00px;background:linear-gradient(#040404,#2c2e30);border-radius:0 0 1.2px 1.2px;"></div><span class="t" style="left:430.96px;top:296.00px;font-size:3.2px;color:#383b3e;font-weight:bold;width:15.20px;text-align:center;">0</span><div style="left:432.36px;top:296.25px;width:3.40px;height:0.50px;background:#2a2c2f;"></div><div style="left:441.36px;top:296.25px;width:3.40px;height:0.50px;background:#2a2c2f;"></div><span class="t" style="left:430.96px;top:310.00px;font-size:3.2px;color:#383b3e;font-weight:bold;width:15.20px;text-align:center;">6</span><div style="left:432.36px;top:310.25px;width:3.40px;height:0.50px;background:#2a2c2f;"></div><div style="left:441.36px;top:310.25px;width:3.40px;height:0.50px;background:#2a2c2f;"></div><span class="t" style="left:430.96px;top:324.00px;font-size:3.2px;color:#383b3e;font-weight:bold;width:15.20px;text-align:center;">12</span><div style="left:432.36px;top:324.25px;width:3.40px;height:0.50px;background:#2a2c2f;"></div><div style="left:441.36px;top:324.25px;width:3.40px;height:0.50px;background:#2a2c2f;"></div><span class="t" style="left:430.96px;top:337.00px;font-size:3.2px;color:#383b3e;font-weight:bold;width:15.20px;text-align:center;">18</span><div style="left:432.36px;top:337.25px;width:3.40px;height:0.50px;background:#2a2c2f;"></div><div style="left:441.36px;top:337.25px;width:3.40px;height:0.50px;background:#2a2c2f;"></div><span class="t" style="left:430.96px;top:351.00px;font-size:3.2px;color:#383b3e;font-weight:bold;width:15.20px;text-align:center;">24</span><div style="left:432.36px;top:351.25px;width:3.40px;height:0.50px;background:#2a2c2f;"></div><div style="left:441.36px;top:351.25px;width:3.40px;height:0.50px;background:#2a2c2f;"></div><span class="t" style="left:430.96px;top:362.00px;font-size:3.2px;color:#383b3e;font-weight:bold;width:15.20px;text-align:center;">30</span><div style="left:432.36px;top:362.25px;width:3.40px;height:0.50px;background:#2a2c2f;"></div><div style="left:441.36px;top:362.25px;width:3.40px;height:0.50px;background:#2a2c2f;"></div><span class="t" style="left:430.96px;top:378.00px;font-size:3.2px;color:#383b3e;font-weight:bold;width:15.20px;text-align:center;">40</span><div style="left:432.36px;top:378.25px;width:3.40px;height:0.50px;background:#2a2c2f;"></div><div style="left:441.36px;top:378.25px;width:3.40px;height:0.50px;background:#2a2c2f;"></div><span class="t" style="left:430.96px;top:390.00px;font-size:3.2px;color:#383b3e;font-weight:bold;width:15.20px;text-align:center;">50</span><div style="left:432.36px;top:390.25px;width:3.40px;height:0.50px;background:#2a2c2f;"></div><div style="left:441.36px;top:390.25px;width:3.40px;height:0.50px;background:#2a2c2f;"></div><div style="left:432.66px;top:325.00px;width:11.95px;height:71.80px;background:linear-gradient(#34f29e 0%,#30f0a6 28%,#2ae6bc 48%,#25dad4 66%,#20cbec 85%,#1ec3f6 100%) 0 -36.00px / 100% 108px no-repeat;"></div><div style="left:438.41px;top:325.00px;width:0.50px;height:71.80px;background:rgba(5,40,45,0.75);"></div><div style="left:432.66px;top:337.20px;width:11.90px;height:0.60px;background:rgba(8,70,80,0.38);"></div><div style="left:432.66px;top:350.70px;width:11.90px;height:0.60px;background:rgba(8,70,80,0.38);"></div><div style="left:432.66px;top:361.95px;width:11.90px;height:0.60px;background:rgba(8,70,80,0.38);"></div><div style="left:432.66px;top:378.45px;width:11.90px;height:0.60px;background:rgba(8,70,80,0.38);"></div><div style="left:432.66px;top:389.70px;width:11.90px;height:0.60px;background:rgba(8,70,80,0.38);"></div><div style="left:412.46px;top:307.00px;width:9.40px;height:18.40px;background:linear-gradient(#f4fafe 0%,#f4fafe 9%,#5aaee8 13%,#86c6f1 44%,#2c4a5e 47%,#2c4a5e 52%,#c6e3f7 56%,#e4f2fb 86%,#ffffff 92%,#ffffff 100%);border-radius:1.2px;border:0.5px solid #15212b;box-shadow:0 0.6px 1px rgba(0,0,0,0.6);"></div><div style="left:410.16px;top:401.20px;width:37.52px;height:11.20px;background:#1e2023;"></div><span class="t" style="left:413.16px;top:404.40px;font-size:6.3px;color:#f0f0f0;font-weight:bold;">0.00</span><span class="t" style="left:430.36px;top:405.20px;font-size:3.9px;color:#8a8d91;font-weight:normal;width:16.50px;text-align:center;">-11.4</span><div style="left:410.96px;top:413.40px;width:36.40px;height:12.00px;background:#1c2026;border-radius:1.4px 1.4px 0 0;"></div><div style="left:411.26px;top:413.80px;width:17.20px;height:11.40px;background:linear-gradient(#536277,#3a4759);border-radius:1px 0 0 0;"></div><div style="left:429.46px;top:413.80px;width:17.60px;height:11.40px;background:linear-gradient(#536277,#3a4759);border-radius:0 1px 0 0;"></div><span class="t" style="left:411.26px;top:418.00px;font-size:4.4px;color:#1b2129;font-weight:bold;width:17.30px;text-align:center;">R</span><span class="t" style="left:429.46px;top:418.00px;font-size:4.4px;color:#1b2129;font-weight:bold;width:17.60px;text-align:center;">W</span><div style="left:485.50px;top:287.00px;width:0.60px;height:114.00px;background:#292c2f;"></div><div style="left:456.68px;top:290.00px;width:12.00px;height:108.00px;background:#2f3236;"></div><div style="left:448.78px;top:245.60px;width:36.60px;height:15.40px;background:#000;border-radius:1px;"></div><div style="left:466.18px;top:246.00px;width:1.90px;height:9.60px;background:linear-gradient(#d4e8f5,#86aac1);border-radius:0.6px;"></div><span class="t" style="left:448.78px;top:257.00px;font-size:4.0px;color:#f0f0f0;font-weight:bold;width:36.60px;text-align:center;">C</span><div style="left:448.88px;top:264.20px;width:36.40px;height:20.40px;background:#1c2026;border-radius:1.4px;"></div><div style="left:449.18px;top:264.50px;width:17.20px;height:9.60px;background:linear-gradient(#5c6b81,#465467);border-radius:1px 0 0 0;"></div><div style="left:467.38px;top:264.50px;width:17.60px;height:9.60px;background:linear-gradient(#5c6b81,#465467);border-radius:0 1px 0 0;"></div><div style="left:449.18px;top:274.80px;width:17.20px;height:9.50px;background:linear-gradient(#505f74,#3c495b);border-radius:0 0 0 1px;"></div><div style="left:467.38px;top:274.80px;width:17.60px;height:9.50px;background:linear-gradient(#505f74,#3c495b);border-radius:0 0 1px 0;"></div><span class="t" style="left:449.18px;top:268.00px;font-size:4.4px;color:#1b2129;font-weight:bold;width:17.30px;text-align:center;">M</span><span class="t" style="left:467.38px;top:268.00px;font-size:4.4px;color:#1b2129;font-weight:bold;width:17.60px;text-align:center;">S</span><span class="t" style="left:449.18px;top:278.00px;font-size:4.4px;color:#4d5b70;font-weight:normal;width:17.30px;text-align:center;">L</span><svg style="left:473.68px;top:277px" width="5" height="5" viewBox="0 0 5 5"><g fill="none" stroke="#161a20" stroke-width="0.9"><path d="M3.9 1.6 A1.6 1.6 0 1 0 4 3.4"/><path d="M2 2.5 L4.2 2.5"/></g></svg><div style="left:454.78px;top:293.40px;width:1.30px;height:104.00px;background:#17191b;border-radius:0.6px;"></div><div style="left:457.08px;top:296.25px;width:4.20px;height:0.50px;background:#5f6266;"></div><span class="t" style="left:458.18px;top:296.00px;font-size:3.4px;color:#b4b6b9;font-weight:bold;width:8.00px;text-align:right;">6</span><div style="left:457.08px;top:315.25px;width:4.20px;height:0.50px;background:#5f6266;"></div><span class="t" style="left:458.18px;top:315.00px;font-size:3.4px;color:#b4b6b9;font-weight:bold;width:8.00px;text-align:right;">0</span><div style="left:457.08px;top:333.25px;width:4.20px;height:0.50px;background:#5f6266;"></div><span class="t" style="left:458.18px;top:333.00px;font-size:3.4px;color:#b4b6b9;font-weight:bold;width:8.00px;text-align:right;">5</span><div style="left:457.08px;top:347.25px;width:4.20px;height:0.50px;background:#5f6266;"></div><span class="t" style="left:458.18px;top:347.00px;font-size:3.4px;color:#b4b6b9;font-weight:bold;width:8.00px;text-align:right;">10</span><div style="left:457.08px;top:357.25px;width:4.20px;height:0.50px;background:#5f6266;"></div><span class="t" style="left:458.18px;top:357.00px;font-size:3.4px;color:#b4b6b9;font-weight:bold;width:8.00px;text-align:right;">15</span><div style="left:457.08px;top:365.25px;width:4.20px;height:0.50px;background:#5f6266;"></div><span class="t" style="left:458.18px;top:365.00px;font-size:3.4px;color:#b4b6b9;font-weight:bold;width:8.00px;text-align:right;">20</span><div style="left:457.08px;top:376.25px;width:4.20px;height:0.50px;background:#5f6266;"></div><span class="t" style="left:458.18px;top:376.00px;font-size:3.4px;color:#b4b6b9;font-weight:bold;width:8.00px;text-align:right;">30</span><div style="left:457.08px;top:382.25px;width:4.20px;height:0.50px;background:#5f6266;"></div><span class="t" style="left:458.18px;top:382.00px;font-size:3.4px;color:#b4b6b9;font-weight:bold;width:8.00px;text-align:right;">40</span><div style="left:457.68px;top:385.40px;width:3.80px;height:1.30px;background:#4c4f53;"></div><div style="left:457.08px;top:389.30px;width:4.20px;height:0.50px;background:#5f6266;"></div><span class="t" style="left:460.18px;top:386.00px;font-size:5.2px;color:#b4b6b9;font-weight:bold;width:6.40px;text-align:right;">&#8734;</span><div style="left:468.88px;top:288.80px;width:15.20px;height:109.40px;background:#040404;border:0.6px solid #45484c;border-radius:1.6px;"></div><div style="left:469.48px;top:289.40px;width:14.00px;height:6.20px;background:linear-gradient(#222426,#0a0a0a);border-radius:1.2px 1.2px 0 0;"></div><div style="left:469.48px;top:388.60px;width:14.00px;height:9.00px;background:linear-gradient(#040404,#2c2e30);border-radius:0 0 1.2px 1.2px;"></div><span class="t" style="left:468.88px;top:296.00px;font-size:3.2px;color:#383b3e;font-weight:bold;width:15.20px;text-align:center;">0</span><div style="left:470.28px;top:296.25px;width:3.40px;height:0.50px;background:#2a2c2f;"></div><div style="left:479.28px;top:296.25px;width:3.40px;height:0.50px;background:#2a2c2f;"></div><span class="t" style="left:468.88px;top:310.00px;font-size:3.2px;color:#383b3e;font-weight:bold;width:15.20px;text-align:center;">6</span><div style="left:470.28px;top:310.25px;width:3.40px;height:0.50px;background:#2a2c2f;"></div><div style="left:479.28px;top:310.25px;width:3.40px;height:0.50px;background:#2a2c2f;"></div><span class="t" style="left:468.88px;top:324.00px;font-size:3.2px;color:#383b3e;font-weight:bold;width:15.20px;text-align:center;">12</span><div style="left:470.28px;top:324.25px;width:3.40px;height:0.50px;background:#2a2c2f;"></div><div style="left:479.28px;top:324.25px;width:3.40px;height:0.50px;background:#2a2c2f;"></div><span class="t" style="left:468.88px;top:337.00px;font-size:3.2px;color:#383b3e;font-weight:bold;width:15.20px;text-align:center;">18</span><div style="left:470.28px;top:337.25px;width:3.40px;height:0.50px;background:#2a2c2f;"></div><div style="left:479.28px;top:337.25px;width:3.40px;height:0.50px;background:#2a2c2f;"></div><span class="t" style="left:468.88px;top:351.00px;font-size:3.2px;color:#383b3e;font-weight:bold;width:15.20px;text-align:center;">24</span><div style="left:470.28px;top:351.25px;width:3.40px;height:0.50px;background:#2a2c2f;"></div><div style="left:479.28px;top:351.25px;width:3.40px;height:0.50px;background:#2a2c2f;"></div><span class="t" style="left:468.88px;top:362.00px;font-size:3.2px;color:#383b3e;font-weight:bold;width:15.20px;text-align:center;">30</span><div style="left:470.28px;top:362.25px;width:3.40px;height:0.50px;background:#2a2c2f;"></div><div style="left:479.28px;top:362.25px;width:3.40px;height:0.50px;background:#2a2c2f;"></div><span class="t" style="left:468.88px;top:378.00px;font-size:3.2px;color:#383b3e;font-weight:bold;width:15.20px;text-align:center;">40</span><div style="left:470.28px;top:378.25px;width:3.40px;height:0.50px;background:#2a2c2f;"></div><div style="left:479.28px;top:378.25px;width:3.40px;height:0.50px;background:#2a2c2f;"></div><span class="t" style="left:468.88px;top:390.00px;font-size:3.2px;color:#383b3e;font-weight:bold;width:15.20px;text-align:center;">50</span><div style="left:470.28px;top:390.25px;width:3.40px;height:0.50px;background:#2a2c2f;"></div><div style="left:479.28px;top:390.25px;width:3.40px;height:0.50px;background:#2a2c2f;"></div><div style="left:470.58px;top:334.40px;width:11.95px;height:62.40px;background:linear-gradient(#34f29e 0%,#30f0a6 28%,#2ae6bc 48%,#25dad4 66%,#20cbec 85%,#1ec3f6 100%) 0 -45.40px / 100% 108px no-repeat;"></div><div style="left:476.33px;top:334.40px;width:0.50px;height:62.40px;background:rgba(5,40,45,0.75);"></div><div style="left:470.58px;top:337.20px;width:11.90px;height:0.60px;background:rgba(8,70,80,0.38);"></div><div style="left:470.58px;top:350.70px;width:11.90px;height:0.60px;background:rgba(8,70,80,0.38);"></div><div style="left:470.58px;top:361.95px;width:11.90px;height:0.60px;background:rgba(8,70,80,0.38);"></div><div style="left:470.58px;top:378.45px;width:11.90px;height:0.60px;background:rgba(8,70,80,0.38);"></div><div style="left:470.58px;top:389.70px;width:11.90px;height:0.60px;background:rgba(8,70,80,0.38);"></div><div style="left:450.38px;top:307.00px;width:9.40px;height:18.40px;background:linear-gradient(#f4fafe 0%,#f4fafe 9%,#5aaee8 13%,#86c6f1 44%,#2c4a5e 47%,#2c4a5e 52%,#c6e3f7 56%,#e4f2fb 86%,#ffffff 92%,#ffffff 100%);border-radius:1.2px;border:0.5px solid #15212b;box-shadow:0 0.6px 1px rgba(0,0,0,0.6);"></div><div style="left:448.08px;top:401.20px;width:37.52px;height:11.20px;background:#1e2023;"></div><span class="t" style="left:451.08px;top:404.40px;font-size:6.3px;color:#f0f0f0;font-weight:bold;">0.00</span><span class="t" style="left:468.28px;top:405.20px;font-size:3.9px;color:#8a8d91;font-weight:normal;width:16.50px;text-align:center;">-15.1</span><div style="left:448.88px;top:413.40px;width:36.40px;height:12.00px;background:#1c2026;border-radius:1.4px 1.4px 0 0;"></div><div style="left:449.18px;top:413.80px;width:17.20px;height:11.40px;background:linear-gradient(#536277,#3a4759);border-radius:1px 0 0 0;"></div><div style="left:467.38px;top:413.80px;width:17.60px;height:11.40px;background:linear-gradient(#536277,#3a4759);border-radius:0 1px 0 0;"></div><span class="t" style="left:449.18px;top:418.00px;font-size:4.4px;color:#1b2129;font-weight:bold;width:17.30px;text-align:center;">R</span><span class="t" style="left:467.38px;top:418.00px;font-size:4.4px;color:#1b2129;font-weight:bold;width:17.60px;text-align:center;">W</span><div style="left:523.42px;top:287.00px;width:0.60px;height:114.00px;background:#292c2f;"></div><div style="left:494.60px;top:290.00px;width:12.00px;height:108.00px;background:#2f3236;"></div><div style="left:486.70px;top:245.60px;width:36.60px;height:15.40px;background:#000;border-radius:1px;"></div><div style="left:504.10px;top:246.00px;width:1.90px;height:9.60px;background:linear-gradient(#d4e8f5,#86aac1);border-radius:0.6px;"></div><span class="t" style="left:486.70px;top:257.00px;font-size:4.0px;color:#f0f0f0;font-weight:bold;width:36.60px;text-align:center;">C</span><div style="left:486.80px;top:264.20px;width:36.40px;height:20.40px;background:#1c2026;border-radius:1.4px;"></div><div style="left:487.10px;top:264.50px;width:17.20px;height:9.60px;background:linear-gradient(#5c6b81,#465467);border-radius:1px 0 0 0;"></div><div style="left:505.30px;top:264.50px;width:17.60px;height:9.60px;background:linear-gradient(#5c6b81,#465467);border-radius:0 1px 0 0;"></div><div style="left:487.10px;top:274.80px;width:17.20px;height:9.50px;background:linear-gradient(#505f74,#3c495b);border-radius:0 0 0 1px;"></div><div style="left:505.30px;top:274.80px;width:17.60px;height:9.50px;background:linear-gradient(#505f74,#3c495b);border-radius:0 0 1px 0;"></div><span class="t" style="left:487.10px;top:268.00px;font-size:4.4px;color:#1b2129;font-weight:bold;width:17.30px;text-align:center;">M</span><span class="t" style="left:505.30px;top:268.00px;font-size:4.4px;color:#1b2129;font-weight:bold;width:17.60px;text-align:center;">S</span><span class="t" style="left:487.10px;top:278.00px;font-size:4.4px;color:#4d5b70;font-weight:normal;width:17.30px;text-align:center;">L</span><svg style="left:511.60px;top:277px" width="5" height="5" viewBox="0 0 5 5"><g fill="none" stroke="#161a20" stroke-width="0.9"><path d="M3.9 1.6 A1.6 1.6 0 1 0 4 3.4"/><path d="M2 2.5 L4.2 2.5"/></g></svg><div style="left:492.70px;top:293.40px;width:1.30px;height:104.00px;background:#17191b;border-radius:0.6px;"></div><div style="left:495.00px;top:296.25px;width:4.20px;height:0.50px;background:#5f6266;"></div><span class="t" style="left:496.10px;top:296.00px;font-size:3.4px;color:#b4b6b9;font-weight:bold;width:8.00px;text-align:right;">6</span><div style="left:495.00px;top:315.25px;width:4.20px;height:0.50px;background:#5f6266;"></div><span class="t" style="left:496.10px;top:315.00px;font-size:3.4px;color:#b4b6b9;font-weight:bold;width:8.00px;text-align:right;">0</span><div style="left:495.00px;top:333.25px;width:4.20px;height:0.50px;background:#5f6266;"></div><span class="t" style="left:496.10px;top:333.00px;font-size:3.4px;color:#b4b6b9;font-weight:bold;width:8.00px;text-align:right;">5</span><div style="left:495.00px;top:347.25px;width:4.20px;height:0.50px;background:#5f6266;"></div><span class="t" style="left:496.10px;top:347.00px;font-size:3.4px;color:#b4b6b9;font-weight:bold;width:8.00px;text-align:right;">10</span><div style="left:495.00px;top:357.25px;width:4.20px;height:0.50px;background:#5f6266;"></div><span class="t" style="left:496.10px;top:357.00px;font-size:3.4px;color:#b4b6b9;font-weight:bold;width:8.00px;text-align:right;">15</span><div style="left:495.00px;top:365.25px;width:4.20px;height:0.50px;background:#5f6266;"></div><span class="t" style="left:496.10px;top:365.00px;font-size:3.4px;color:#b4b6b9;font-weight:bold;width:8.00px;text-align:right;">20</span><div style="left:495.00px;top:376.25px;width:4.20px;height:0.50px;background:#5f6266;"></div><span class="t" style="left:496.10px;top:376.00px;font-size:3.4px;color:#b4b6b9;font-weight:bold;width:8.00px;text-align:right;">30</span><div style="left:495.00px;top:382.25px;width:4.20px;height:0.50px;background:#5f6266;"></div><span class="t" style="left:496.10px;top:382.00px;font-size:3.4px;color:#b4b6b9;font-weight:bold;width:8.00px;text-align:right;">40</span><div style="left:495.60px;top:385.40px;width:3.80px;height:1.30px;background:#4c4f53;"></div><div style="left:495.00px;top:389.30px;width:4.20px;height:0.50px;background:#5f6266;"></div><span class="t" style="left:498.10px;top:386.00px;font-size:5.2px;color:#b4b6b9;font-weight:bold;width:6.40px;text-align:right;">&#8734;</span><div style="left:506.80px;top:288.80px;width:15.20px;height:109.40px;background:#040404;border:0.6px solid #45484c;border-radius:1.6px;"></div><div style="left:507.40px;top:289.40px;width:14.00px;height:6.20px;background:linear-gradient(#222426,#0a0a0a);border-radius:1.2px 1.2px 0 0;"></div><div style="left:507.40px;top:388.60px;width:14.00px;height:9.00px;background:linear-gradient(#040404,#2c2e30);border-radius:0 0 1.2px 1.2px;"></div><span class="t" style="left:506.80px;top:296.00px;font-size:3.2px;color:#383b3e;font-weight:bold;width:15.20px;text-align:center;">0</span><div style="left:508.20px;top:296.25px;width:3.40px;height:0.50px;background:#2a2c2f;"></div><div style="left:517.20px;top:296.25px;width:3.40px;height:0.50px;background:#2a2c2f;"></div><span class="t" style="left:506.80px;top:310.00px;font-size:3.2px;color:#383b3e;font-weight:bold;width:15.20px;text-align:center;">6</span><div style="left:508.20px;top:310.25px;width:3.40px;height:0.50px;background:#2a2c2f;"></div><div style="left:517.20px;top:310.25px;width:3.40px;height:0.50px;background:#2a2c2f;"></div><span class="t" style="left:506.80px;top:324.00px;font-size:3.2px;color:#383b3e;font-weight:bold;width:15.20px;text-align:center;">12</span><div style="left:508.20px;top:324.25px;width:3.40px;height:0.50px;background:#2a2c2f;"></div><div style="left:517.20px;top:324.25px;width:3.40px;height:0.50px;background:#2a2c2f;"></div><span class="t" style="left:506.80px;top:337.00px;font-size:3.2px;color:#383b3e;font-weight:bold;width:15.20px;text-align:center;">18</span><div style="left:508.20px;top:337.25px;width:3.40px;height:0.50px;background:#2a2c2f;"></div><div style="left:517.20px;top:337.25px;width:3.40px;height:0.50px;background:#2a2c2f;"></div><span class="t" style="left:506.80px;top:351.00px;font-size:3.2px;color:#383b3e;font-weight:bold;width:15.20px;text-align:center;">24</span><div style="left:508.20px;top:351.25px;width:3.40px;height:0.50px;background:#2a2c2f;"></div><div style="left:517.20px;top:351.25px;width:3.40px;height:0.50px;background:#2a2c2f;"></div><span class="t" style="left:506.80px;top:362.00px;font-size:3.2px;color:#383b3e;font-weight:bold;width:15.20px;text-align:center;">30</span><div style="left:508.20px;top:362.25px;width:3.40px;height:0.50px;background:#2a2c2f;"></div><div style="left:517.20px;top:362.25px;width:3.40px;height:0.50px;background:#2a2c2f;"></div><span class="t" style="left:506.80px;top:378.00px;font-size:3.2px;color:#383b3e;font-weight:bold;width:15.20px;text-align:center;">40</span><div style="left:508.20px;top:378.25px;width:3.40px;height:0.50px;background:#2a2c2f;"></div><div style="left:517.20px;top:378.25px;width:3.40px;height:0.50px;background:#2a2c2f;"></div><span class="t" style="left:506.80px;top:390.00px;font-size:3.2px;color:#383b3e;font-weight:bold;width:15.20px;text-align:center;">50</span><div style="left:508.20px;top:390.25px;width:3.40px;height:0.50px;background:#2a2c2f;"></div><div style="left:517.20px;top:390.25px;width:3.40px;height:0.50px;background:#2a2c2f;"></div><div style="left:508.50px;top:329.00px;width:11.95px;height:67.80px;background:linear-gradient(#34f29e 0%,#30f0a6 28%,#2ae6bc 48%,#25dad4 66%,#20cbec 85%,#1ec3f6 100%) 0 -40.00px / 100% 108px no-repeat;"></div><div style="left:514.25px;top:329.00px;width:0.50px;height:67.80px;background:rgba(5,40,45,0.75);"></div><div style="left:508.50px;top:337.20px;width:11.90px;height:0.60px;background:rgba(8,70,80,0.38);"></div><div style="left:508.50px;top:350.70px;width:11.90px;height:0.60px;background:rgba(8,70,80,0.38);"></div><div style="left:508.50px;top:361.95px;width:11.90px;height:0.60px;background:rgba(8,70,80,0.38);"></div><div style="left:508.50px;top:378.45px;width:11.90px;height:0.60px;background:rgba(8,70,80,0.38);"></div><div style="left:508.50px;top:389.70px;width:11.90px;height:0.60px;background:rgba(8,70,80,0.38);"></div><div style="left:488.30px;top:307.00px;width:9.40px;height:18.40px;background:linear-gradient(#f4fafe 0%,#f4fafe 9%,#5aaee8 13%,#86c6f1 44%,#2c4a5e 47%,#2c4a5e 52%,#c6e3f7 56%,#e4f2fb 86%,#ffffff 92%,#ffffff 100%);border-radius:1.2px;border:0.5px solid #15212b;box-shadow:0 0.6px 1px rgba(0,0,0,0.6);"></div><div style="left:486.00px;top:401.20px;width:37.52px;height:11.20px;background:#1e2023;"></div><span class="t" style="left:489.00px;top:404.40px;font-size:6.3px;color:#f0f0f0;font-weight:bold;">0.00</span><span class="t" style="left:506.20px;top:405.20px;font-size:3.9px;color:#8a8d91;font-weight:normal;width:16.50px;text-align:center;">-13.3</span><div style="left:486.80px;top:413.40px;width:36.40px;height:12.00px;background:#1c2026;border-radius:1.4px 1.4px 0 0;"></div><div style="left:487.10px;top:413.80px;width:17.20px;height:11.40px;background:linear-gradient(#536277,#3a4759);border-radius:1px 0 0 0;"></div><div style="left:505.30px;top:413.80px;width:17.60px;height:11.40px;background:linear-gradient(#536277,#3a4759);border-radius:0 1px 0 0;"></div><span class="t" style="left:487.10px;top:418.00px;font-size:4.4px;color:#1b2129;font-weight:bold;width:17.30px;text-align:center;">R</span><span class="t" style="left:505.30px;top:418.00px;font-size:4.4px;color:#1b2129;font-weight:bold;width:17.60px;text-align:center;">W</span><div style="left:561.34px;top:287.00px;width:0.60px;height:114.00px;background:#292c2f;"></div><div style="left:532.52px;top:290.00px;width:12.00px;height:108.00px;background:#2f3236;"></div><div style="left:524.62px;top:245.60px;width:36.60px;height:15.40px;background:#000;border-radius:1px;"></div><div style="left:542.02px;top:246.00px;width:1.90px;height:9.60px;background:linear-gradient(#d4e8f5,#86aac1);border-radius:0.6px;"></div><span class="t" style="left:524.62px;top:257.00px;font-size:4.0px;color:#f0f0f0;font-weight:bold;width:36.60px;text-align:center;">C</span><div style="left:524.72px;top:264.20px;width:36.40px;height:20.40px;background:#1c2026;border-radius:1.4px;"></div><div style="left:525.02px;top:264.50px;width:17.20px;height:9.60px;background:linear-gradient(#5c6b81,#465467);border-radius:1px 0 0 0;"></div><div style="left:543.22px;top:264.50px;width:17.60px;height:9.60px;background:linear-gradient(#5c6b81,#465467);border-radius:0 1px 0 0;"></div><div style="left:525.02px;top:274.80px;width:17.20px;height:9.50px;background:linear-gradient(#505f74,#3c495b);border-radius:0 0 0 1px;"></div><div style="left:543.22px;top:274.80px;width:17.60px;height:9.50px;background:linear-gradient(#505f74,#3c495b);border-radius:0 0 1px 0;"></div><span class="t" style="left:525.02px;top:268.00px;font-size:4.4px;color:#1b2129;font-weight:bold;width:17.30px;text-align:center;">M</span><span class="t" style="left:543.22px;top:268.00px;font-size:4.4px;color:#1b2129;font-weight:bold;width:17.60px;text-align:center;">S</span><span class="t" style="left:525.02px;top:278.00px;font-size:4.4px;color:#4d5b70;font-weight:normal;width:17.30px;text-align:center;">L</span><svg style="left:549.52px;top:277px" width="5" height="5" viewBox="0 0 5 5"><g fill="none" stroke="#161a20" stroke-width="0.9"><path d="M3.9 1.6 A1.6 1.6 0 1 0 4 3.4"/><path d="M2 2.5 L4.2 2.5"/></g></svg><div style="left:530.62px;top:293.40px;width:1.30px;height:104.00px;background:#17191b;border-radius:0.6px;"></div><div style="left:532.92px;top:296.25px;width:4.20px;height:0.50px;background:#5f6266;"></div><span class="t" style="left:534.02px;top:296.00px;font-size:3.4px;color:#b4b6b9;font-weight:bold;width:8.00px;text-align:right;">6</span><div style="left:532.92px;top:315.25px;width:4.20px;height:0.50px;background:#5f6266;"></div><span class="t" style="left:534.02px;top:315.00px;font-size:3.4px;color:#b4b6b9;font-weight:bold;width:8.00px;text-align:right;">0</span><div style="left:532.92px;top:333.25px;width:4.20px;height:0.50px;background:#5f6266;"></div><span class="t" style="left:534.02px;top:333.00px;font-size:3.4px;color:#b4b6b9;font-weight:bold;width:8.00px;text-align:right;">5</span><div style="left:532.92px;top:347.25px;width:4.20px;height:0.50px;background:#5f6266;"></div><span class="t" style="left:534.02px;top:347.00px;font-size:3.4px;color:#b4b6b9;font-weight:bold;width:8.00px;text-align:right;">10</span><div style="left:532.92px;top:357.25px;width:4.20px;height:0.50px;background:#5f6266;"></div><span class="t" style="left:534.02px;top:357.00px;font-size:3.4px;color:#b4b6b9;font-weight:bold;width:8.00px;text-align:right;">15</span><div style="left:532.92px;top:365.25px;width:4.20px;height:0.50px;background:#5f6266;"></div><span class="t" style="left:534.02px;top:365.00px;font-size:3.4px;color:#b4b6b9;font-weight:bold;width:8.00px;text-align:right;">20</span><div style="left:532.92px;top:376.25px;width:4.20px;height:0.50px;background:#5f6266;"></div><span class="t" style="left:534.02px;top:376.00px;font-size:3.4px;color:#b4b6b9;font-weight:bold;width:8.00px;text-align:right;">30</span><div style="left:532.92px;top:382.25px;width:4.20px;height:0.50px;background:#5f6266;"></div><span class="t" style="left:534.02px;top:382.00px;font-size:3.4px;color:#b4b6b9;font-weight:bold;width:8.00px;text-align:right;">40</span><div style="left:533.52px;top:385.40px;width:3.80px;height:1.30px;background:#4c4f53;"></div><div style="left:532.92px;top:389.30px;width:4.20px;height:0.50px;background:#5f6266;"></div><span class="t" style="left:536.02px;top:386.00px;font-size:5.2px;color:#b4b6b9;font-weight:bold;width:6.40px;text-align:right;">&#8734;</span><div style="left:544.72px;top:288.80px;width:15.20px;height:109.40px;background:#040404;border:0.6px solid #45484c;border-radius:1.6px;"></div><div style="left:545.32px;top:289.40px;width:14.00px;height:6.20px;background:linear-gradient(#222426,#0a0a0a);border-radius:1.2px 1.2px 0 0;"></div><div style="left:545.32px;top:388.60px;width:14.00px;height:9.00px;background:linear-gradient(#040404,#2c2e30);border-radius:0 0 1.2px 1.2px;"></div><span class="t" style="left:544.72px;top:296.00px;font-size:3.2px;color:#383b3e;font-weight:bold;width:15.20px;text-align:center;">0</span><div style="left:546.12px;top:296.25px;width:3.40px;height:0.50px;background:#2a2c2f;"></div><div style="left:555.12px;top:296.25px;width:3.40px;height:0.50px;background:#2a2c2f;"></div><span class="t" style="left:544.72px;top:310.00px;font-size:3.2px;color:#383b3e;font-weight:bold;width:15.20px;text-align:center;">6</span><div style="left:546.12px;top:310.25px;width:3.40px;height:0.50px;background:#2a2c2f;"></div><div style="left:555.12px;top:310.25px;width:3.40px;height:0.50px;background:#2a2c2f;"></div><span class="t" style="left:544.72px;top:324.00px;font-size:3.2px;color:#383b3e;font-weight:bold;width:15.20px;text-align:center;">12</span><div style="left:546.12px;top:324.25px;width:3.40px;height:0.50px;background:#2a2c2f;"></div><div style="left:555.12px;top:324.25px;width:3.40px;height:0.50px;background:#2a2c2f;"></div><span class="t" style="left:544.72px;top:337.00px;font-size:3.2px;color:#383b3e;font-weight:bold;width:15.20px;text-align:center;">18</span><div style="left:546.12px;top:337.25px;width:3.40px;height:0.50px;background:#2a2c2f;"></div><div style="left:555.12px;top:337.25px;width:3.40px;height:0.50px;background:#2a2c2f;"></div><span class="t" style="left:544.72px;top:351.00px;font-size:3.2px;color:#383b3e;font-weight:bold;width:15.20px;text-align:center;">24</span><div style="left:546.12px;top:351.25px;width:3.40px;height:0.50px;background:#2a2c2f;"></div><div style="left:555.12px;top:351.25px;width:3.40px;height:0.50px;background:#2a2c2f;"></div><span class="t" style="left:544.72px;top:362.00px;font-size:3.2px;color:#383b3e;font-weight:bold;width:15.20px;text-align:center;">30</span><div style="left:546.12px;top:362.25px;width:3.40px;height:0.50px;background:#2a2c2f;"></div><div style="left:555.12px;top:362.25px;width:3.40px;height:0.50px;background:#2a2c2f;"></div><span class="t" style="left:544.72px;top:378.00px;font-size:3.2px;color:#383b3e;font-weight:bold;width:15.20px;text-align:center;">40</span><div style="left:546.12px;top:378.25px;width:3.40px;height:0.50px;background:#2a2c2f;"></div><div style="left:555.12px;top:378.25px;width:3.40px;height:0.50px;background:#2a2c2f;"></div><span class="t" style="left:544.72px;top:390.00px;font-size:3.2px;color:#383b3e;font-weight:bold;width:15.20px;text-align:center;">50</span><div style="left:546.12px;top:390.25px;width:3.40px;height:0.50px;background:#2a2c2f;"></div><div style="left:555.12px;top:390.25px;width:3.40px;height:0.50px;background:#2a2c2f;"></div><div style="left:546.42px;top:328.00px;width:11.95px;height:68.80px;background:linear-gradient(#34f29e 0%,#30f0a6 28%,#2ae6bc 48%,#25dad4 66%,#20cbec 85%,#1ec3f6 100%) 0 -39.00px / 100% 108px no-repeat;"></div><div style="left:552.17px;top:328.00px;width:0.50px;height:68.80px;background:rgba(5,40,45,0.75);"></div><div style="left:546.42px;top:337.20px;width:11.90px;height:0.60px;background:rgba(8,70,80,0.38);"></div><div style="left:546.42px;top:350.70px;width:11.90px;height:0.60px;background:rgba(8,70,80,0.38);"></div><div style="left:546.42px;top:361.95px;width:11.90px;height:0.60px;background:rgba(8,70,80,0.38);"></div><div style="left:546.42px;top:378.45px;width:11.90px;height:0.60px;background:rgba(8,70,80,0.38);"></div><div style="left:546.42px;top:389.70px;width:11.90px;height:0.60px;background:rgba(8,70,80,0.38);"></div><div style="left:526.22px;top:307.00px;width:9.40px;height:18.40px;background:linear-gradient(#f4fafe 0%,#f4fafe 9%,#5aaee8 13%,#86c6f1 44%,#2c4a5e 47%,#2c4a5e 52%,#c6e3f7 56%,#e4f2fb 86%,#ffffff 92%,#ffffff 100%);border-radius:1.2px;border:0.5px solid #15212b;box-shadow:0 0.6px 1px rgba(0,0,0,0.6);"></div><div style="left:523.92px;top:401.20px;width:37.52px;height:11.20px;background:#1e2023;"></div><span class="t" style="left:526.92px;top:404.40px;font-size:6.3px;color:#f0f0f0;font-weight:bold;">0.00</span><span class="t" style="left:544.12px;top:405.20px;font-size:3.9px;color:#8a8d91;font-weight:normal;width:16.50px;text-align:center;">-10.2</span><div style="left:524.72px;top:413.40px;width:36.40px;height:12.00px;background:#1c2026;border-radius:1.4px 1.4px 0 0;"></div><div style="left:525.02px;top:413.80px;width:17.20px;height:11.40px;background:linear-gradient(#7fe04a,#55c22a);border-radius:1px 0 0 0;"></div><div style="left:543.22px;top:413.80px;width:17.60px;height:11.40px;background:linear-gradient(#536277,#3a4759);border-radius:0 1px 0 0;"></div><span class="t" style="left:525.02px;top:418.00px;font-size:4.4px;color:#1b2129;font-weight:bold;width:17.30px;text-align:center;">R</span><span class="t" style="left:543.22px;top:418.00px;font-size:4.4px;color:#1b2129;font-weight:bold;width:17.60px;text-align:center;">W</span><div style="left:599.26px;top:287.00px;width:0.60px;height:114.00px;background:#292c2f;"></div><div style="left:570.44px;top:290.00px;width:12.00px;height:108.00px;background:#2f3236;"></div><div style="left:562.54px;top:245.60px;width:36.60px;height:15.40px;background:#000;border-radius:1px;"></div><div style="left:579.94px;top:246.00px;width:1.90px;height:9.60px;background:linear-gradient(#d4e8f5,#86aac1);border-radius:0.6px;"></div><span class="t" style="left:562.54px;top:257.00px;font-size:4.0px;color:#f0f0f0;font-weight:bold;width:36.60px;text-align:center;">C</span><div style="left:562.64px;top:264.20px;width:36.40px;height:20.40px;background:#1c2026;border-radius:1.4px;"></div><div style="left:562.94px;top:264.50px;width:17.20px;height:9.60px;background:linear-gradient(#5c6b81,#465467);border-radius:1px 0 0 0;"></div><div style="left:581.14px;top:264.50px;width:17.60px;height:9.60px;background:linear-gradient(#5c6b81,#465467);border-radius:0 1px 0 0;"></div><div style="left:562.94px;top:274.80px;width:17.20px;height:9.50px;background:linear-gradient(#505f74,#3c495b);border-radius:0 0 0 1px;"></div><div style="left:581.14px;top:274.80px;width:17.60px;height:9.50px;background:linear-gradient(#505f74,#3c495b);border-radius:0 0 1px 0;"></div><span class="t" style="left:562.94px;top:268.00px;font-size:4.4px;color:#1b2129;font-weight:bold;width:17.30px;text-align:center;">M</span><span class="t" style="left:581.14px;top:268.00px;font-size:4.4px;color:#1b2129;font-weight:bold;width:17.60px;text-align:center;">S</span><span class="t" style="left:562.94px;top:278.00px;font-size:4.4px;color:#4d5b70;font-weight:normal;width:17.30px;text-align:center;">L</span><svg style="left:587.44px;top:277px" width="5" height="5" viewBox="0 0 5 5"><g fill="none" stroke="#161a20" stroke-width="0.9"><path d="M3.9 1.6 A1.6 1.6 0 1 0 4 3.4"/><path d="M2 2.5 L4.2 2.5"/></g></svg><div style="left:568.54px;top:293.40px;width:1.30px;height:104.00px;background:#17191b;border-radius:0.6px;"></div><div style="left:570.84px;top:296.25px;width:4.20px;height:0.50px;background:#5f6266;"></div><span class="t" style="left:571.94px;top:296.00px;font-size:3.4px;color:#b4b6b9;font-weight:bold;width:8.00px;text-align:right;">6</span><div style="left:570.84px;top:315.25px;width:4.20px;height:0.50px;background:#5f6266;"></div><span class="t" style="left:571.94px;top:315.00px;font-size:3.4px;color:#b4b6b9;font-weight:bold;width:8.00px;text-align:right;">0</span><div style="left:570.84px;top:333.25px;width:4.20px;height:0.50px;background:#5f6266;"></div><span class="t" style="left:571.94px;top:333.00px;font-size:3.4px;color:#b4b6b9;font-weight:bold;width:8.00px;text-align:right;">5</span><div style="left:570.84px;top:347.25px;width:4.20px;height:0.50px;background:#5f6266;"></div><span class="t" style="left:571.94px;top:347.00px;font-size:3.4px;color:#b4b6b9;font-weight:bold;width:8.00px;text-align:right;">10</span><div style="left:570.84px;top:357.25px;width:4.20px;height:0.50px;background:#5f6266;"></div><span class="t" style="left:571.94px;top:357.00px;font-size:3.4px;color:#b4b6b9;font-weight:bold;width:8.00px;text-align:right;">15</span><div style="left:570.84px;top:365.25px;width:4.20px;height:0.50px;background:#5f6266;"></div><span class="t" style="left:571.94px;top:365.00px;font-size:3.4px;color:#b4b6b9;font-weight:bold;width:8.00px;text-align:right;">20</span><div style="left:570.84px;top:376.25px;width:4.20px;height:0.50px;background:#5f6266;"></div><span class="t" style="left:571.94px;top:376.00px;font-size:3.4px;color:#b4b6b9;font-weight:bold;width:8.00px;text-align:right;">30</span><div style="left:570.84px;top:382.25px;width:4.20px;height:0.50px;background:#5f6266;"></div><span class="t" style="left:571.94px;top:382.00px;font-size:3.4px;color:#b4b6b9;font-weight:bold;width:8.00px;text-align:right;">40</span><div style="left:571.44px;top:385.40px;width:3.80px;height:1.30px;background:#4c4f53;"></div><div style="left:570.84px;top:389.30px;width:4.20px;height:0.50px;background:#5f6266;"></div><span class="t" style="left:573.94px;top:386.00px;font-size:5.2px;color:#b4b6b9;font-weight:bold;width:6.40px;text-align:right;">&#8734;</span><div style="left:582.64px;top:288.80px;width:15.20px;height:109.40px;background:#040404;border:0.6px solid #45484c;border-radius:1.6px;"></div><div style="left:583.24px;top:289.40px;width:14.00px;height:6.20px;background:linear-gradient(#222426,#0a0a0a);border-radius:1.2px 1.2px 0 0;"></div><div style="left:583.24px;top:388.60px;width:14.00px;height:9.00px;background:linear-gradient(#040404,#2c2e30);border-radius:0 0 1.2px 1.2px;"></div><span class="t" style="left:582.64px;top:296.00px;font-size:3.2px;color:#383b3e;font-weight:bold;width:15.20px;text-align:center;">0</span><div style="left:584.04px;top:296.25px;width:3.40px;height:0.50px;background:#2a2c2f;"></div><div style="left:593.04px;top:296.25px;width:3.40px;height:0.50px;background:#2a2c2f;"></div><span class="t" style="left:582.64px;top:310.00px;font-size:3.2px;color:#383b3e;font-weight:bold;width:15.20px;text-align:center;">6</span><div style="left:584.04px;top:310.25px;width:3.40px;height:0.50px;background:#2a2c2f;"></div><div style="left:593.04px;top:310.25px;width:3.40px;height:0.50px;background:#2a2c2f;"></div><span class="t" style="left:582.64px;top:324.00px;font-size:3.2px;color:#383b3e;font-weight:bold;width:15.20px;text-align:center;">12</span><div style="left:584.04px;top:324.25px;width:3.40px;height:0.50px;background:#2a2c2f;"></div><div style="left:593.04px;top:324.25px;width:3.40px;height:0.50px;background:#2a2c2f;"></div><span class="t" style="left:582.64px;top:337.00px;font-size:3.2px;color:#383b3e;font-weight:bold;width:15.20px;text-align:center;">18</span><div style="left:584.04px;top:337.25px;width:3.40px;height:0.50px;background:#2a2c2f;"></div><div style="left:593.04px;top:337.25px;width:3.40px;height:0.50px;background:#2a2c2f;"></div><span class="t" style="left:582.64px;top:351.00px;font-size:3.2px;color:#383b3e;font-weight:bold;width:15.20px;text-align:center;">24</span><div style="left:584.04px;top:351.25px;width:3.40px;height:0.50px;background:#2a2c2f;"></div><div style="left:593.04px;top:351.25px;width:3.40px;height:0.50px;background:#2a2c2f;"></div><span class="t" style="left:582.64px;top:362.00px;font-size:3.2px;color:#383b3e;font-weight:bold;width:15.20px;text-align:center;">30</span><div style="left:584.04px;top:362.25px;width:3.40px;height:0.50px;background:#2a2c2f;"></div><div style="left:593.04px;top:362.25px;width:3.40px;height:0.50px;background:#2a2c2f;"></div><span class="t" style="left:582.64px;top:378.00px;font-size:3.2px;color:#383b3e;font-weight:bold;width:15.20px;text-align:center;">40</span><div style="left:584.04px;top:378.25px;width:3.40px;height:0.50px;background:#2a2c2f;"></div><div style="left:593.04px;top:378.25px;width:3.40px;height:0.50px;background:#2a2c2f;"></div><span class="t" style="left:582.64px;top:390.00px;font-size:3.2px;color:#383b3e;font-weight:bold;width:15.20px;text-align:center;">50</span><div style="left:584.04px;top:390.25px;width:3.40px;height:0.50px;background:#2a2c2f;"></div><div style="left:593.04px;top:390.25px;width:3.40px;height:0.50px;background:#2a2c2f;"></div><div style="left:584.34px;top:337.00px;width:11.95px;height:59.80px;background:linear-gradient(#34f29e 0%,#30f0a6 28%,#2ae6bc 48%,#25dad4 66%,#20cbec 85%,#1ec3f6 100%) 0 -48.00px / 100% 108px no-repeat;"></div><div style="left:590.09px;top:337.00px;width:0.50px;height:59.80px;background:rgba(5,40,45,0.75);"></div><div style="left:584.34px;top:350.70px;width:11.90px;height:0.60px;background:rgba(8,70,80,0.38);"></div><div style="left:584.34px;top:361.95px;width:11.90px;height:0.60px;background:rgba(8,70,80,0.38);"></div><div style="left:584.34px;top:378.45px;width:11.90px;height:0.60px;background:rgba(8,70,80,0.38);"></div><div style="left:584.34px;top:389.70px;width:11.90px;height:0.60px;background:rgba(8,70,80,0.38);"></div><div style="left:564.14px;top:307.00px;width:9.40px;height:18.40px;background:linear-gradient(#f4fafe 0%,#f4fafe 9%,#5aaee8 13%,#86c6f1 44%,#2c4a5e 47%,#2c4a5e 52%,#c6e3f7 56%,#e4f2fb 86%,#ffffff 92%,#ffffff 100%);border-radius:1.2px;border:0.5px solid #15212b;box-shadow:0 0.6px 1px rgba(0,0,0,0.6);"></div><div style="left:561.84px;top:401.20px;width:37.52px;height:11.20px;background:#1e2023;"></div><span class="t" style="left:564.84px;top:404.40px;font-size:6.3px;color:#f0f0f0;font-weight:bold;">0.00</span><span class="t" style="left:582.04px;top:405.20px;font-size:3.9px;color:#8a8d91;font-weight:normal;width:16.50px;text-align:center;">-13.9</span><div style="left:562.64px;top:413.40px;width:36.40px;height:12.00px;background:#1c2026;border-radius:1.4px 1.4px 0 0;"></div><div style="left:562.94px;top:413.80px;width:17.20px;height:11.40px;background:linear-gradient(#536277,#3a4759);border-radius:1px 0 0 0;"></div><div style="left:581.14px;top:413.80px;width:17.60px;height:11.40px;background:linear-gradient(#536277,#3a4759);border-radius:0 1px 0 0;"></div><span class="t" style="left:562.94px;top:418.00px;font-size:4.4px;color:#1b2129;font-weight:bold;width:17.30px;text-align:center;">R</span><span class="t" style="left:581.14px;top:418.00px;font-size:4.4px;color:#1b2129;font-weight:bold;width:17.60px;text-align:center;">W</span><div style="left:637.18px;top:287.00px;width:0.60px;height:114.00px;background:#292c2f;"></div><div style="left:608.36px;top:290.00px;width:12.00px;height:108.00px;background:#2f3236;"></div><div style="left:600.46px;top:245.60px;width:36.60px;height:15.40px;background:#000;border-radius:1px;"></div><div style="left:617.86px;top:246.00px;width:1.90px;height:9.60px;background:linear-gradient(#d4e8f5,#86aac1);border-radius:0.6px;"></div><span class="t" style="left:600.46px;top:257.00px;font-size:4.0px;color:#f0f0f0;font-weight:bold;width:36.60px;text-align:center;">C</span><div style="left:600.56px;top:264.20px;width:36.40px;height:20.40px;background:#1c2026;border-radius:1.4px;"></div><div style="left:600.86px;top:264.50px;width:17.20px;height:9.60px;background:linear-gradient(#5c6b81,#465467);border-radius:1px 0 0 0;"></div><div style="left:619.06px;top:264.50px;width:17.60px;height:9.60px;background:linear-gradient(#5c6b81,#465467);border-radius:0 1px 0 0;"></div><div style="left:600.86px;top:274.80px;width:17.20px;height:9.50px;background:linear-gradient(#505f74,#3c495b);border-radius:0 0 0 1px;"></div><div style="left:619.06px;top:274.80px;width:17.60px;height:9.50px;background:linear-gradient(#505f74,#3c495b);border-radius:0 0 1px 0;"></div><span class="t" style="left:600.86px;top:268.00px;font-size:4.4px;color:#1b2129;font-weight:bold;width:17.30px;text-align:center;">M</span><span class="t" style="left:619.06px;top:268.00px;font-size:4.4px;color:#1b2129;font-weight:bold;width:17.60px;text-align:center;">S</span><span class="t" style="left:600.86px;top:278.00px;font-size:4.4px;color:#4d5b70;font-weight:normal;width:17.30px;text-align:center;">L</span><svg style="left:625.36px;top:277px" width="5" height="5" viewBox="0 0 5 5"><g fill="none" stroke="#161a20" stroke-width="0.9"><path d="M3.9 1.6 A1.6 1.6 0 1 0 4 3.4"/><path d="M2 2.5 L4.2 2.5"/></g></svg><div style="left:606.46px;top:293.40px;width:1.30px;height:104.00px;background:#17191b;border-radius:0.6px;"></div><div style="left:608.76px;top:296.25px;width:4.20px;height:0.50px;background:#5f6266;"></div><span class="t" style="left:609.86px;top:296.00px;font-size:3.4px;color:#b4b6b9;font-weight:bold;width:8.00px;text-align:right;">6</span><div style="left:608.76px;top:315.25px;width:4.20px;height:0.50px;background:#5f6266;"></div><span class="t" style="left:609.86px;top:315.00px;font-size:3.4px;color:#b4b6b9;font-weight:bold;width:8.00px;text-align:right;">0</span><div style="left:608.76px;top:333.25px;width:4.20px;height:0.50px;background:#5f6266;"></div><span class="t" style="left:609.86px;top:333.00px;font-size:3.4px;color:#b4b6b9;font-weight:bold;width:8.00px;text-align:right;">5</span><div style="left:608.76px;top:347.25px;width:4.20px;height:0.50px;background:#5f6266;"></div><span class="t" style="left:609.86px;top:347.00px;font-size:3.4px;color:#b4b6b9;font-weight:bold;width:8.00px;text-align:right;">10</span><div style="left:608.76px;top:357.25px;width:4.20px;height:0.50px;background:#5f6266;"></div><span class="t" style="left:609.86px;top:357.00px;font-size:3.4px;color:#b4b6b9;font-weight:bold;width:8.00px;text-align:right;">15</span><div style="left:608.76px;top:365.25px;width:4.20px;height:0.50px;background:#5f6266;"></div><span class="t" style="left:609.86px;top:365.00px;font-size:3.4px;color:#b4b6b9;font-weight:bold;width:8.00px;text-align:right;">20</span><div style="left:608.76px;top:376.25px;width:4.20px;height:0.50px;background:#5f6266;"></div><span class="t" style="left:609.86px;top:376.00px;font-size:3.4px;color:#b4b6b9;font-weight:bold;width:8.00px;text-align:right;">30</span><div style="left:608.76px;top:382.25px;width:4.20px;height:0.50px;background:#5f6266;"></div><span class="t" style="left:609.86px;top:382.00px;font-size:3.4px;color:#b4b6b9;font-weight:bold;width:8.00px;text-align:right;">40</span><div style="left:609.36px;top:385.40px;width:3.80px;height:1.30px;background:#4c4f53;"></div><div style="left:608.76px;top:389.30px;width:4.20px;height:0.50px;background:#5f6266;"></div><span class="t" style="left:611.86px;top:386.00px;font-size:5.2px;color:#b4b6b9;font-weight:bold;width:6.40px;text-align:right;">&#8734;</span><div style="left:620.56px;top:288.80px;width:15.20px;height:109.40px;background:#040404;border:0.6px solid #45484c;border-radius:1.6px;"></div><div style="left:621.16px;top:289.40px;width:14.00px;height:6.20px;background:linear-gradient(#222426,#0a0a0a);border-radius:1.2px 1.2px 0 0;"></div><div style="left:621.16px;top:388.60px;width:14.00px;height:9.00px;background:linear-gradient(#040404,#2c2e30);border-radius:0 0 1.2px 1.2px;"></div><span class="t" style="left:620.56px;top:296.00px;font-size:3.2px;color:#383b3e;font-weight:bold;width:15.20px;text-align:center;">0</span><div style="left:621.96px;top:296.25px;width:3.40px;height:0.50px;background:#2a2c2f;"></div><div style="left:630.96px;top:296.25px;width:3.40px;height:0.50px;background:#2a2c2f;"></div><span class="t" style="left:620.56px;top:310.00px;font-size:3.2px;color:#383b3e;font-weight:bold;width:15.20px;text-align:center;">6</span><div style="left:621.96px;top:310.25px;width:3.40px;height:0.50px;background:#2a2c2f;"></div><div style="left:630.96px;top:310.25px;width:3.40px;height:0.50px;background:#2a2c2f;"></div><span class="t" style="left:620.56px;top:324.00px;font-size:3.2px;color:#383b3e;font-weight:bold;width:15.20px;text-align:center;">12</span><div style="left:621.96px;top:324.25px;width:3.40px;height:0.50px;background:#2a2c2f;"></div><div style="left:630.96px;top:324.25px;width:3.40px;height:0.50px;background:#2a2c2f;"></div><span class="t" style="left:620.56px;top:337.00px;font-size:3.2px;color:#383b3e;font-weight:bold;width:15.20px;text-align:center;">18</span><div style="left:621.96px;top:337.25px;width:3.40px;height:0.50px;background:#2a2c2f;"></div><div style="left:630.96px;top:337.25px;width:3.40px;height:0.50px;background:#2a2c2f;"></div><span class="t" style="left:620.56px;top:351.00px;font-size:3.2px;color:#383b3e;font-weight:bold;width:15.20px;text-align:center;">24</span><div style="left:621.96px;top:351.25px;width:3.40px;height:0.50px;background:#2a2c2f;"></div><div style="left:630.96px;top:351.25px;width:3.40px;height:0.50px;background:#2a2c2f;"></div><span class="t" style="left:620.56px;top:362.00px;font-size:3.2px;color:#383b3e;font-weight:bold;width:15.20px;text-align:center;">30</span><div style="left:621.96px;top:362.25px;width:3.40px;height:0.50px;background:#2a2c2f;"></div><div style="left:630.96px;top:362.25px;width:3.40px;height:0.50px;background:#2a2c2f;"></div><span class="t" style="left:620.56px;top:378.00px;font-size:3.2px;color:#383b3e;font-weight:bold;width:15.20px;text-align:center;">40</span><div style="left:621.96px;top:378.25px;width:3.40px;height:0.50px;background:#2a2c2f;"></div><div style="left:630.96px;top:378.25px;width:3.40px;height:0.50px;background:#2a2c2f;"></div><span class="t" style="left:620.56px;top:390.00px;font-size:3.2px;color:#383b3e;font-weight:bold;width:15.20px;text-align:center;">50</span><div style="left:621.96px;top:390.25px;width:3.40px;height:0.50px;background:#2a2c2f;"></div><div style="left:630.96px;top:390.25px;width:3.40px;height:0.50px;background:#2a2c2f;"></div><div style="left:622.26px;top:323.00px;width:11.95px;height:73.80px;background:linear-gradient(#34f29e 0%,#30f0a6 28%,#2ae6bc 48%,#25dad4 66%,#20cbec 85%,#1ec3f6 100%) 0 -34.00px / 100% 108px no-repeat;"></div><div style="left:628.01px;top:323.00px;width:0.50px;height:73.80px;background:rgba(5,40,45,0.75);"></div><div style="left:622.26px;top:337.20px;width:11.90px;height:0.60px;background:rgba(8,70,80,0.38);"></div><div style="left:622.26px;top:350.70px;width:11.90px;height:0.60px;background:rgba(8,70,80,0.38);"></div><div style="left:622.26px;top:361.95px;width:11.90px;height:0.60px;background:rgba(8,70,80,0.38);"></div><div style="left:622.26px;top:378.45px;width:11.90px;height:0.60px;background:rgba(8,70,80,0.38);"></div><div style="left:622.26px;top:389.70px;width:11.90px;height:0.60px;background:rgba(8,70,80,0.38);"></div><div style="left:602.06px;top:307.00px;width:9.40px;height:18.40px;background:linear-gradient(#f4fafe 0%,#f4fafe 9%,#5aaee8 13%,#86c6f1 44%,#2c4a5e 47%,#2c4a5e 52%,#c6e3f7 56%,#e4f2fb 86%,#ffffff 92%,#ffffff 100%);border-radius:1.2px;border:0.5px solid #15212b;box-shadow:0 0.6px 1px rgba(0,0,0,0.6);"></div><div style="left:599.76px;top:401.20px;width:37.52px;height:11.20px;background:#1e2023;"></div><span class="t" style="left:602.76px;top:404.40px;font-size:6.3px;color:#f0f0f0;font-weight:bold;">0.00</span><span class="t" style="left:619.96px;top:405.20px;font-size:3.9px;color:#8a8d91;font-weight:normal;width:16.50px;text-align:center;">-10.2</span><div style="left:600.56px;top:413.40px;width:36.40px;height:12.00px;background:#1c2026;border-radius:1.4px 1.4px 0 0;"></div><div style="left:600.86px;top:413.80px;width:17.20px;height:11.40px;background:linear-gradient(#536277,#3a4759);border-radius:1px 0 0 0;"></div><div style="left:619.06px;top:413.80px;width:17.60px;height:11.40px;background:linear-gradient(#536277,#3a4759);border-radius:0 1px 0 0;"></div><span class="t" style="left:600.86px;top:418.00px;font-size:4.4px;color:#1b2129;font-weight:bold;width:17.30px;text-align:center;">R</span><span class="t" style="left:619.06px;top:418.00px;font-size:4.4px;color:#1b2129;font-weight:bold;width:17.60px;text-align:center;">W</span><div style="left:675.10px;top:287.00px;width:0.60px;height:114.00px;background:#292c2f;"></div><div style="left:646.28px;top:290.00px;width:12.00px;height:108.00px;background:#2f3236;"></div><div style="left:638.38px;top:245.60px;width:36.60px;height:15.40px;background:#000;border-radius:1px;"></div><div style="left:655.78px;top:246.00px;width:1.90px;height:9.60px;background:linear-gradient(#d4e8f5,#86aac1);border-radius:0.6px;"></div><span class="t" style="left:638.38px;top:257.00px;font-size:4.0px;color:#f0f0f0;font-weight:bold;width:36.60px;text-align:center;">C</span><div style="left:638.48px;top:264.20px;width:36.40px;height:20.40px;background:#1c2026;border-radius:1.4px;"></div><div style="left:638.78px;top:264.50px;width:17.20px;height:9.60px;background:linear-gradient(#5c6b81,#465467);border-radius:1px 0 0 0;"></div><div style="left:656.98px;top:264.50px;width:17.60px;height:9.60px;background:linear-gradient(#5c6b81,#465467);border-radius:0 1px 0 0;"></div><div style="left:638.78px;top:274.80px;width:17.20px;height:9.50px;background:linear-gradient(#505f74,#3c495b);border-radius:0 0 0 1px;"></div><div style="left:656.98px;top:274.80px;width:17.60px;height:9.50px;background:linear-gradient(#505f74,#3c495b);border-radius:0 0 1px 0;"></div><span class="t" style="left:638.78px;top:268.00px;font-size:4.4px;color:#1b2129;font-weight:bold;width:17.30px;text-align:center;">M</span><span class="t" style="left:656.98px;top:268.00px;font-size:4.4px;color:#1b2129;font-weight:bold;width:17.60px;text-align:center;">S</span><span class="t" style="left:638.78px;top:278.00px;font-size:4.4px;color:#4d5b70;font-weight:normal;width:17.30px;text-align:center;">L</span><svg style="left:663.28px;top:277px" width="5" height="5" viewBox="0 0 5 5"><g fill="none" stroke="#161a20" stroke-width="0.9"><path d="M3.9 1.6 A1.6 1.6 0 1 0 4 3.4"/><path d="M2 2.5 L4.2 2.5"/></g></svg><div style="left:644.38px;top:293.40px;width:1.30px;height:104.00px;background:#17191b;border-radius:0.6px;"></div><div style="left:646.68px;top:296.25px;width:4.20px;height:0.50px;background:#5f6266;"></div><span class="t" style="left:647.78px;top:296.00px;font-size:3.4px;color:#b4b6b9;font-weight:bold;width:8.00px;text-align:right;">6</span><div style="left:646.68px;top:315.25px;width:4.20px;height:0.50px;background:#5f6266;"></div><span class="t" style="left:647.78px;top:315.00px;font-size:3.4px;color:#b4b6b9;font-weight:bold;width:8.00px;text-align:right;">0</span><div style="left:646.68px;top:333.25px;width:4.20px;height:0.50px;background:#5f6266;"></div><span class="t" style="left:647.78px;top:333.00px;font-size:3.4px;color:#b4b6b9;font-weight:bold;width:8.00px;text-align:right;">5</span><div style="left:646.68px;top:347.25px;width:4.20px;height:0.50px;background:#5f6266;"></div><span class="t" style="left:647.78px;top:347.00px;font-size:3.4px;color:#b4b6b9;font-weight:bold;width:8.00px;text-align:right;">10</span><div style="left:646.68px;top:357.25px;width:4.20px;height:0.50px;background:#5f6266;"></div><span class="t" style="left:647.78px;top:357.00px;font-size:3.4px;color:#b4b6b9;font-weight:bold;width:8.00px;text-align:right;">15</span><div style="left:646.68px;top:365.25px;width:4.20px;height:0.50px;background:#5f6266;"></div><span class="t" style="left:647.78px;top:365.00px;font-size:3.4px;color:#b4b6b9;font-weight:bold;width:8.00px;text-align:right;">20</span><div style="left:646.68px;top:376.25px;width:4.20px;height:0.50px;background:#5f6266;"></div><span class="t" style="left:647.78px;top:376.00px;font-size:3.4px;color:#b4b6b9;font-weight:bold;width:8.00px;text-align:right;">30</span><div style="left:646.68px;top:382.25px;width:4.20px;height:0.50px;background:#5f6266;"></div><span class="t" style="left:647.78px;top:382.00px;font-size:3.4px;color:#b4b6b9;font-weight:bold;width:8.00px;text-align:right;">40</span><div style="left:647.28px;top:385.40px;width:3.80px;height:1.30px;background:#4c4f53;"></div><div style="left:646.68px;top:389.30px;width:4.20px;height:0.50px;background:#5f6266;"></div><span class="t" style="left:649.78px;top:386.00px;font-size:5.2px;color:#b4b6b9;font-weight:bold;width:6.40px;text-align:right;">&#8734;</span><div style="left:658.48px;top:288.80px;width:15.20px;height:109.40px;background:#040404;border:0.6px solid #45484c;border-radius:1.6px;"></div><div style="left:659.08px;top:289.40px;width:14.00px;height:6.20px;background:linear-gradient(#222426,#0a0a0a);border-radius:1.2px 1.2px 0 0;"></div><div style="left:659.08px;top:388.60px;width:14.00px;height:9.00px;background:linear-gradient(#040404,#2c2e30);border-radius:0 0 1.2px 1.2px;"></div><span class="t" style="left:658.48px;top:296.00px;font-size:3.2px;color:#383b3e;font-weight:bold;width:15.20px;text-align:center;">0</span><div style="left:659.88px;top:296.25px;width:3.40px;height:0.50px;background:#2a2c2f;"></div><div style="left:668.88px;top:296.25px;width:3.40px;height:0.50px;background:#2a2c2f;"></div><span class="t" style="left:658.48px;top:310.00px;font-size:3.2px;color:#383b3e;font-weight:bold;width:15.20px;text-align:center;">6</span><div style="left:659.88px;top:310.25px;width:3.40px;height:0.50px;background:#2a2c2f;"></div><div style="left:668.88px;top:310.25px;width:3.40px;height:0.50px;background:#2a2c2f;"></div><span class="t" style="left:658.48px;top:324.00px;font-size:3.2px;color:#383b3e;font-weight:bold;width:15.20px;text-align:center;">12</span><div style="left:659.88px;top:324.25px;width:3.40px;height:0.50px;background:#2a2c2f;"></div><div style="left:668.88px;top:324.25px;width:3.40px;height:0.50px;background:#2a2c2f;"></div><span class="t" style="left:658.48px;top:337.00px;font-size:3.2px;color:#383b3e;font-weight:bold;width:15.20px;text-align:center;">18</span><div style="left:659.88px;top:337.25px;width:3.40px;height:0.50px;background:#2a2c2f;"></div><div style="left:668.88px;top:337.25px;width:3.40px;height:0.50px;background:#2a2c2f;"></div><span class="t" style="left:658.48px;top:351.00px;font-size:3.2px;color:#383b3e;font-weight:bold;width:15.20px;text-align:center;">24</span><div style="left:659.88px;top:351.25px;width:3.40px;height:0.50px;background:#2a2c2f;"></div><div style="left:668.88px;top:351.25px;width:3.40px;height:0.50px;background:#2a2c2f;"></div><span class="t" style="left:658.48px;top:362.00px;font-size:3.2px;color:#383b3e;font-weight:bold;width:15.20px;text-align:center;">30</span><div style="left:659.88px;top:362.25px;width:3.40px;height:0.50px;background:#2a2c2f;"></div><div style="left:668.88px;top:362.25px;width:3.40px;height:0.50px;background:#2a2c2f;"></div><span class="t" style="left:658.48px;top:378.00px;font-size:3.2px;color:#383b3e;font-weight:bold;width:15.20px;text-align:center;">40</span><div style="left:659.88px;top:378.25px;width:3.40px;height:0.50px;background:#2a2c2f;"></div><div style="left:668.88px;top:378.25px;width:3.40px;height:0.50px;background:#2a2c2f;"></div><span class="t" style="left:658.48px;top:390.00px;font-size:3.2px;color:#383b3e;font-weight:bold;width:15.20px;text-align:center;">50</span><div style="left:659.88px;top:390.25px;width:3.40px;height:0.50px;background:#2a2c2f;"></div><div style="left:668.88px;top:390.25px;width:3.40px;height:0.50px;background:#2a2c2f;"></div><div style="left:639.98px;top:307.00px;width:9.40px;height:18.40px;background:linear-gradient(#f4fafe 0%,#f4fafe 9%,#5aaee8 13%,#86c6f1 44%,#2c4a5e 47%,#2c4a5e 52%,#c6e3f7 56%,#e4f2fb 86%,#ffffff 92%,#ffffff 100%);border-radius:1.2px;border:0.5px solid #15212b;box-shadow:0 0.6px 1px rgba(0,0,0,0.6);"></div><div style="left:637.68px;top:401.20px;width:37.52px;height:11.20px;background:#1e2023;"></div><span class="t" style="left:640.68px;top:404.40px;font-size:6.3px;color:#f0f0f0;font-weight:bold;">0.00</span><span class="t" style="left:657.88px;top:404.00px;font-size:5.4px;color:#8a8d91;font-weight:normal;width:16.50px;text-align:center;">-&#8734;</span><div style="left:638.48px;top:413.40px;width:36.40px;height:12.00px;background:#1c2026;border-radius:1.4px 1.4px 0 0;"></div><div style="left:638.78px;top:413.80px;width:17.20px;height:11.40px;background:linear-gradient(#536277,#3a4759);border-radius:1px 0 0 0;"></div><div style="left:656.98px;top:413.80px;width:17.60px;height:11.40px;background:linear-gradient(#536277,#3a4759);border-radius:0 1px 0 0;"></div><span class="t" style="left:638.78px;top:418.00px;font-size:4.4px;color:#1b2129;font-weight:bold;width:17.30px;text-align:center;">R</span><span class="t" style="left:656.98px;top:418.00px;font-size:4.4px;color:#1b2129;font-weight:bold;width:17.60px;text-align:center;">W</span>
<div style="left:713.20px;top:107.40px;width:88.00px;height:320.00px;background:#1b1d20;"></div>
<span class="t" style="left:720.20px;top:111.00px;font-size:5.1px;color:#e6e6e6;font-weight:bold;">VSTi</span>
<span class="t" style="left:743.00px;top:111.00px;font-size:5.1px;color:#e6e6e6;font-weight:bold;">Media</span>
<span class="t" style="left:770.80px;top:111.00px;font-size:5.1px;color:#e6e6e6;font-weight:bold;">CR</span>
<div style="left:783.60px;top:108.20px;width:20.00px;height:11.00px;background:#2a2d31;border-radius:2.5px 0 0 0;border:0.6px solid #3b3e42;border-bottom:none;"></div>
<div style="left:714.20px;top:118.20px;width:88.00px;height:310.00px;background:#2a2d31;border-top:0.6px solid #3b3e42;border-left:0.6px solid #3b3e42;border-radius:2.5px 0 0 0;"></div>
<div style="left:784.20px;top:117.60px;width:17.00px;height:1.60px;background:#2a2d31;"></div>
<span class="t" style="left:789.60px;top:111.00px;font-size:5.1px;color:#f4f4f4;font-weight:bold;">Meter</span>
<div style="left:718.10px;top:122.40px;width:83.00px;height:8.90px;background:#53565a;border-radius:1.5px 0 0 1.5px;"></div>
<svg style="left:720.6px;top:124.6px" width="4" height="4.6" viewBox="0 0 4 4.6"><path d="M0.2 0.2 L3.6 2.3 L0.2 4.4Z" fill="#f2f2f2"/></svg>
<span class="t" style="left:727.80px;top:125.00px;font-size:5.0px;color:#e6e6e6;font-weight:normal;">Master</span>
<div style="left:718.10px;top:138.70px;width:82.00px;height:7.30px;background:#050506;"></div>
<span class="t" style="left:727.80px;top:141.00px;font-size:4.2px;color:#f0f0f0;font-weight:bold;">Digital Scale</span>
<span class="t" style="left:774.40px;top:141.00px;font-size:4.0px;color:#3f7896;font-weight:normal;">-18 dBFS</span>
<div style="left:718.80px;top:148.80px;width:41.60px;height:5.60px;background:linear-gradient(#8e9194,#696c70);border-radius:0.8px;border:0.5px solid #9a9da1;"></div>
<div style="left:762.80px;top:148.80px;width:38.00px;height:5.60px;background:linear-gradient(#8e9194,#696c70);border-radius:0.8px;border:0.5px solid #9a9da1;"></div>
<span class="t" style="left:718.80px;top:150.00px;font-size:4.2px;color:#0c0c0c;font-weight:bold;width:41.60px;text-align:center;">&#216;</span>
<span class="t" style="left:762.80px;top:150.00px;font-size:5.0px;color:#0c0c0c;font-weight:bold;width:38.00px;text-align:center;">&#8734;</span>
<div style="left:742.80px;top:165.20px;width:38.20px;height:262.00px;background:#14181a;"></div>
<div style="left:743.60px;top:165.90px;width:18.40px;height:52.00px;background:#3cf59b;"></div>
<div style="left:763.00px;top:165.90px;width:17.30px;height:52.00px;background:#3cf59b;"></div>
<div style="left:743.60px;top:217.90px;width:18.40px;height:210.00px;background:linear-gradient(#2cf0ae 0%,#27e6c8 28%,#22d4e8 65%,#1fc6f6 100%);"></div>
<div style="left:763.00px;top:217.90px;width:17.30px;height:210.00px;background:linear-gradient(#2cf0ae 0%,#27e6c8 28%,#22d4e8 65%,#1fc6f6 100%);"></div>
<div style="left:743.60px;top:217.50px;width:18.40px;height:0.70px;background:#168e74;"></div>
<div style="left:763.00px;top:217.50px;width:17.30px;height:0.70px;background:#168e74;"></div>
<div style="left:739.20px;top:165.70px;width:3.40px;height:0.60px;background:#c4c4c4;"></div>
<div style="left:781.60px;top:165.70px;width:3.40px;height:0.60px;background:#c4c4c4;"></div>
<span class="t" style="left:721.00px;top:164.00px;font-size:5.6px;color:#ececec;font-weight:bold;width:15.40px;text-align:right;">0</span>
<span class="t" style="left:787.60px;top:164.00px;font-size:5.6px;color:#ececec;font-weight:bold;">0</span>
<div style="left:739.20px;top:198.20px;width:3.40px;height:0.60px;background:#c4c4c4;"></div>
<div style="left:781.60px;top:198.20px;width:3.40px;height:0.60px;background:#c4c4c4;"></div>
<span class="t" style="left:721.00px;top:197.00px;font-size:5.6px;color:#ececec;font-weight:bold;width:15.40px;text-align:right;">5</span>
<span class="t" style="left:787.60px;top:197.00px;font-size:5.6px;color:#ececec;font-weight:bold;">5</span>
<div style="left:743.60px;top:198.20px;width:18.40px;height:0.50px;background:rgba(10,80,80,0.40);"></div>
<div style="left:763.00px;top:198.20px;width:17.30px;height:0.50px;background:rgba(10,80,80,0.40);"></div>
<div style="left:739.20px;top:230.50px;width:3.40px;height:0.60px;background:#c4c4c4;"></div>
<div style="left:781.60px;top:230.50px;width:3.40px;height:0.60px;background:#c4c4c4;"></div>
<span class="t" style="left:721.00px;top:229.00px;font-size:5.6px;color:#ececec;font-weight:bold;width:15.40px;text-align:right;">10</span>
<span class="t" style="left:787.60px;top:229.00px;font-size:5.6px;color:#ececec;font-weight:bold;">10</span>
<div style="left:743.60px;top:230.50px;width:18.40px;height:0.50px;background:rgba(10,80,80,0.40);"></div>
<div style="left:763.00px;top:230.50px;width:17.30px;height:0.50px;background:rgba(10,80,80,0.40);"></div>
<div style="left:739.20px;top:263.60px;width:3.40px;height:0.60px;background:#c4c4c4;"></div>
<div style="left:781.60px;top:263.60px;width:3.40px;height:0.60px;background:#c4c4c4;"></div>
<span class="t" style="left:721.00px;top:262.00px;font-size:5.6px;color:#ececec;font-weight:bold;width:15.40px;text-align:right;">15</span>
<span class="t" style="left:787.60px;top:262.00px;font-size:5.6px;color:#ececec;font-weight:bold;">15</span>
<div style="left:743.60px;top:263.60px;width:18.40px;height:0.50px;background:rgba(10,80,80,0.40);"></div>
<div style="left:763.00px;top:263.60px;width:17.30px;height:0.50px;background:rgba(10,80,80,0.40);"></div>
<div style="left:739.20px;top:296.20px;width:3.40px;height:0.60px;background:#c4c4c4;"></div>
<div style="left:781.60px;top:296.20px;width:3.40px;height:0.60px;background:#c4c4c4;"></div>
<span class="t" style="left:721.00px;top:295.00px;font-size:5.6px;color:#ececec;font-weight:bold;width:15.40px;text-align:right;">20</span>
<span class="t" style="left:787.60px;top:295.00px;font-size:5.6px;color:#ececec;font-weight:bold;">20</span>
<div style="left:743.60px;top:296.20px;width:18.40px;height:0.50px;background:rgba(10,80,80,0.40);"></div>
<div style="left:763.00px;top:296.20px;width:17.30px;height:0.50px;background:rgba(10,80,80,0.40);"></div>
<div style="left:739.20px;top:323.20px;width:3.40px;height:0.60px;background:#c4c4c4;"></div>
<div style="left:781.60px;top:323.20px;width:3.40px;height:0.60px;background:#c4c4c4;"></div>
<span class="t" style="left:721.00px;top:322.00px;font-size:5.6px;color:#ececec;font-weight:bold;width:15.40px;text-align:right;">25</span>
<span class="t" style="left:787.60px;top:322.00px;font-size:5.6px;color:#ececec;font-weight:bold;">25</span>
<div style="left:743.60px;top:323.20px;width:18.40px;height:0.50px;background:rgba(10,80,80,0.40);"></div>
<div style="left:763.00px;top:323.20px;width:17.30px;height:0.50px;background:rgba(10,80,80,0.40);"></div>
<div style="left:739.20px;top:347.10px;width:3.40px;height:0.60px;background:#c4c4c4;"></div>
<div style="left:781.60px;top:347.10px;width:3.40px;height:0.60px;background:#c4c4c4;"></div>
<span class="t" style="left:721.00px;top:346.00px;font-size:5.6px;color:#ececec;font-weight:bold;width:15.40px;text-align:right;">30</span>
<span class="t" style="left:787.60px;top:346.00px;font-size:5.6px;color:#ececec;font-weight:bold;">30</span>
<div style="left:743.60px;top:347.10px;width:18.40px;height:0.50px;background:rgba(10,80,80,0.40);"></div>
<div style="left:763.00px;top:347.10px;width:17.30px;height:0.50px;background:rgba(10,80,80,0.40);"></div>
<div style="left:739.20px;top:368.70px;width:3.40px;height:0.60px;background:#c4c4c4;"></div>
<div style="left:781.60px;top:368.70px;width:3.40px;height:0.60px;background:#c4c4c4;"></div>
<span class="t" style="left:721.00px;top:367.00px;font-size:5.6px;color:#ececec;font-weight:bold;width:15.40px;text-align:right;">35</span>
<span class="t" style="left:787.60px;top:367.00px;font-size:5.6px;color:#ececec;font-weight:bold;">35</span>
<div style="left:743.60px;top:368.70px;width:18.40px;height:0.50px;background:rgba(10,80,80,0.40);"></div>
<div style="left:763.00px;top:368.70px;width:17.30px;height:0.50px;background:rgba(10,80,80,0.40);"></div>
<div style="left:739.20px;top:387.50px;width:3.40px;height:0.60px;background:#c4c4c4;"></div>
<div style="left:781.60px;top:387.50px;width:3.40px;height:0.60px;background:#c4c4c4;"></div>
<span class="t" style="left:721.00px;top:386.00px;font-size:5.6px;color:#ececec;font-weight:bold;width:15.40px;text-align:right;">40</span>
<span class="t" style="left:787.60px;top:386.00px;font-size:5.6px;color:#ececec;font-weight:bold;">40</span>
<div style="left:743.60px;top:387.50px;width:18.40px;height:0.50px;background:rgba(10,80,80,0.40);"></div>
<div style="left:763.00px;top:387.50px;width:17.30px;height:0.50px;background:rgba(10,80,80,0.40);"></div>
<div style="left:739.20px;top:413.70px;width:3.40px;height:0.60px;background:#c4c4c4;"></div>
<div style="left:781.60px;top:413.70px;width:3.40px;height:0.60px;background:#c4c4c4;"></div>
<span class="t" style="left:721.00px;top:412.00px;font-size:5.6px;color:#ececec;font-weight:bold;width:15.40px;text-align:right;">50</span>
<span class="t" style="left:787.60px;top:412.00px;font-size:5.6px;color:#ececec;font-weight:bold;">50</span>
<div style="left:743.60px;top:413.70px;width:18.40px;height:0.50px;background:rgba(10,80,80,0.40);"></div>
<div style="left:763.00px;top:413.70px;width:17.30px;height:0.50px;background:rgba(10,80,80,0.40);"></div>
<div style="left:739.20px;top:423.20px;width:3.40px;height:0.60px;background:#c4c4c4;"></div>
<div style="left:781.60px;top:423.20px;width:3.40px;height:0.60px;background:#c4c4c4;"></div>
<span class="t" style="left:721.00px;top:422.00px;font-size:5.6px;color:#ececec;font-weight:bold;width:15.40px;text-align:right;">60</span>
<span class="t" style="left:787.60px;top:422.00px;font-size:5.6px;color:#ececec;font-weight:bold;">60</span>
<div style="left:743.60px;top:423.20px;width:18.40px;height:0.50px;background:rgba(10,80,80,0.40);"></div>
<div style="left:763.00px;top:423.20px;width:17.30px;height:0.50px;background:rgba(10,80,80,0.40);"></div>
<div style="left:741.00px;top:172.25px;width:1.60px;height:0.50px;background:#9a9da1;"></div>
<div style="left:781.60px;top:172.25px;width:1.60px;height:0.50px;background:#9a9da1;"></div>
<div style="left:741.00px;top:178.75px;width:1.60px;height:0.50px;background:#9a9da1;"></div>
<div style="left:781.60px;top:178.75px;width:1.60px;height:0.50px;background:#9a9da1;"></div>
<div style="left:741.00px;top:185.25px;width:1.60px;height:0.50px;background:#9a9da1;"></div>
<div style="left:781.60px;top:185.25px;width:1.60px;height:0.50px;background:#9a9da1;"></div>
<div style="left:741.00px;top:191.75px;width:1.60px;height:0.50px;background:#9a9da1;"></div>
<div style="left:781.60px;top:191.75px;width:1.60px;height:0.50px;background:#9a9da1;"></div>
<div style="left:741.00px;top:204.71px;width:1.60px;height:0.50px;background:#9a9da1;"></div>
<div style="left:781.60px;top:204.71px;width:1.60px;height:0.50px;background:#9a9da1;"></div>
<div style="left:741.00px;top:211.17px;width:1.60px;height:0.50px;background:#9a9da1;"></div>
<div style="left:781.60px;top:211.17px;width:1.60px;height:0.50px;background:#9a9da1;"></div>
<div style="left:741.00px;top:217.63px;width:1.60px;height:0.50px;background:#9a9da1;"></div>
<div style="left:781.60px;top:217.63px;width:1.60px;height:0.50px;background:#9a9da1;"></div>
<div style="left:741.00px;top:224.09px;width:1.60px;height:0.50px;background:#9a9da1;"></div>
<div style="left:781.60px;top:224.09px;width:1.60px;height:0.50px;background:#9a9da1;"></div>
<div style="left:741.00px;top:237.17px;width:1.60px;height:0.50px;background:#9a9da1;"></div>
<div style="left:781.60px;top:237.17px;width:1.60px;height:0.50px;background:#9a9da1;"></div>
<div style="left:741.00px;top:243.79px;width:1.60px;height:0.50px;background:#9a9da1;"></div>
<div style="left:781.60px;top:243.79px;width:1.60px;height:0.50px;background:#9a9da1;"></div>
<div style="left:741.00px;top:250.41px;width:1.60px;height:0.50px;background:#9a9da1;"></div>
<div style="left:781.60px;top:250.41px;width:1.60px;height:0.50px;background:#9a9da1;"></div>
<div style="left:741.00px;top:257.03px;width:1.60px;height:0.50px;background:#9a9da1;"></div>
<div style="left:781.60px;top:257.03px;width:1.60px;height:0.50px;background:#9a9da1;"></div>
<div style="left:741.00px;top:270.17px;width:1.60px;height:0.50px;background:#9a9da1;"></div>
<div style="left:781.60px;top:270.17px;width:1.60px;height:0.50px;background:#9a9da1;"></div>
<div style="left:741.00px;top:276.69px;width:1.60px;height:0.50px;background:#9a9da1;"></div>
<div style="left:781.60px;top:276.69px;width:1.60px;height:0.50px;background:#9a9da1;"></div>
<div style="left:741.00px;top:283.21px;width:1.60px;height:0.50px;background:#9a9da1;"></div>
<div style="left:781.60px;top:283.21px;width:1.60px;height:0.50px;background:#9a9da1;"></div>
<div style="left:741.00px;top:289.73px;width:1.60px;height:0.50px;background:#9a9da1;"></div>
<div style="left:781.60px;top:289.73px;width:1.60px;height:0.50px;background:#9a9da1;"></div>
<div style="left:741.00px;top:400.80px;width:1.60px;height:0.50px;background:#9a9da1;"></div>
<div style="left:781.60px;top:400.80px;width:1.60px;height:0.50px;background:#9a9da1;"></div>
</div></body></html>
